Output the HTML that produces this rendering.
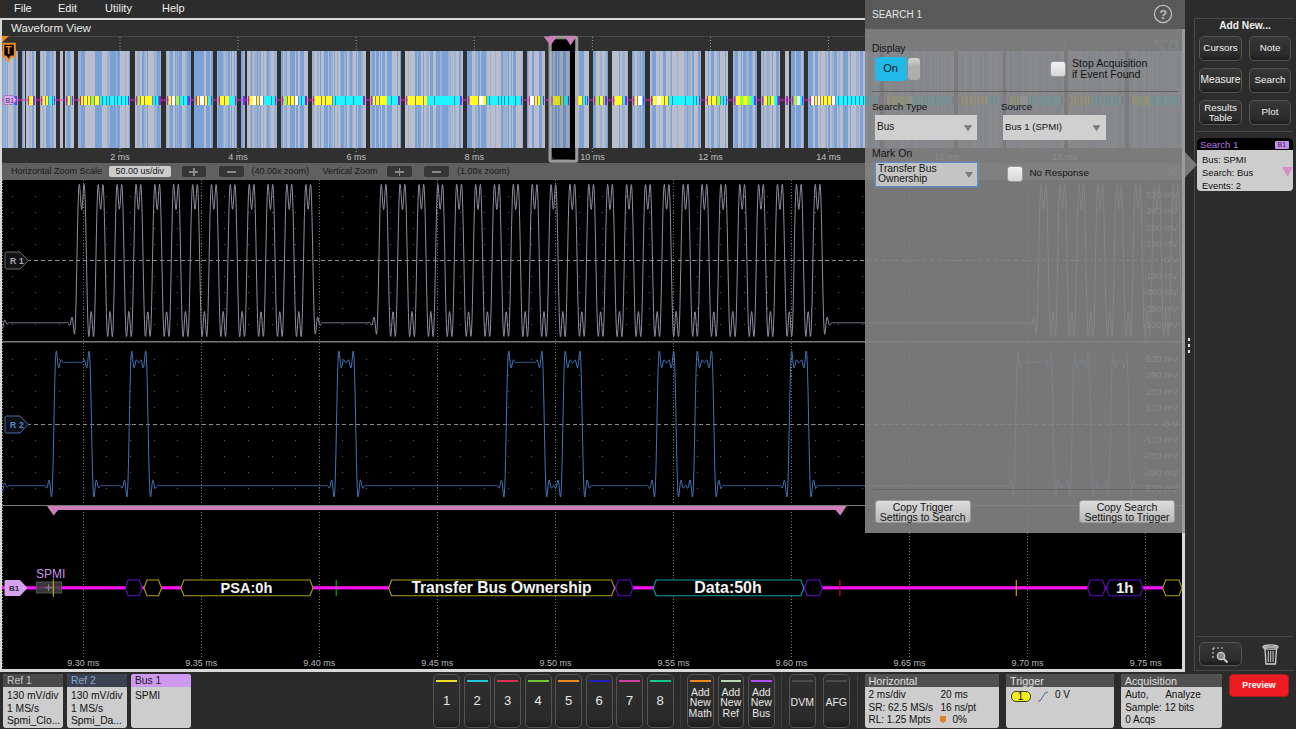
<!DOCTYPE html><html><head><meta charset="utf-8"><style>
*{margin:0;padding:0;box-sizing:border-box}
html,body{width:1296px;height:729px;overflow:hidden;background:#2b2b2b;font-family:"Liberation Sans", sans-serif;}
.a{position:absolute}
.t{position:absolute;white-space:nowrap;line-height:1}
</style></head><body>
<div class="a" style="left:0;top:0;width:1296px;height:18px;background:#2c2c2c"></div>
<div class="t" style="left:14px;top:2.5px;font-size:11px;color:#f0f0f0">File</div>
<div class="t" style="left:58px;top:2.5px;font-size:11px;color:#f0f0f0">Edit</div>
<div class="t" style="left:105px;top:2.5px;font-size:11px;color:#f0f0f0">Utility</div>
<div class="t" style="left:162px;top:2.5px;font-size:11px;color:#f0f0f0">Help</div>
<div class="a" style="left:0;top:18px;width:1184.5px;height:653.5px;background:#d8d8d8"></div>
<div class="a" style="left:2px;top:20px;width:1180px;height:16px;background:#2e2e2e"></div>
<div class="t" style="left:11px;top:23px;font-size:11.5px;color:#e8e8e8">Waveform View</div>
<div class="a" style="left:2px;top:36px;width:1180px;height:1px;background:#4a4a4a"></div>
<div class="a" style="left:2px;top:37px;width:1180px;height:126px;background:#303030"></div>
<div class="a" style="left:2px;top:163px;width:1180px;height:17px;background:#606060"></div>
<div class="a" style="left:2px;top:180px;width:1180px;height:489px;background:#000"></div>
<svg class="a" style="left:0;top:0" width="1296" height="729" viewBox="0 0 1296 729">
<g shape-rendering="crispEdges">
<rect x="2.00" y="51" width="15.80" height="97" fill="#7aa2d6"/>
<rect x="3.00" y="51" width="2.00" height="97" fill="#9cb0d0"/>
<rect x="6.00" y="51" width="1.00" height="97" fill="#b9bdcc"/>
<rect x="8.00" y="51" width="1.00" height="97" fill="#b9bdcc"/>
<rect x="9.00" y="51" width="1.00" height="97" fill="#b9bdcc"/>
<rect x="10.00" y="51" width="1.00" height="97" fill="#b9bdcc"/>
<rect x="11.00" y="51" width="1.00" height="97" fill="#b9bdcc"/>
<rect x="12.00" y="51" width="1.00" height="97" fill="#b9bdcc"/>
<rect x="13.00" y="51" width="1.00" height="97" fill="#9cb0d0"/>
<rect x="16.00" y="51" width="1.80" height="97" fill="#9cb0d0"/>
<rect x="21.80" y="51" width="3.50" height="97" fill="#7aa2d6"/>
<rect x="22.80" y="51" width="1.00" height="97" fill="#9cb0d0"/>
<rect x="23.80" y="51" width="1.00" height="97" fill="#b9bdcc"/>
<rect x="24.80" y="51" width="0.50" height="97" fill="#9cb0d0"/>
<rect x="26.40" y="51" width="9.30" height="97" fill="#7aa2d6"/>
<rect x="26.40" y="51" width="2.00" height="97" fill="#b9bdcc"/>
<rect x="28.40" y="51" width="1.00" height="97" fill="#b9bdcc"/>
<rect x="29.40" y="51" width="2.00" height="97" fill="#9cb0d0"/>
<rect x="31.40" y="51" width="1.00" height="97" fill="#b9bdcc"/>
<rect x="34.40" y="51" width="1.30" height="97" fill="#b9bdcc"/>
<rect x="39.60" y="51" width="16.40" height="97" fill="#7aa2d6"/>
<rect x="39.60" y="51" width="1.00" height="97" fill="#9cb0d0"/>
<rect x="40.60" y="51" width="2.00" height="97" fill="#b9bdcc"/>
<rect x="42.60" y="51" width="1.00" height="97" fill="#9cb0d0"/>
<rect x="43.60" y="51" width="2.00" height="97" fill="#b9bdcc"/>
<rect x="49.60" y="51" width="1.00" height="97" fill="#9cb0d0"/>
<rect x="50.60" y="51" width="1.00" height="97" fill="#9cb0d0"/>
<rect x="52.60" y="51" width="1.00" height="97" fill="#9cb0d0"/>
<rect x="53.60" y="51" width="1.00" height="97" fill="#b9bdcc"/>
<rect x="54.60" y="51" width="1.00" height="97" fill="#b9bdcc"/>
<rect x="55.60" y="51" width="0.40" height="97" fill="#b9bdcc"/>
<rect x="60.00" y="51" width="3.30" height="97" fill="#7aa2d6"/>
<rect x="60.00" y="51" width="2.00" height="97" fill="#b9bdcc"/>
<rect x="62.00" y="51" width="1.00" height="97" fill="#b9bdcc"/>
<rect x="63.00" y="51" width="0.30" height="97" fill="#9cb0d0"/>
<rect x="64.60" y="51" width="9.40" height="97" fill="#7aa2d6"/>
<rect x="64.60" y="51" width="1.00" height="97" fill="#b9bdcc"/>
<rect x="65.60" y="51" width="1.00" height="97" fill="#9cb0d0"/>
<rect x="69.60" y="51" width="1.00" height="97" fill="#9cb0d0"/>
<rect x="70.60" y="51" width="3.00" height="97" fill="#b9bdcc"/>
<rect x="78.00" y="51" width="52.00" height="97" fill="#7aa2d6"/>
<rect x="78.00" y="51" width="3.00" height="97" fill="#9cb0d0"/>
<rect x="85.00" y="51" width="3.00" height="97" fill="#b9bdcc"/>
<rect x="88.00" y="51" width="1.00" height="97" fill="#b9bdcc"/>
<rect x="89.00" y="51" width="1.00" height="97" fill="#b9bdcc"/>
<rect x="90.00" y="51" width="1.00" height="97" fill="#b9bdcc"/>
<rect x="91.00" y="51" width="1.00" height="97" fill="#b9bdcc"/>
<rect x="92.00" y="51" width="1.00" height="97" fill="#b9bdcc"/>
<rect x="93.00" y="51" width="1.00" height="97" fill="#b9bdcc"/>
<rect x="94.00" y="51" width="1.00" height="97" fill="#b9bdcc"/>
<rect x="102.00" y="51" width="1.00" height="97" fill="#b9bdcc"/>
<rect x="103.00" y="51" width="1.00" height="97" fill="#b9bdcc"/>
<rect x="104.00" y="51" width="1.00" height="97" fill="#b9bdcc"/>
<rect x="105.00" y="51" width="1.00" height="97" fill="#b9bdcc"/>
<rect x="106.00" y="51" width="1.00" height="97" fill="#b9bdcc"/>
<rect x="107.00" y="51" width="2.00" height="97" fill="#9cb0d0"/>
<rect x="109.00" y="51" width="1.00" height="97" fill="#9cb0d0"/>
<rect x="116.00" y="51" width="1.00" height="97" fill="#9cb0d0"/>
<rect x="120.00" y="51" width="2.00" height="97" fill="#b9bdcc"/>
<rect x="122.00" y="51" width="1.00" height="97" fill="#b9bdcc"/>
<rect x="123.00" y="51" width="1.00" height="97" fill="#b9bdcc"/>
<rect x="124.00" y="51" width="1.00" height="97" fill="#b9bdcc"/>
<rect x="125.00" y="51" width="1.00" height="97" fill="#9cb0d0"/>
<rect x="126.00" y="51" width="1.00" height="97" fill="#b9bdcc"/>
<rect x="127.00" y="51" width="1.00" height="97" fill="#b9bdcc"/>
<rect x="128.00" y="51" width="1.00" height="97" fill="#b9bdcc"/>
<rect x="134.70" y="51" width="26.70" height="97" fill="#7aa2d6"/>
<rect x="134.70" y="51" width="2.00" height="97" fill="#b9bdcc"/>
<rect x="136.70" y="51" width="1.00" height="97" fill="#9cb0d0"/>
<rect x="137.70" y="51" width="1.00" height="97" fill="#9cb0d0"/>
<rect x="138.70" y="51" width="1.00" height="97" fill="#9cb0d0"/>
<rect x="139.70" y="51" width="2.00" height="97" fill="#b9bdcc"/>
<rect x="143.70" y="51" width="2.00" height="97" fill="#9cb0d0"/>
<rect x="145.70" y="51" width="1.00" height="97" fill="#b9bdcc"/>
<rect x="147.70" y="51" width="3.00" height="97" fill="#b9bdcc"/>
<rect x="150.70" y="51" width="1.00" height="97" fill="#b9bdcc"/>
<rect x="151.70" y="51" width="1.00" height="97" fill="#b9bdcc"/>
<rect x="152.70" y="51" width="1.00" height="97" fill="#b9bdcc"/>
<rect x="153.70" y="51" width="3.00" height="97" fill="#9cb0d0"/>
<rect x="159.70" y="51" width="1.00" height="97" fill="#9cb0d0"/>
<rect x="160.70" y="51" width="0.70" height="97" fill="#b9bdcc"/>
<rect x="165.50" y="51" width="25.00" height="97" fill="#7aa2d6"/>
<rect x="165.50" y="51" width="1.00" height="97" fill="#9cb0d0"/>
<rect x="166.50" y="51" width="2.00" height="97" fill="#b9bdcc"/>
<rect x="168.50" y="51" width="1.00" height="97" fill="#9cb0d0"/>
<rect x="172.50" y="51" width="1.00" height="97" fill="#b9bdcc"/>
<rect x="173.50" y="51" width="1.00" height="97" fill="#b9bdcc"/>
<rect x="175.50" y="51" width="1.00" height="97" fill="#9cb0d0"/>
<rect x="177.50" y="51" width="1.00" height="97" fill="#9cb0d0"/>
<rect x="181.50" y="51" width="1.00" height="97" fill="#b9bdcc"/>
<rect x="182.50" y="51" width="1.00" height="97" fill="#b9bdcc"/>
<rect x="183.50" y="51" width="1.00" height="97" fill="#b9bdcc"/>
<rect x="184.50" y="51" width="2.00" height="97" fill="#9cb0d0"/>
<rect x="194.00" y="51" width="19.00" height="97" fill="#7aa2d6"/>
<rect x="204.00" y="51" width="1.00" height="97" fill="#b9bdcc"/>
<rect x="205.00" y="51" width="1.00" height="97" fill="#b9bdcc"/>
<rect x="210.00" y="51" width="1.00" height="97" fill="#b9bdcc"/>
<rect x="217.40" y="51" width="19.60" height="97" fill="#7aa2d6"/>
<rect x="217.40" y="51" width="1.00" height="97" fill="#9cb0d0"/>
<rect x="223.40" y="51" width="1.00" height="97" fill="#9cb0d0"/>
<rect x="224.40" y="51" width="1.00" height="97" fill="#b9bdcc"/>
<rect x="225.40" y="51" width="3.00" height="97" fill="#9cb0d0"/>
<rect x="230.40" y="51" width="1.00" height="97" fill="#b9bdcc"/>
<rect x="232.40" y="51" width="1.00" height="97" fill="#b9bdcc"/>
<rect x="233.40" y="51" width="1.00" height="97" fill="#b9bdcc"/>
<rect x="235.40" y="51" width="1.00" height="97" fill="#b9bdcc"/>
<rect x="241.00" y="51" width="4.40" height="97" fill="#7aa2d6"/>
<rect x="243.00" y="51" width="2.40" height="97" fill="#9cb0d0"/>
<rect x="246.70" y="51" width="30.30" height="97" fill="#7aa2d6"/>
<rect x="246.70" y="51" width="2.00" height="97" fill="#b9bdcc"/>
<rect x="248.70" y="51" width="1.00" height="97" fill="#b9bdcc"/>
<rect x="249.70" y="51" width="1.00" height="97" fill="#9cb0d0"/>
<rect x="251.70" y="51" width="1.00" height="97" fill="#9cb0d0"/>
<rect x="252.70" y="51" width="1.00" height="97" fill="#b9bdcc"/>
<rect x="253.70" y="51" width="2.00" height="97" fill="#9cb0d0"/>
<rect x="255.70" y="51" width="1.00" height="97" fill="#9cb0d0"/>
<rect x="257.70" y="51" width="2.00" height="97" fill="#9cb0d0"/>
<rect x="260.70" y="51" width="1.00" height="97" fill="#b9bdcc"/>
<rect x="261.70" y="51" width="1.00" height="97" fill="#b9bdcc"/>
<rect x="262.70" y="51" width="1.00" height="97" fill="#9cb0d0"/>
<rect x="263.70" y="51" width="2.00" height="97" fill="#b9bdcc"/>
<rect x="265.70" y="51" width="1.00" height="97" fill="#9cb0d0"/>
<rect x="268.70" y="51" width="2.00" height="97" fill="#9cb0d0"/>
<rect x="270.70" y="51" width="3.00" height="97" fill="#b9bdcc"/>
<rect x="273.70" y="51" width="2.00" height="97" fill="#9cb0d0"/>
<rect x="275.70" y="51" width="1.00" height="97" fill="#9cb0d0"/>
<rect x="280.60" y="51" width="27.30" height="97" fill="#7aa2d6"/>
<rect x="282.60" y="51" width="1.00" height="97" fill="#b9bdcc"/>
<rect x="283.60" y="51" width="2.00" height="97" fill="#9cb0d0"/>
<rect x="286.60" y="51" width="2.00" height="97" fill="#b9bdcc"/>
<rect x="288.60" y="51" width="1.00" height="97" fill="#b9bdcc"/>
<rect x="294.60" y="51" width="1.00" height="97" fill="#b9bdcc"/>
<rect x="297.60" y="51" width="1.00" height="97" fill="#b9bdcc"/>
<rect x="298.60" y="51" width="1.00" height="97" fill="#b9bdcc"/>
<rect x="303.60" y="51" width="2.00" height="97" fill="#b9bdcc"/>
<rect x="305.60" y="51" width="1.00" height="97" fill="#b9bdcc"/>
<rect x="306.60" y="51" width="1.00" height="97" fill="#b9bdcc"/>
<rect x="307.60" y="51" width="0.30" height="97" fill="#b9bdcc"/>
<rect x="311.80" y="51" width="54.00" height="97" fill="#7aa2d6"/>
<rect x="311.80" y="51" width="2.00" height="97" fill="#9cb0d0"/>
<rect x="313.80" y="51" width="3.00" height="97" fill="#b9bdcc"/>
<rect x="316.80" y="51" width="1.00" height="97" fill="#9cb0d0"/>
<rect x="317.80" y="51" width="1.00" height="97" fill="#9cb0d0"/>
<rect x="318.80" y="51" width="1.00" height="97" fill="#b9bdcc"/>
<rect x="320.80" y="51" width="1.00" height="97" fill="#b9bdcc"/>
<rect x="321.80" y="51" width="1.00" height="97" fill="#b9bdcc"/>
<rect x="322.80" y="51" width="1.00" height="97" fill="#b9bdcc"/>
<rect x="327.80" y="51" width="1.00" height="97" fill="#b9bdcc"/>
<rect x="330.80" y="51" width="2.00" height="97" fill="#9cb0d0"/>
<rect x="332.80" y="51" width="1.00" height="97" fill="#b9bdcc"/>
<rect x="334.80" y="51" width="1.00" height="97" fill="#b9bdcc"/>
<rect x="335.80" y="51" width="1.00" height="97" fill="#b9bdcc"/>
<rect x="336.80" y="51" width="1.00" height="97" fill="#9cb0d0"/>
<rect x="337.80" y="51" width="1.00" height="97" fill="#b9bdcc"/>
<rect x="338.80" y="51" width="1.00" height="97" fill="#b9bdcc"/>
<rect x="339.80" y="51" width="1.00" height="97" fill="#9cb0d0"/>
<rect x="343.80" y="51" width="1.00" height="97" fill="#9cb0d0"/>
<rect x="344.80" y="51" width="1.00" height="97" fill="#9cb0d0"/>
<rect x="346.80" y="51" width="1.00" height="97" fill="#b9bdcc"/>
<rect x="347.80" y="51" width="1.00" height="97" fill="#b9bdcc"/>
<rect x="348.80" y="51" width="1.00" height="97" fill="#9cb0d0"/>
<rect x="351.80" y="51" width="1.00" height="97" fill="#9cb0d0"/>
<rect x="352.80" y="51" width="3.00" height="97" fill="#b9bdcc"/>
<rect x="356.80" y="51" width="1.00" height="97" fill="#b9bdcc"/>
<rect x="360.80" y="51" width="2.00" height="97" fill="#9cb0d0"/>
<rect x="362.80" y="51" width="2.00" height="97" fill="#b9bdcc"/>
<rect x="364.80" y="51" width="1.00" height="97" fill="#b9bdcc"/>
<rect x="369.80" y="51" width="30.80" height="97" fill="#7aa2d6"/>
<rect x="369.80" y="51" width="2.00" height="97" fill="#9cb0d0"/>
<rect x="374.80" y="51" width="1.00" height="97" fill="#b9bdcc"/>
<rect x="378.80" y="51" width="1.00" height="97" fill="#b9bdcc"/>
<rect x="380.80" y="51" width="1.00" height="97" fill="#b9bdcc"/>
<rect x="384.80" y="51" width="1.00" height="97" fill="#b9bdcc"/>
<rect x="385.80" y="51" width="1.00" height="97" fill="#b9bdcc"/>
<rect x="391.80" y="51" width="2.00" height="97" fill="#b9bdcc"/>
<rect x="393.80" y="51" width="1.00" height="97" fill="#b9bdcc"/>
<rect x="394.80" y="51" width="1.00" height="97" fill="#b9bdcc"/>
<rect x="395.80" y="51" width="1.00" height="97" fill="#b9bdcc"/>
<rect x="397.80" y="51" width="2.00" height="97" fill="#b9bdcc"/>
<rect x="404.70" y="51" width="58.00" height="97" fill="#7aa2d6"/>
<rect x="404.70" y="51" width="1.00" height="97" fill="#b9bdcc"/>
<rect x="405.70" y="51" width="1.00" height="97" fill="#b9bdcc"/>
<rect x="406.70" y="51" width="1.00" height="97" fill="#b9bdcc"/>
<rect x="407.70" y="51" width="1.00" height="97" fill="#9cb0d0"/>
<rect x="408.70" y="51" width="1.00" height="97" fill="#b9bdcc"/>
<rect x="409.70" y="51" width="1.00" height="97" fill="#b9bdcc"/>
<rect x="410.70" y="51" width="1.00" height="97" fill="#b9bdcc"/>
<rect x="411.70" y="51" width="1.00" height="97" fill="#b9bdcc"/>
<rect x="412.70" y="51" width="1.00" height="97" fill="#b9bdcc"/>
<rect x="413.70" y="51" width="1.00" height="97" fill="#b9bdcc"/>
<rect x="416.70" y="51" width="1.00" height="97" fill="#9cb0d0"/>
<rect x="420.70" y="51" width="2.00" height="97" fill="#b9bdcc"/>
<rect x="423.70" y="51" width="2.00" height="97" fill="#b9bdcc"/>
<rect x="425.70" y="51" width="3.00" height="97" fill="#9cb0d0"/>
<rect x="428.70" y="51" width="1.00" height="97" fill="#b9bdcc"/>
<rect x="432.70" y="51" width="3.00" height="97" fill="#b9bdcc"/>
<rect x="439.70" y="51" width="2.00" height="97" fill="#9cb0d0"/>
<rect x="447.70" y="51" width="3.00" height="97" fill="#9cb0d0"/>
<rect x="450.70" y="51" width="1.00" height="97" fill="#b9bdcc"/>
<rect x="451.70" y="51" width="1.00" height="97" fill="#9cb0d0"/>
<rect x="452.70" y="51" width="1.00" height="97" fill="#b9bdcc"/>
<rect x="453.70" y="51" width="2.00" height="97" fill="#9cb0d0"/>
<rect x="455.70" y="51" width="3.00" height="97" fill="#b9bdcc"/>
<rect x="460.70" y="51" width="2.00" height="97" fill="#b9bdcc"/>
<rect x="466.80" y="51" width="56.20" height="97" fill="#7aa2d6"/>
<rect x="471.80" y="51" width="2.00" height="97" fill="#b9bdcc"/>
<rect x="473.80" y="51" width="1.00" height="97" fill="#b9bdcc"/>
<rect x="474.80" y="51" width="3.00" height="97" fill="#9cb0d0"/>
<rect x="479.80" y="51" width="1.00" height="97" fill="#b9bdcc"/>
<rect x="485.80" y="51" width="1.00" height="97" fill="#9cb0d0"/>
<rect x="486.80" y="51" width="3.00" height="97" fill="#b9bdcc"/>
<rect x="489.80" y="51" width="1.00" height="97" fill="#9cb0d0"/>
<rect x="490.80" y="51" width="3.00" height="97" fill="#b9bdcc"/>
<rect x="493.80" y="51" width="1.00" height="97" fill="#b9bdcc"/>
<rect x="494.80" y="51" width="1.00" height="97" fill="#9cb0d0"/>
<rect x="495.80" y="51" width="3.00" height="97" fill="#b9bdcc"/>
<rect x="498.80" y="51" width="1.00" height="97" fill="#b9bdcc"/>
<rect x="499.80" y="51" width="1.00" height="97" fill="#b9bdcc"/>
<rect x="502.80" y="51" width="3.00" height="97" fill="#9cb0d0"/>
<rect x="505.80" y="51" width="1.00" height="97" fill="#9cb0d0"/>
<rect x="506.80" y="51" width="1.00" height="97" fill="#9cb0d0"/>
<rect x="508.80" y="51" width="2.00" height="97" fill="#b9bdcc"/>
<rect x="511.80" y="51" width="1.00" height="97" fill="#b9bdcc"/>
<rect x="515.80" y="51" width="2.00" height="97" fill="#b9bdcc"/>
<rect x="517.80" y="51" width="1.00" height="97" fill="#b9bdcc"/>
<rect x="518.80" y="51" width="1.00" height="97" fill="#b9bdcc"/>
<rect x="519.80" y="51" width="1.00" height="97" fill="#b9bdcc"/>
<rect x="520.80" y="51" width="1.00" height="97" fill="#b9bdcc"/>
<rect x="521.80" y="51" width="1.20" height="97" fill="#9cb0d0"/>
<rect x="527.00" y="51" width="18.00" height="97" fill="#7aa2d6"/>
<rect x="528.00" y="51" width="1.00" height="97" fill="#9cb0d0"/>
<rect x="529.00" y="51" width="2.00" height="97" fill="#b9bdcc"/>
<rect x="531.00" y="51" width="1.00" height="97" fill="#b9bdcc"/>
<rect x="534.00" y="51" width="2.00" height="97" fill="#b9bdcc"/>
<rect x="536.00" y="51" width="1.00" height="97" fill="#b9bdcc"/>
<rect x="537.00" y="51" width="1.00" height="97" fill="#b9bdcc"/>
<rect x="538.00" y="51" width="1.00" height="97" fill="#b9bdcc"/>
<rect x="542.00" y="51" width="3.00" height="97" fill="#b9bdcc"/>
<rect x="549.70" y="51" width="20.30" height="97" fill="#7aa2d6"/>
<rect x="549.70" y="51" width="1.00" height="97" fill="#b9bdcc"/>
<rect x="552.70" y="51" width="2.00" height="97" fill="#b9bdcc"/>
<rect x="556.70" y="51" width="1.00" height="97" fill="#b9bdcc"/>
<rect x="558.70" y="51" width="1.00" height="97" fill="#9cb0d0"/>
<rect x="559.70" y="51" width="1.00" height="97" fill="#b9bdcc"/>
<rect x="560.70" y="51" width="1.00" height="97" fill="#b9bdcc"/>
<rect x="561.70" y="51" width="1.00" height="97" fill="#b9bdcc"/>
<rect x="565.70" y="51" width="3.00" height="97" fill="#b9bdcc"/>
<rect x="568.70" y="51" width="1.30" height="97" fill="#9cb0d0"/>
<rect x="575.00" y="51" width="14.00" height="97" fill="#7aa2d6"/>
<rect x="575.00" y="51" width="3.00" height="97" fill="#b9bdcc"/>
<rect x="578.00" y="51" width="1.00" height="97" fill="#b9bdcc"/>
<rect x="584.00" y="51" width="2.00" height="97" fill="#b9bdcc"/>
<rect x="586.00" y="51" width="1.00" height="97" fill="#b9bdcc"/>
<rect x="587.00" y="51" width="1.00" height="97" fill="#b9bdcc"/>
<rect x="588.00" y="51" width="1.00" height="97" fill="#b9bdcc"/>
<rect x="592.50" y="51" width="15.20" height="97" fill="#7aa2d6"/>
<rect x="595.50" y="51" width="3.00" height="97" fill="#b9bdcc"/>
<rect x="598.50" y="51" width="1.00" height="97" fill="#b9bdcc"/>
<rect x="599.50" y="51" width="2.00" height="97" fill="#9cb0d0"/>
<rect x="601.50" y="51" width="2.00" height="97" fill="#b9bdcc"/>
<rect x="603.50" y="51" width="1.00" height="97" fill="#b9bdcc"/>
<rect x="604.50" y="51" width="1.00" height="97" fill="#9cb0d0"/>
<rect x="605.50" y="51" width="1.00" height="97" fill="#9cb0d0"/>
<rect x="611.80" y="51" width="16.10" height="97" fill="#7aa2d6"/>
<rect x="611.80" y="51" width="2.00" height="97" fill="#b9bdcc"/>
<rect x="613.80" y="51" width="1.00" height="97" fill="#b9bdcc"/>
<rect x="614.80" y="51" width="1.00" height="97" fill="#b9bdcc"/>
<rect x="615.80" y="51" width="1.00" height="97" fill="#b9bdcc"/>
<rect x="616.80" y="51" width="1.00" height="97" fill="#b9bdcc"/>
<rect x="617.80" y="51" width="1.00" height="97" fill="#b9bdcc"/>
<rect x="619.80" y="51" width="2.00" height="97" fill="#b9bdcc"/>
<rect x="621.80" y="51" width="3.00" height="97" fill="#9cb0d0"/>
<rect x="624.80" y="51" width="2.00" height="97" fill="#b9bdcc"/>
<rect x="626.80" y="51" width="1.00" height="97" fill="#9cb0d0"/>
<rect x="631.80" y="51" width="13.20" height="97" fill="#7aa2d6"/>
<rect x="632.80" y="51" width="2.00" height="97" fill="#9cb0d0"/>
<rect x="634.80" y="51" width="1.00" height="97" fill="#b9bdcc"/>
<rect x="635.80" y="51" width="1.00" height="97" fill="#b9bdcc"/>
<rect x="636.80" y="51" width="3.00" height="97" fill="#9cb0d0"/>
<rect x="640.80" y="51" width="1.00" height="97" fill="#b9bdcc"/>
<rect x="649.80" y="51" width="51.20" height="97" fill="#7aa2d6"/>
<rect x="649.80" y="51" width="2.00" height="97" fill="#b9bdcc"/>
<rect x="655.80" y="51" width="2.00" height="97" fill="#b9bdcc"/>
<rect x="657.80" y="51" width="1.00" height="97" fill="#b9bdcc"/>
<rect x="658.80" y="51" width="1.00" height="97" fill="#9cb0d0"/>
<rect x="659.80" y="51" width="3.00" height="97" fill="#b9bdcc"/>
<rect x="665.80" y="51" width="2.00" height="97" fill="#b9bdcc"/>
<rect x="667.80" y="51" width="1.00" height="97" fill="#b9bdcc"/>
<rect x="668.80" y="51" width="1.00" height="97" fill="#b9bdcc"/>
<rect x="669.80" y="51" width="1.00" height="97" fill="#9cb0d0"/>
<rect x="671.80" y="51" width="3.00" height="97" fill="#b9bdcc"/>
<rect x="674.80" y="51" width="1.00" height="97" fill="#b9bdcc"/>
<rect x="675.80" y="51" width="1.00" height="97" fill="#b9bdcc"/>
<rect x="676.80" y="51" width="1.00" height="97" fill="#9cb0d0"/>
<rect x="677.80" y="51" width="2.00" height="97" fill="#b9bdcc"/>
<rect x="679.80" y="51" width="1.00" height="97" fill="#b9bdcc"/>
<rect x="680.80" y="51" width="1.00" height="97" fill="#b9bdcc"/>
<rect x="681.80" y="51" width="1.00" height="97" fill="#b9bdcc"/>
<rect x="682.80" y="51" width="1.00" height="97" fill="#b9bdcc"/>
<rect x="683.80" y="51" width="1.00" height="97" fill="#9cb0d0"/>
<rect x="684.80" y="51" width="1.00" height="97" fill="#9cb0d0"/>
<rect x="685.80" y="51" width="1.00" height="97" fill="#9cb0d0"/>
<rect x="687.80" y="51" width="3.00" height="97" fill="#9cb0d0"/>
<rect x="690.80" y="51" width="1.00" height="97" fill="#b9bdcc"/>
<rect x="693.80" y="51" width="3.00" height="97" fill="#b9bdcc"/>
<rect x="696.80" y="51" width="1.00" height="97" fill="#b9bdcc"/>
<rect x="699.80" y="51" width="1.00" height="97" fill="#9cb0d0"/>
<rect x="700.80" y="51" width="0.20" height="97" fill="#b9bdcc"/>
<rect x="705.00" y="51" width="23.00" height="97" fill="#7aa2d6"/>
<rect x="705.00" y="51" width="2.00" height="97" fill="#b9bdcc"/>
<rect x="707.00" y="51" width="1.00" height="97" fill="#b9bdcc"/>
<rect x="709.00" y="51" width="2.00" height="97" fill="#b9bdcc"/>
<rect x="714.00" y="51" width="1.00" height="97" fill="#b9bdcc"/>
<rect x="715.00" y="51" width="1.00" height="97" fill="#b9bdcc"/>
<rect x="716.00" y="51" width="1.00" height="97" fill="#b9bdcc"/>
<rect x="717.00" y="51" width="2.00" height="97" fill="#9cb0d0"/>
<rect x="720.00" y="51" width="2.00" height="97" fill="#b9bdcc"/>
<rect x="722.00" y="51" width="1.00" height="97" fill="#b9bdcc"/>
<rect x="723.00" y="51" width="1.00" height="97" fill="#b9bdcc"/>
<rect x="724.00" y="51" width="1.00" height="97" fill="#b9bdcc"/>
<rect x="726.00" y="51" width="1.00" height="97" fill="#b9bdcc"/>
<rect x="727.00" y="51" width="1.00" height="97" fill="#b9bdcc"/>
<rect x="732.70" y="51" width="23.80" height="97" fill="#7aa2d6"/>
<rect x="732.70" y="51" width="2.00" height="97" fill="#9cb0d0"/>
<rect x="737.70" y="51" width="3.00" height="97" fill="#b9bdcc"/>
<rect x="741.70" y="51" width="1.00" height="97" fill="#b9bdcc"/>
<rect x="745.70" y="51" width="3.00" height="97" fill="#9cb0d0"/>
<rect x="751.70" y="51" width="1.00" height="97" fill="#9cb0d0"/>
<rect x="752.70" y="51" width="1.00" height="97" fill="#b9bdcc"/>
<rect x="753.70" y="51" width="1.00" height="97" fill="#b9bdcc"/>
<rect x="760.70" y="51" width="19.70" height="97" fill="#7aa2d6"/>
<rect x="760.70" y="51" width="1.00" height="97" fill="#9cb0d0"/>
<rect x="761.70" y="51" width="1.00" height="97" fill="#b9bdcc"/>
<rect x="763.70" y="51" width="2.00" height="97" fill="#b9bdcc"/>
<rect x="765.70" y="51" width="3.00" height="97" fill="#9cb0d0"/>
<rect x="768.70" y="51" width="1.00" height="97" fill="#9cb0d0"/>
<rect x="769.70" y="51" width="2.00" height="97" fill="#b9bdcc"/>
<rect x="772.70" y="51" width="2.00" height="97" fill="#b9bdcc"/>
<rect x="774.70" y="51" width="1.00" height="97" fill="#b9bdcc"/>
<rect x="778.70" y="51" width="1.00" height="97" fill="#b9bdcc"/>
<rect x="779.70" y="51" width="0.70" height="97" fill="#b9bdcc"/>
<rect x="784.50" y="51" width="4.50" height="97" fill="#7aa2d6"/>
<rect x="784.50" y="51" width="1.00" height="97" fill="#b9bdcc"/>
<rect x="785.50" y="51" width="1.00" height="97" fill="#b9bdcc"/>
<rect x="786.50" y="51" width="1.00" height="97" fill="#b9bdcc"/>
<rect x="787.50" y="51" width="1.00" height="97" fill="#b9bdcc"/>
<rect x="788.50" y="51" width="0.50" height="97" fill="#b9bdcc"/>
<rect x="790.70" y="51" width="13.30" height="97" fill="#7aa2d6"/>
<rect x="794.70" y="51" width="1.00" height="97" fill="#b9bdcc"/>
<rect x="800.70" y="51" width="1.00" height="97" fill="#b9bdcc"/>
<rect x="801.70" y="51" width="1.00" height="97" fill="#b9bdcc"/>
<rect x="808.00" y="51" width="72.40" height="97" fill="#7aa2d6"/>
<rect x="813.00" y="51" width="1.00" height="97" fill="#b9bdcc"/>
<rect x="814.00" y="51" width="1.00" height="97" fill="#b9bdcc"/>
<rect x="818.00" y="51" width="2.00" height="97" fill="#b9bdcc"/>
<rect x="820.00" y="51" width="1.00" height="97" fill="#9cb0d0"/>
<rect x="821.00" y="51" width="2.00" height="97" fill="#b9bdcc"/>
<rect x="823.00" y="51" width="1.00" height="97" fill="#b9bdcc"/>
<rect x="824.00" y="51" width="1.00" height="97" fill="#b9bdcc"/>
<rect x="825.00" y="51" width="1.00" height="97" fill="#9cb0d0"/>
<rect x="826.00" y="51" width="1.00" height="97" fill="#9cb0d0"/>
<rect x="827.00" y="51" width="1.00" height="97" fill="#b9bdcc"/>
<rect x="830.00" y="51" width="1.00" height="97" fill="#b9bdcc"/>
<rect x="831.00" y="51" width="1.00" height="97" fill="#b9bdcc"/>
<rect x="832.00" y="51" width="2.00" height="97" fill="#9cb0d0"/>
<rect x="837.00" y="51" width="1.00" height="97" fill="#b9bdcc"/>
<rect x="838.00" y="51" width="2.00" height="97" fill="#9cb0d0"/>
<rect x="840.00" y="51" width="3.00" height="97" fill="#b9bdcc"/>
<rect x="848.00" y="51" width="1.00" height="97" fill="#b9bdcc"/>
<rect x="849.00" y="51" width="1.00" height="97" fill="#b9bdcc"/>
<rect x="851.00" y="51" width="1.00" height="97" fill="#b9bdcc"/>
<rect x="852.00" y="51" width="1.00" height="97" fill="#b9bdcc"/>
<rect x="853.00" y="51" width="1.00" height="97" fill="#b9bdcc"/>
<rect x="854.00" y="51" width="1.00" height="97" fill="#b9bdcc"/>
<rect x="855.00" y="51" width="1.00" height="97" fill="#b9bdcc"/>
<rect x="856.00" y="51" width="1.00" height="97" fill="#9cb0d0"/>
<rect x="857.00" y="51" width="1.00" height="97" fill="#9cb0d0"/>
<rect x="858.00" y="51" width="1.00" height="97" fill="#9cb0d0"/>
<rect x="859.00" y="51" width="1.00" height="97" fill="#b9bdcc"/>
<rect x="863.00" y="51" width="1.00" height="97" fill="#b9bdcc"/>
<rect x="864.00" y="51" width="1.00" height="97" fill="#b9bdcc"/>
<rect x="865.00" y="51" width="1.00" height="97" fill="#b9bdcc"/>
<rect x="866.00" y="51" width="1.00" height="97" fill="#b9bdcc"/>
<rect x="867.00" y="51" width="1.00" height="97" fill="#b9bdcc"/>
<rect x="868.00" y="51" width="1.00" height="97" fill="#9cb0d0"/>
<rect x="873.00" y="51" width="1.00" height="97" fill="#9cb0d0"/>
<rect x="874.00" y="51" width="1.00" height="97" fill="#9cb0d0"/>
<rect x="875.00" y="51" width="1.00" height="97" fill="#b9bdcc"/>
<rect x="876.00" y="51" width="1.00" height="97" fill="#b9bdcc"/>
<rect x="878.00" y="51" width="1.00" height="97" fill="#9cb0d0"/>
<rect x="884.20" y="51" width="70.00" height="97" fill="#7aa2d6"/>
<rect x="887.20" y="51" width="1.00" height="97" fill="#9cb0d0"/>
<rect x="888.20" y="51" width="1.00" height="97" fill="#b9bdcc"/>
<rect x="889.20" y="51" width="2.00" height="97" fill="#9cb0d0"/>
<rect x="891.20" y="51" width="1.00" height="97" fill="#b9bdcc"/>
<rect x="894.20" y="51" width="1.00" height="97" fill="#9cb0d0"/>
<rect x="895.20" y="51" width="1.00" height="97" fill="#9cb0d0"/>
<rect x="900.20" y="51" width="3.00" height="97" fill="#b9bdcc"/>
<rect x="903.20" y="51" width="1.00" height="97" fill="#b9bdcc"/>
<rect x="906.20" y="51" width="2.00" height="97" fill="#b9bdcc"/>
<rect x="908.20" y="51" width="1.00" height="97" fill="#9cb0d0"/>
<rect x="914.20" y="51" width="2.00" height="97" fill="#b9bdcc"/>
<rect x="916.20" y="51" width="1.00" height="97" fill="#b9bdcc"/>
<rect x="917.20" y="51" width="1.00" height="97" fill="#9cb0d0"/>
<rect x="918.20" y="51" width="1.00" height="97" fill="#b9bdcc"/>
<rect x="919.20" y="51" width="1.00" height="97" fill="#9cb0d0"/>
<rect x="923.20" y="51" width="2.00" height="97" fill="#b9bdcc"/>
<rect x="927.20" y="51" width="3.00" height="97" fill="#9cb0d0"/>
<rect x="930.20" y="51" width="1.00" height="97" fill="#b9bdcc"/>
<rect x="931.20" y="51" width="1.00" height="97" fill="#9cb0d0"/>
<rect x="932.20" y="51" width="1.00" height="97" fill="#b9bdcc"/>
<rect x="935.20" y="51" width="1.00" height="97" fill="#b9bdcc"/>
<rect x="937.20" y="51" width="2.00" height="97" fill="#b9bdcc"/>
<rect x="941.20" y="51" width="2.00" height="97" fill="#b9bdcc"/>
<rect x="943.20" y="51" width="3.00" height="97" fill="#9cb0d0"/>
<rect x="946.20" y="51" width="1.00" height="97" fill="#9cb0d0"/>
<rect x="947.20" y="51" width="1.00" height="97" fill="#9cb0d0"/>
<rect x="950.20" y="51" width="2.00" height="97" fill="#b9bdcc"/>
<rect x="952.20" y="51" width="1.00" height="97" fill="#b9bdcc"/>
<rect x="953.20" y="51" width="1.00" height="97" fill="#b9bdcc"/>
<rect x="958.00" y="51" width="44.60" height="97" fill="#7aa2d6"/>
<rect x="958.00" y="51" width="1.00" height="97" fill="#b9bdcc"/>
<rect x="960.00" y="51" width="1.00" height="97" fill="#b9bdcc"/>
<rect x="963.00" y="51" width="3.00" height="97" fill="#b9bdcc"/>
<rect x="966.00" y="51" width="1.00" height="97" fill="#b9bdcc"/>
<rect x="967.00" y="51" width="2.00" height="97" fill="#9cb0d0"/>
<rect x="972.00" y="51" width="3.00" height="97" fill="#b9bdcc"/>
<rect x="975.00" y="51" width="1.00" height="97" fill="#b9bdcc"/>
<rect x="976.00" y="51" width="2.00" height="97" fill="#9cb0d0"/>
<rect x="978.00" y="51" width="1.00" height="97" fill="#9cb0d0"/>
<rect x="979.00" y="51" width="1.00" height="97" fill="#b9bdcc"/>
<rect x="982.00" y="51" width="2.00" height="97" fill="#b9bdcc"/>
<rect x="988.00" y="51" width="2.00" height="97" fill="#b9bdcc"/>
<rect x="990.00" y="51" width="1.00" height="97" fill="#b9bdcc"/>
<rect x="991.00" y="51" width="1.00" height="97" fill="#b9bdcc"/>
<rect x="992.00" y="51" width="2.00" height="97" fill="#9cb0d0"/>
<rect x="994.00" y="51" width="3.00" height="97" fill="#b9bdcc"/>
<rect x="997.00" y="51" width="1.00" height="97" fill="#b9bdcc"/>
<rect x="998.00" y="51" width="1.00" height="97" fill="#b9bdcc"/>
<rect x="999.00" y="51" width="3.00" height="97" fill="#9cb0d0"/>
<rect x="1006.40" y="51" width="57.30" height="97" fill="#7aa2d6"/>
<rect x="1006.40" y="51" width="2.00" height="97" fill="#9cb0d0"/>
<rect x="1008.40" y="51" width="1.00" height="97" fill="#b9bdcc"/>
<rect x="1013.40" y="51" width="1.00" height="97" fill="#b9bdcc"/>
<rect x="1014.40" y="51" width="1.00" height="97" fill="#b9bdcc"/>
<rect x="1022.40" y="51" width="1.00" height="97" fill="#b9bdcc"/>
<rect x="1023.40" y="51" width="1.00" height="97" fill="#b9bdcc"/>
<rect x="1024.40" y="51" width="1.00" height="97" fill="#b9bdcc"/>
<rect x="1027.40" y="51" width="2.00" height="97" fill="#b9bdcc"/>
<rect x="1029.40" y="51" width="1.00" height="97" fill="#9cb0d0"/>
<rect x="1030.40" y="51" width="1.00" height="97" fill="#b9bdcc"/>
<rect x="1031.40" y="51" width="1.00" height="97" fill="#b9bdcc"/>
<rect x="1032.40" y="51" width="1.00" height="97" fill="#b9bdcc"/>
<rect x="1034.40" y="51" width="2.00" height="97" fill="#b9bdcc"/>
<rect x="1036.40" y="51" width="1.00" height="97" fill="#b9bdcc"/>
<rect x="1037.40" y="51" width="1.00" height="97" fill="#b9bdcc"/>
<rect x="1039.40" y="51" width="2.00" height="97" fill="#9cb0d0"/>
<rect x="1043.40" y="51" width="1.00" height="97" fill="#b9bdcc"/>
<rect x="1044.40" y="51" width="2.00" height="97" fill="#9cb0d0"/>
<rect x="1048.40" y="51" width="1.00" height="97" fill="#b9bdcc"/>
<rect x="1049.40" y="51" width="1.00" height="97" fill="#9cb0d0"/>
<rect x="1050.40" y="51" width="1.00" height="97" fill="#b9bdcc"/>
<rect x="1051.40" y="51" width="1.00" height="97" fill="#9cb0d0"/>
<rect x="1052.40" y="51" width="1.00" height="97" fill="#9cb0d0"/>
<rect x="1053.40" y="51" width="1.00" height="97" fill="#b9bdcc"/>
<rect x="1054.40" y="51" width="1.00" height="97" fill="#b9bdcc"/>
<rect x="1061.40" y="51" width="2.30" height="97" fill="#b9bdcc"/>
<rect x="1067.50" y="51" width="57.30" height="97" fill="#7aa2d6"/>
<rect x="1067.50" y="51" width="1.00" height="97" fill="#b9bdcc"/>
<rect x="1068.50" y="51" width="1.00" height="97" fill="#b9bdcc"/>
<rect x="1069.50" y="51" width="1.00" height="97" fill="#b9bdcc"/>
<rect x="1070.50" y="51" width="1.00" height="97" fill="#b9bdcc"/>
<rect x="1071.50" y="51" width="1.00" height="97" fill="#9cb0d0"/>
<rect x="1072.50" y="51" width="1.00" height="97" fill="#b9bdcc"/>
<rect x="1073.50" y="51" width="1.00" height="97" fill="#9cb0d0"/>
<rect x="1074.50" y="51" width="1.00" height="97" fill="#b9bdcc"/>
<rect x="1075.50" y="51" width="1.00" height="97" fill="#9cb0d0"/>
<rect x="1076.50" y="51" width="1.00" height="97" fill="#9cb0d0"/>
<rect x="1077.50" y="51" width="2.00" height="97" fill="#b9bdcc"/>
<rect x="1079.50" y="51" width="1.00" height="97" fill="#9cb0d0"/>
<rect x="1080.50" y="51" width="2.00" height="97" fill="#b9bdcc"/>
<rect x="1084.50" y="51" width="2.00" height="97" fill="#b9bdcc"/>
<rect x="1086.50" y="51" width="1.00" height="97" fill="#b9bdcc"/>
<rect x="1092.50" y="51" width="1.00" height="97" fill="#b9bdcc"/>
<rect x="1095.50" y="51" width="2.00" height="97" fill="#9cb0d0"/>
<rect x="1097.50" y="51" width="1.00" height="97" fill="#9cb0d0"/>
<rect x="1100.50" y="51" width="1.00" height="97" fill="#b9bdcc"/>
<rect x="1101.50" y="51" width="1.00" height="97" fill="#b9bdcc"/>
<rect x="1102.50" y="51" width="1.00" height="97" fill="#b9bdcc"/>
<rect x="1103.50" y="51" width="1.00" height="97" fill="#b9bdcc"/>
<rect x="1105.50" y="51" width="1.00" height="97" fill="#b9bdcc"/>
<rect x="1106.50" y="51" width="2.00" height="97" fill="#9cb0d0"/>
<rect x="1108.50" y="51" width="1.00" height="97" fill="#b9bdcc"/>
<rect x="1109.50" y="51" width="1.00" height="97" fill="#9cb0d0"/>
<rect x="1110.50" y="51" width="1.00" height="97" fill="#9cb0d0"/>
<rect x="1111.50" y="51" width="3.00" height="97" fill="#b9bdcc"/>
<rect x="1114.50" y="51" width="1.00" height="97" fill="#b9bdcc"/>
<rect x="1115.50" y="51" width="1.00" height="97" fill="#b9bdcc"/>
<rect x="1116.50" y="51" width="1.00" height="97" fill="#b9bdcc"/>
<rect x="1120.50" y="51" width="3.00" height="97" fill="#9cb0d0"/>
<rect x="1129.40" y="51" width="52.60" height="97" fill="#7aa2d6"/>
<rect x="1133.40" y="51" width="2.00" height="97" fill="#b9bdcc"/>
<rect x="1135.40" y="51" width="1.00" height="97" fill="#b9bdcc"/>
<rect x="1136.40" y="51" width="1.00" height="97" fill="#b9bdcc"/>
<rect x="1142.40" y="51" width="1.00" height="97" fill="#9cb0d0"/>
<rect x="1143.40" y="51" width="3.00" height="97" fill="#b9bdcc"/>
<rect x="1148.40" y="51" width="1.00" height="97" fill="#9cb0d0"/>
<rect x="1149.40" y="51" width="1.00" height="97" fill="#b9bdcc"/>
<rect x="1150.40" y="51" width="1.00" height="97" fill="#b9bdcc"/>
<rect x="1152.40" y="51" width="3.00" height="97" fill="#b9bdcc"/>
<rect x="1156.40" y="51" width="1.00" height="97" fill="#b9bdcc"/>
<rect x="1157.40" y="51" width="1.00" height="97" fill="#b9bdcc"/>
<rect x="1158.40" y="51" width="1.00" height="97" fill="#b9bdcc"/>
<rect x="1165.40" y="51" width="2.00" height="97" fill="#9cb0d0"/>
<rect x="1169.40" y="51" width="1.00" height="97" fill="#b9bdcc"/>
<rect x="1170.40" y="51" width="1.00" height="97" fill="#b9bdcc"/>
<rect x="1172.40" y="51" width="2.00" height="97" fill="#9cb0d0"/>
<rect x="1174.40" y="51" width="1.00" height="97" fill="#9cb0d0"/>
<rect x="1175.40" y="51" width="1.00" height="97" fill="#b9bdcc"/>
<rect x="1176.40" y="51" width="1.00" height="97" fill="#b9bdcc"/>
<rect x="1180.40" y="51" width="1.60" height="97" fill="#b9bdcc"/>
</g>
<rect x="2" y="99.6" width="1180" height="1" fill="#e030c8"/>
<g shape-rendering="crispEdges">
<rect x="3.50" y="96" width="1" height="9" fill="#e02080"/>
<rect x="5.00" y="96" width="3.00" height="9" fill="#ffff20"/>
<rect x="7.30" y="96" width="0.8" height="9" fill="#a07090"/>
<rect x="8.00" y="96" width="3.00" height="9" fill="#ffff20"/>
<rect x="10.30" y="96" width="0.8" height="9" fill="#a07090"/>
<rect x="11.00" y="96" width="4.00" height="9" fill="#20f4ff"/>
<rect x="14.30" y="96" width="0.8" height="9" fill="#1090c0"/>
<rect x="15.00" y="96" width="0.80" height="9" fill="#20f4ff"/>
<rect x="15.30" y="96" width="1.8" height="9" fill="#8030f0"/>
<rect x="27.90" y="96" width="1" height="9" fill="#e02080"/>
<rect x="29.40" y="96" width="4.30" height="9" fill="#ffff20"/>
<rect x="33.20" y="96" width="1.8" height="9" fill="#8030f0"/>
<rect x="41.10" y="96" width="1" height="9" fill="#e02080"/>
<rect x="42.60" y="96" width="3.00" height="9" fill="#ffff20"/>
<rect x="44.90" y="96" width="0.8" height="9" fill="#a07090"/>
<rect x="45.60" y="96" width="3.00" height="9" fill="#ffff20"/>
<rect x="47.90" y="96" width="0.8" height="9" fill="#a07090"/>
<rect x="48.60" y="96" width="4.00" height="9" fill="#20f4ff"/>
<rect x="51.90" y="96" width="0.8" height="9" fill="#1090c0"/>
<rect x="52.60" y="96" width="1.40" height="9" fill="#20f4ff"/>
<rect x="53.50" y="96" width="1.8" height="9" fill="#8030f0"/>
<rect x="66.10" y="96" width="1" height="9" fill="#e02080"/>
<rect x="67.60" y="96" width="3.50" height="9" fill="#ffff20"/>
<rect x="70.40" y="96" width="0.8" height="9" fill="#a07090"/>
<rect x="71.10" y="96" width="0.90" height="9" fill="#20f4ff"/>
<rect x="71.50" y="96" width="1.8" height="9" fill="#a020c0"/>
<rect x="79.50" y="96" width="1" height="9" fill="#e02080"/>
<rect x="81.00" y="96" width="3.00" height="9" fill="#ffff20"/>
<rect x="83.30" y="96" width="0.8" height="9" fill="#a07090"/>
<rect x="84.00" y="96" width="4.00" height="9" fill="#ffff20"/>
<rect x="87.30" y="96" width="0.8" height="9" fill="#a07090"/>
<rect x="88.00" y="96" width="3.00" height="9" fill="#ffff20"/>
<rect x="90.30" y="96" width="0.8" height="9" fill="#a07090"/>
<rect x="91.00" y="96" width="4.00" height="9" fill="#90ff40"/>
<rect x="94.30" y="96" width="0.8" height="9" fill="#a07090"/>
<rect x="95.00" y="96" width="4.50" height="9" fill="#ffff20"/>
<rect x="98.80" y="96" width="0.8" height="9" fill="#a07090"/>
<rect x="99.50" y="96" width="3.00" height="9" fill="#20f4ff"/>
<rect x="101.80" y="96" width="0.8" height="9" fill="#1090c0"/>
<rect x="102.50" y="96" width="4.50" height="9" fill="#20f4ff"/>
<rect x="106.30" y="96" width="0.8" height="9" fill="#1090c0"/>
<rect x="107.00" y="96" width="3.00" height="9" fill="#20f4ff"/>
<rect x="109.30" y="96" width="0.8" height="9" fill="#1090c0"/>
<rect x="110.00" y="96" width="4.50" height="9" fill="#20f4ff"/>
<rect x="113.80" y="96" width="0.8" height="9" fill="#1090c0"/>
<rect x="114.50" y="96" width="3.00" height="9" fill="#20f4ff"/>
<rect x="116.80" y="96" width="0.8" height="9" fill="#1090c0"/>
<rect x="117.50" y="96" width="4.00" height="9" fill="#20f4ff"/>
<rect x="120.80" y="96" width="0.8" height="9" fill="#1090c0"/>
<rect x="121.50" y="96" width="4.50" height="9" fill="#20f4ff"/>
<rect x="125.30" y="96" width="0.8" height="9" fill="#1090c0"/>
<rect x="126.00" y="96" width="2.00" height="9" fill="#20f4ff"/>
<rect x="127.50" y="96" width="1.8" height="9" fill="#8030f0"/>
<rect x="136.20" y="96" width="1" height="9" fill="#e02080"/>
<rect x="137.70" y="96" width="3.00" height="9" fill="#90ff40"/>
<rect x="140.00" y="96" width="0.8" height="9" fill="#a07090"/>
<rect x="140.70" y="96" width="4.00" height="9" fill="#ffff20"/>
<rect x="144.00" y="96" width="0.8" height="9" fill="#a07090"/>
<rect x="144.70" y="96" width="4.50" height="9" fill="#ffff20"/>
<rect x="148.50" y="96" width="0.8" height="9" fill="#a07090"/>
<rect x="149.20" y="96" width="3.50" height="9" fill="#ffff20"/>
<rect x="152.00" y="96" width="0.8" height="9" fill="#a07090"/>
<rect x="152.70" y="96" width="3.00" height="9" fill="#20f4ff"/>
<rect x="155.00" y="96" width="0.8" height="9" fill="#1090c0"/>
<rect x="155.70" y="96" width="3.00" height="9" fill="#20f4ff"/>
<rect x="158.00" y="96" width="0.8" height="9" fill="#1090c0"/>
<rect x="158.70" y="96" width="0.70" height="9" fill="#20f4ff"/>
<rect x="158.90" y="96" width="1.8" height="9" fill="#a020c0"/>
<rect x="167.00" y="96" width="1" height="9" fill="#e02080"/>
<rect x="168.50" y="96" width="3.50" height="9" fill="#ffff20"/>
<rect x="171.30" y="96" width="0.8" height="9" fill="#a07090"/>
<rect x="172.00" y="96" width="4.00" height="9" fill="#ffffff"/>
<rect x="175.30" y="96" width="0.8" height="9" fill="#a07090"/>
<rect x="176.00" y="96" width="4.00" height="9" fill="#90ff40"/>
<rect x="179.30" y="96" width="0.8" height="9" fill="#a07090"/>
<rect x="180.00" y="96" width="3.50" height="9" fill="#20f4ff"/>
<rect x="182.80" y="96" width="0.8" height="9" fill="#1090c0"/>
<rect x="183.50" y="96" width="4.00" height="9" fill="#20f4ff"/>
<rect x="186.80" y="96" width="0.8" height="9" fill="#1090c0"/>
<rect x="187.50" y="96" width="1.00" height="9" fill="#20f4ff"/>
<rect x="188.00" y="96" width="1.8" height="9" fill="#8030f0"/>
<rect x="195.50" y="96" width="1" height="9" fill="#e02080"/>
<rect x="197.00" y="96" width="3.00" height="9" fill="#ffff20"/>
<rect x="199.30" y="96" width="0.8" height="9" fill="#a07090"/>
<rect x="200.00" y="96" width="4.50" height="9" fill="#ffffff"/>
<rect x="203.80" y="96" width="0.8" height="9" fill="#a07090"/>
<rect x="204.50" y="96" width="3.00" height="9" fill="#ffff20"/>
<rect x="206.80" y="96" width="0.8" height="9" fill="#a07090"/>
<rect x="207.50" y="96" width="3.50" height="9" fill="#20f4ff"/>
<rect x="210.50" y="96" width="1.8" height="9" fill="#8030f0"/>
<rect x="218.90" y="96" width="1" height="9" fill="#e02080"/>
<rect x="220.40" y="96" width="4.50" height="9" fill="#ffff20"/>
<rect x="224.20" y="96" width="0.8" height="9" fill="#a07090"/>
<rect x="224.90" y="96" width="4.50" height="9" fill="#ffff20"/>
<rect x="228.70" y="96" width="0.8" height="9" fill="#a07090"/>
<rect x="229.40" y="96" width="4.00" height="9" fill="#20f4ff"/>
<rect x="232.70" y="96" width="0.8" height="9" fill="#1090c0"/>
<rect x="233.40" y="96" width="1.60" height="9" fill="#20f4ff"/>
<rect x="234.50" y="96" width="1.8" height="9" fill="#a020c0"/>
<rect x="242.50" y="96" width="1" height="9" fill="#e02080"/>
<rect x="242.90" y="96" width="1.8" height="9" fill="#8030f0"/>
<rect x="248.20" y="96" width="1" height="9" fill="#e02080"/>
<rect x="249.70" y="96" width="3.50" height="9" fill="#ffff20"/>
<rect x="252.50" y="96" width="0.8" height="9" fill="#a07090"/>
<rect x="253.20" y="96" width="3.50" height="9" fill="#ffffff"/>
<rect x="256.00" y="96" width="0.8" height="9" fill="#a07090"/>
<rect x="256.70" y="96" width="3.00" height="9" fill="#ffff20"/>
<rect x="259.00" y="96" width="0.8" height="9" fill="#a07090"/>
<rect x="259.70" y="96" width="4.00" height="9" fill="#ffffff"/>
<rect x="263.00" y="96" width="0.8" height="9" fill="#a07090"/>
<rect x="263.70" y="96" width="3.50" height="9" fill="#20f4ff"/>
<rect x="266.50" y="96" width="0.8" height="9" fill="#1090c0"/>
<rect x="267.20" y="96" width="4.50" height="9" fill="#20f4ff"/>
<rect x="271.00" y="96" width="0.8" height="9" fill="#1090c0"/>
<rect x="271.70" y="96" width="3.30" height="9" fill="#20f4ff"/>
<rect x="274.50" y="96" width="1.8" height="9" fill="#8030f0"/>
<rect x="282.10" y="96" width="1" height="9" fill="#e02080"/>
<rect x="283.60" y="96" width="4.00" height="9" fill="#90ff40"/>
<rect x="286.90" y="96" width="0.8" height="9" fill="#a07090"/>
<rect x="287.60" y="96" width="3.50" height="9" fill="#ffff20"/>
<rect x="290.40" y="96" width="0.8" height="9" fill="#a07090"/>
<rect x="291.10" y="96" width="4.00" height="9" fill="#ffff20"/>
<rect x="294.40" y="96" width="0.8" height="9" fill="#a07090"/>
<rect x="295.10" y="96" width="3.50" height="9" fill="#ffffff"/>
<rect x="297.90" y="96" width="0.8" height="9" fill="#a07090"/>
<rect x="298.60" y="96" width="3.50" height="9" fill="#20f4ff"/>
<rect x="301.40" y="96" width="0.8" height="9" fill="#1090c0"/>
<rect x="302.10" y="96" width="3.80" height="9" fill="#20f4ff"/>
<rect x="305.40" y="96" width="1.8" height="9" fill="#a020c0"/>
<rect x="313.30" y="96" width="1" height="9" fill="#e02080"/>
<rect x="314.80" y="96" width="3.50" height="9" fill="#ffff20"/>
<rect x="317.60" y="96" width="0.8" height="9" fill="#a07090"/>
<rect x="318.30" y="96" width="3.50" height="9" fill="#ffff20"/>
<rect x="321.10" y="96" width="0.8" height="9" fill="#a07090"/>
<rect x="321.80" y="96" width="4.00" height="9" fill="#ffff20"/>
<rect x="325.10" y="96" width="0.8" height="9" fill="#a07090"/>
<rect x="325.80" y="96" width="3.50" height="9" fill="#ffff20"/>
<rect x="328.60" y="96" width="0.8" height="9" fill="#a07090"/>
<rect x="329.30" y="96" width="3.50" height="9" fill="#ffff20"/>
<rect x="332.10" y="96" width="0.8" height="9" fill="#a07090"/>
<rect x="332.80" y="96" width="3.00" height="9" fill="#20f4ff"/>
<rect x="335.10" y="96" width="0.8" height="9" fill="#1090c0"/>
<rect x="335.80" y="96" width="3.50" height="9" fill="#20f4ff"/>
<rect x="338.60" y="96" width="0.8" height="9" fill="#1090c0"/>
<rect x="339.30" y="96" width="3.00" height="9" fill="#20f4ff"/>
<rect x="341.60" y="96" width="0.8" height="9" fill="#1090c0"/>
<rect x="342.30" y="96" width="3.50" height="9" fill="#20f4ff"/>
<rect x="345.10" y="96" width="0.8" height="9" fill="#1090c0"/>
<rect x="345.80" y="96" width="4.50" height="9" fill="#20f4ff"/>
<rect x="349.60" y="96" width="0.8" height="9" fill="#1090c0"/>
<rect x="350.30" y="96" width="3.50" height="9" fill="#20f4ff"/>
<rect x="353.10" y="96" width="0.8" height="9" fill="#1090c0"/>
<rect x="353.80" y="96" width="3.50" height="9" fill="#20f4ff"/>
<rect x="356.60" y="96" width="0.8" height="9" fill="#1090c0"/>
<rect x="357.30" y="96" width="4.00" height="9" fill="#20f4ff"/>
<rect x="360.60" y="96" width="0.8" height="9" fill="#1090c0"/>
<rect x="361.30" y="96" width="2.50" height="9" fill="#20f4ff"/>
<rect x="363.30" y="96" width="1.8" height="9" fill="#a020c0"/>
<rect x="371.30" y="96" width="1" height="9" fill="#e02080"/>
<rect x="372.80" y="96" width="3.00" height="9" fill="#ffff20"/>
<rect x="375.10" y="96" width="0.8" height="9" fill="#a07090"/>
<rect x="375.80" y="96" width="4.00" height="9" fill="#ffff20"/>
<rect x="379.10" y="96" width="0.8" height="9" fill="#a07090"/>
<rect x="379.80" y="96" width="4.50" height="9" fill="#ffff20"/>
<rect x="383.60" y="96" width="0.8" height="9" fill="#a07090"/>
<rect x="384.30" y="96" width="3.00" height="9" fill="#ffff20"/>
<rect x="386.60" y="96" width="0.8" height="9" fill="#a07090"/>
<rect x="387.30" y="96" width="4.50" height="9" fill="#20f4ff"/>
<rect x="391.10" y="96" width="0.8" height="9" fill="#1090c0"/>
<rect x="391.80" y="96" width="4.50" height="9" fill="#20f4ff"/>
<rect x="395.60" y="96" width="0.8" height="9" fill="#1090c0"/>
<rect x="396.30" y="96" width="2.30" height="9" fill="#20f4ff"/>
<rect x="398.10" y="96" width="1.8" height="9" fill="#a020c0"/>
<rect x="406.20" y="96" width="1" height="9" fill="#e02080"/>
<rect x="407.70" y="96" width="3.50" height="9" fill="#ffff20"/>
<rect x="410.50" y="96" width="0.8" height="9" fill="#a07090"/>
<rect x="411.20" y="96" width="4.50" height="9" fill="#ffff20"/>
<rect x="415.00" y="96" width="0.8" height="9" fill="#a07090"/>
<rect x="415.70" y="96" width="3.50" height="9" fill="#ffff20"/>
<rect x="418.50" y="96" width="0.8" height="9" fill="#a07090"/>
<rect x="419.20" y="96" width="4.50" height="9" fill="#ffff20"/>
<rect x="423.00" y="96" width="0.8" height="9" fill="#a07090"/>
<rect x="423.70" y="96" width="3.50" height="9" fill="#ffff20"/>
<rect x="426.50" y="96" width="0.8" height="9" fill="#a07090"/>
<rect x="427.20" y="96" width="3.00" height="9" fill="#20f4ff"/>
<rect x="429.50" y="96" width="0.8" height="9" fill="#1090c0"/>
<rect x="430.20" y="96" width="4.50" height="9" fill="#20f4ff"/>
<rect x="434.00" y="96" width="0.8" height="9" fill="#1090c0"/>
<rect x="434.70" y="96" width="4.50" height="9" fill="#20f4ff"/>
<rect x="438.50" y="96" width="0.8" height="9" fill="#1090c0"/>
<rect x="439.20" y="96" width="4.00" height="9" fill="#20f4ff"/>
<rect x="442.50" y="96" width="0.8" height="9" fill="#1090c0"/>
<rect x="443.20" y="96" width="4.00" height="9" fill="#20f4ff"/>
<rect x="446.50" y="96" width="0.8" height="9" fill="#1090c0"/>
<rect x="447.20" y="96" width="3.00" height="9" fill="#20f4ff"/>
<rect x="449.50" y="96" width="0.8" height="9" fill="#1090c0"/>
<rect x="450.20" y="96" width="4.50" height="9" fill="#20f4ff"/>
<rect x="454.00" y="96" width="0.8" height="9" fill="#1090c0"/>
<rect x="454.70" y="96" width="3.50" height="9" fill="#20f4ff"/>
<rect x="457.50" y="96" width="0.8" height="9" fill="#1090c0"/>
<rect x="458.20" y="96" width="2.50" height="9" fill="#20f4ff"/>
<rect x="460.20" y="96" width="1.8" height="9" fill="#8030f0"/>
<rect x="468.30" y="96" width="1" height="9" fill="#e02080"/>
<rect x="469.80" y="96" width="4.50" height="9" fill="#ffff20"/>
<rect x="473.60" y="96" width="0.8" height="9" fill="#a07090"/>
<rect x="474.30" y="96" width="4.50" height="9" fill="#ffff20"/>
<rect x="478.10" y="96" width="0.8" height="9" fill="#a07090"/>
<rect x="478.80" y="96" width="4.50" height="9" fill="#ffffff"/>
<rect x="482.60" y="96" width="0.8" height="9" fill="#a07090"/>
<rect x="483.30" y="96" width="3.50" height="9" fill="#ffff20"/>
<rect x="486.10" y="96" width="0.8" height="9" fill="#a07090"/>
<rect x="486.80" y="96" width="3.00" height="9" fill="#20f4ff"/>
<rect x="489.10" y="96" width="0.8" height="9" fill="#1090c0"/>
<rect x="489.80" y="96" width="4.50" height="9" fill="#20f4ff"/>
<rect x="493.60" y="96" width="0.8" height="9" fill="#1090c0"/>
<rect x="494.30" y="96" width="4.50" height="9" fill="#20f4ff"/>
<rect x="498.10" y="96" width="0.8" height="9" fill="#1090c0"/>
<rect x="498.80" y="96" width="3.00" height="9" fill="#20f4ff"/>
<rect x="501.10" y="96" width="0.8" height="9" fill="#1090c0"/>
<rect x="501.80" y="96" width="3.00" height="9" fill="#20f4ff"/>
<rect x="504.10" y="96" width="0.8" height="9" fill="#1090c0"/>
<rect x="504.80" y="96" width="4.00" height="9" fill="#20f4ff"/>
<rect x="508.10" y="96" width="0.8" height="9" fill="#1090c0"/>
<rect x="508.80" y="96" width="3.50" height="9" fill="#20f4ff"/>
<rect x="511.60" y="96" width="0.8" height="9" fill="#1090c0"/>
<rect x="512.30" y="96" width="3.50" height="9" fill="#20f4ff"/>
<rect x="515.10" y="96" width="0.8" height="9" fill="#1090c0"/>
<rect x="515.80" y="96" width="3.50" height="9" fill="#20f4ff"/>
<rect x="518.60" y="96" width="0.8" height="9" fill="#1090c0"/>
<rect x="519.30" y="96" width="1.70" height="9" fill="#20f4ff"/>
<rect x="520.50" y="96" width="1.8" height="9" fill="#8030f0"/>
<rect x="528.50" y="96" width="1" height="9" fill="#e02080"/>
<rect x="530.00" y="96" width="4.50" height="9" fill="#ffffff"/>
<rect x="533.80" y="96" width="0.8" height="9" fill="#a07090"/>
<rect x="534.50" y="96" width="3.50" height="9" fill="#ffff20"/>
<rect x="537.30" y="96" width="0.8" height="9" fill="#a07090"/>
<rect x="538.00" y="96" width="3.00" height="9" fill="#ffff20"/>
<rect x="540.30" y="96" width="0.8" height="9" fill="#a07090"/>
<rect x="541.00" y="96" width="2.00" height="9" fill="#20f4ff"/>
<rect x="542.50" y="96" width="1.8" height="9" fill="#a020c0"/>
<rect x="551.20" y="96" width="1" height="9" fill="#e02080"/>
<rect x="552.70" y="96" width="4.50" height="9" fill="#ffff20"/>
<rect x="556.50" y="96" width="0.8" height="9" fill="#a07090"/>
<rect x="557.20" y="96" width="3.50" height="9" fill="#ffff20"/>
<rect x="560.00" y="96" width="0.8" height="9" fill="#a07090"/>
<rect x="560.70" y="96" width="3.00" height="9" fill="#90ff40"/>
<rect x="563.00" y="96" width="0.8" height="9" fill="#a07090"/>
<rect x="563.70" y="96" width="4.00" height="9" fill="#20f4ff"/>
<rect x="567.70" y="96" width="0.30" height="9" fill="#20f4ff"/>
<rect x="567.50" y="96" width="1.8" height="9" fill="#a020c0"/>
<rect x="576.50" y="96" width="1" height="9" fill="#e02080"/>
<rect x="578.00" y="96" width="4.50" height="9" fill="#ffff20"/>
<rect x="581.80" y="96" width="0.8" height="9" fill="#a07090"/>
<rect x="582.50" y="96" width="3.00" height="9" fill="#20f4ff"/>
<rect x="584.80" y="96" width="0.8" height="9" fill="#1090c0"/>
<rect x="585.50" y="96" width="1.50" height="9" fill="#20f4ff"/>
<rect x="586.50" y="96" width="1.8" height="9" fill="#a020c0"/>
<rect x="594.00" y="96" width="1" height="9" fill="#e02080"/>
<rect x="595.50" y="96" width="4.00" height="9" fill="#90ff40"/>
<rect x="598.80" y="96" width="0.8" height="9" fill="#a07090"/>
<rect x="599.50" y="96" width="4.00" height="9" fill="#ffff20"/>
<rect x="602.80" y="96" width="0.8" height="9" fill="#a07090"/>
<rect x="603.50" y="96" width="2.20" height="9" fill="#20f4ff"/>
<rect x="605.20" y="96" width="1.8" height="9" fill="#a020c0"/>
<rect x="613.30" y="96" width="1" height="9" fill="#e02080"/>
<rect x="614.80" y="96" width="3.50" height="9" fill="#ffff20"/>
<rect x="617.60" y="96" width="0.8" height="9" fill="#a07090"/>
<rect x="618.30" y="96" width="4.50" height="9" fill="#ffff20"/>
<rect x="622.10" y="96" width="0.8" height="9" fill="#a07090"/>
<rect x="622.80" y="96" width="3.10" height="9" fill="#20f4ff"/>
<rect x="625.40" y="96" width="1.8" height="9" fill="#8030f0"/>
<rect x="633.30" y="96" width="1" height="9" fill="#e02080"/>
<rect x="634.80" y="96" width="3.00" height="9" fill="#ffff20"/>
<rect x="637.10" y="96" width="0.8" height="9" fill="#a07090"/>
<rect x="637.80" y="96" width="4.50" height="9" fill="#ffffff"/>
<rect x="641.60" y="96" width="0.8" height="9" fill="#a07090"/>
<rect x="642.30" y="96" width="0.70" height="9" fill="#20f4ff"/>
<rect x="642.50" y="96" width="1.8" height="9" fill="#8030f0"/>
<rect x="651.30" y="96" width="1" height="9" fill="#e02080"/>
<rect x="652.80" y="96" width="4.50" height="9" fill="#ffff20"/>
<rect x="656.60" y="96" width="0.8" height="9" fill="#a07090"/>
<rect x="657.30" y="96" width="4.00" height="9" fill="#ffffff"/>
<rect x="660.60" y="96" width="0.8" height="9" fill="#a07090"/>
<rect x="661.30" y="96" width="3.50" height="9" fill="#ffff20"/>
<rect x="664.10" y="96" width="0.8" height="9" fill="#a07090"/>
<rect x="664.80" y="96" width="4.00" height="9" fill="#ffff20"/>
<rect x="668.10" y="96" width="0.8" height="9" fill="#a07090"/>
<rect x="668.80" y="96" width="4.00" height="9" fill="#20f4ff"/>
<rect x="672.10" y="96" width="0.8" height="9" fill="#1090c0"/>
<rect x="672.80" y="96" width="4.50" height="9" fill="#20f4ff"/>
<rect x="676.60" y="96" width="0.8" height="9" fill="#1090c0"/>
<rect x="677.30" y="96" width="4.00" height="9" fill="#20f4ff"/>
<rect x="680.60" y="96" width="0.8" height="9" fill="#1090c0"/>
<rect x="681.30" y="96" width="4.50" height="9" fill="#20f4ff"/>
<rect x="685.10" y="96" width="0.8" height="9" fill="#1090c0"/>
<rect x="685.80" y="96" width="3.50" height="9" fill="#20f4ff"/>
<rect x="688.60" y="96" width="0.8" height="9" fill="#1090c0"/>
<rect x="689.30" y="96" width="4.50" height="9" fill="#20f4ff"/>
<rect x="693.10" y="96" width="0.8" height="9" fill="#1090c0"/>
<rect x="693.80" y="96" width="3.00" height="9" fill="#20f4ff"/>
<rect x="696.10" y="96" width="0.8" height="9" fill="#1090c0"/>
<rect x="696.80" y="96" width="2.20" height="9" fill="#20f4ff"/>
<rect x="698.50" y="96" width="1.8" height="9" fill="#a020c0"/>
<rect x="706.50" y="96" width="1" height="9" fill="#e02080"/>
<rect x="708.00" y="96" width="4.00" height="9" fill="#ffff20"/>
<rect x="711.30" y="96" width="0.8" height="9" fill="#a07090"/>
<rect x="712.00" y="96" width="4.50" height="9" fill="#ffff20"/>
<rect x="715.80" y="96" width="0.8" height="9" fill="#a07090"/>
<rect x="716.50" y="96" width="4.50" height="9" fill="#90ff40"/>
<rect x="720.30" y="96" width="0.8" height="9" fill="#a07090"/>
<rect x="721.00" y="96" width="3.00" height="9" fill="#20f4ff"/>
<rect x="723.30" y="96" width="0.8" height="9" fill="#1090c0"/>
<rect x="724.00" y="96" width="2.00" height="9" fill="#20f4ff"/>
<rect x="725.50" y="96" width="1.8" height="9" fill="#8030f0"/>
<rect x="734.20" y="96" width="1" height="9" fill="#e02080"/>
<rect x="735.70" y="96" width="4.50" height="9" fill="#ffff20"/>
<rect x="739.50" y="96" width="0.8" height="9" fill="#a07090"/>
<rect x="740.20" y="96" width="3.00" height="9" fill="#90ff40"/>
<rect x="742.50" y="96" width="0.8" height="9" fill="#a07090"/>
<rect x="743.20" y="96" width="4.00" height="9" fill="#ffff20"/>
<rect x="746.50" y="96" width="0.8" height="9" fill="#a07090"/>
<rect x="747.20" y="96" width="4.00" height="9" fill="#90ff40"/>
<rect x="750.50" y="96" width="0.8" height="9" fill="#a07090"/>
<rect x="751.20" y="96" width="3.00" height="9" fill="#20f4ff"/>
<rect x="754.20" y="96" width="0.30" height="9" fill="#20f4ff"/>
<rect x="754.00" y="96" width="1.8" height="9" fill="#8030f0"/>
<rect x="762.20" y="96" width="1" height="9" fill="#e02080"/>
<rect x="763.70" y="96" width="4.00" height="9" fill="#ffff20"/>
<rect x="767.00" y="96" width="0.8" height="9" fill="#a07090"/>
<rect x="767.70" y="96" width="3.00" height="9" fill="#90ff40"/>
<rect x="770.00" y="96" width="0.8" height="9" fill="#a07090"/>
<rect x="770.70" y="96" width="3.50" height="9" fill="#ffff20"/>
<rect x="773.50" y="96" width="0.8" height="9" fill="#a07090"/>
<rect x="774.20" y="96" width="3.50" height="9" fill="#20f4ff"/>
<rect x="777.00" y="96" width="0.8" height="9" fill="#1090c0"/>
<rect x="777.70" y="96" width="0.70" height="9" fill="#20f4ff"/>
<rect x="777.90" y="96" width="1.8" height="9" fill="#a020c0"/>
<rect x="786.00" y="96" width="1" height="9" fill="#e02080"/>
<rect x="786.50" y="96" width="1.8" height="9" fill="#8030f0"/>
<rect x="792.20" y="96" width="1" height="9" fill="#e02080"/>
<rect x="793.70" y="96" width="3.50" height="9" fill="#90ff40"/>
<rect x="796.50" y="96" width="0.8" height="9" fill="#a07090"/>
<rect x="797.20" y="96" width="3.00" height="9" fill="#ffffff"/>
<rect x="799.50" y="96" width="0.8" height="9" fill="#a07090"/>
<rect x="800.20" y="96" width="1.80" height="9" fill="#20f4ff"/>
<rect x="801.50" y="96" width="1.8" height="9" fill="#8030f0"/>
<rect x="809.50" y="96" width="1" height="9" fill="#e02080"/>
<rect x="811.00" y="96" width="3.50" height="9" fill="#ffffff"/>
<rect x="813.80" y="96" width="0.8" height="9" fill="#a07090"/>
<rect x="814.50" y="96" width="3.00" height="9" fill="#ffff20"/>
<rect x="816.80" y="96" width="0.8" height="9" fill="#a07090"/>
<rect x="817.50" y="96" width="3.00" height="9" fill="#ffffff"/>
<rect x="819.80" y="96" width="0.8" height="9" fill="#a07090"/>
<rect x="820.50" y="96" width="3.00" height="9" fill="#ffff20"/>
<rect x="822.80" y="96" width="0.8" height="9" fill="#a07090"/>
<rect x="823.50" y="96" width="4.50" height="9" fill="#ffff20"/>
<rect x="827.30" y="96" width="0.8" height="9" fill="#a07090"/>
<rect x="828.00" y="96" width="3.50" height="9" fill="#ffff20"/>
<rect x="830.80" y="96" width="0.8" height="9" fill="#a07090"/>
<rect x="831.50" y="96" width="4.50" height="9" fill="#ffffff"/>
<rect x="835.30" y="96" width="0.8" height="9" fill="#a07090"/>
<rect x="836.00" y="96" width="3.00" height="9" fill="#20f4ff"/>
<rect x="838.30" y="96" width="0.8" height="9" fill="#1090c0"/>
<rect x="839.00" y="96" width="4.50" height="9" fill="#20f4ff"/>
<rect x="842.80" y="96" width="0.8" height="9" fill="#1090c0"/>
<rect x="843.50" y="96" width="4.50" height="9" fill="#20f4ff"/>
<rect x="847.30" y="96" width="0.8" height="9" fill="#1090c0"/>
<rect x="848.00" y="96" width="3.50" height="9" fill="#20f4ff"/>
<rect x="850.80" y="96" width="0.8" height="9" fill="#1090c0"/>
<rect x="851.50" y="96" width="4.50" height="9" fill="#20f4ff"/>
<rect x="855.30" y="96" width="0.8" height="9" fill="#1090c0"/>
<rect x="856.00" y="96" width="3.50" height="9" fill="#20f4ff"/>
<rect x="858.80" y="96" width="0.8" height="9" fill="#1090c0"/>
<rect x="859.50" y="96" width="4.50" height="9" fill="#20f4ff"/>
<rect x="863.30" y="96" width="0.8" height="9" fill="#1090c0"/>
<rect x="864.00" y="96" width="3.50" height="9" fill="#20f4ff"/>
<rect x="866.80" y="96" width="0.8" height="9" fill="#1090c0"/>
<rect x="867.50" y="96" width="3.00" height="9" fill="#20f4ff"/>
<rect x="869.80" y="96" width="0.8" height="9" fill="#1090c0"/>
<rect x="870.50" y="96" width="3.50" height="9" fill="#20f4ff"/>
<rect x="873.30" y="96" width="0.8" height="9" fill="#1090c0"/>
<rect x="874.00" y="96" width="4.00" height="9" fill="#20f4ff"/>
<rect x="878.00" y="96" width="0.40" height="9" fill="#20f4ff"/>
<rect x="877.90" y="96" width="1.8" height="9" fill="#a020c0"/>
<rect x="885.70" y="96" width="1" height="9" fill="#e02080"/>
<rect x="887.20" y="96" width="4.50" height="9" fill="#ffff20"/>
<rect x="891.00" y="96" width="0.8" height="9" fill="#a07090"/>
<rect x="891.70" y="96" width="4.50" height="9" fill="#ffff20"/>
<rect x="895.50" y="96" width="0.8" height="9" fill="#a07090"/>
<rect x="896.20" y="96" width="3.00" height="9" fill="#ffff20"/>
<rect x="898.50" y="96" width="0.8" height="9" fill="#a07090"/>
<rect x="899.20" y="96" width="4.00" height="9" fill="#ffff20"/>
<rect x="902.50" y="96" width="0.8" height="9" fill="#a07090"/>
<rect x="903.20" y="96" width="3.00" height="9" fill="#90ff40"/>
<rect x="905.50" y="96" width="0.8" height="9" fill="#a07090"/>
<rect x="906.20" y="96" width="3.00" height="9" fill="#ffff20"/>
<rect x="908.50" y="96" width="0.8" height="9" fill="#a07090"/>
<rect x="909.20" y="96" width="3.00" height="9" fill="#ffffff"/>
<rect x="911.50" y="96" width="0.8" height="9" fill="#a07090"/>
<rect x="912.20" y="96" width="4.50" height="9" fill="#20f4ff"/>
<rect x="916.00" y="96" width="0.8" height="9" fill="#1090c0"/>
<rect x="916.70" y="96" width="4.50" height="9" fill="#20f4ff"/>
<rect x="920.50" y="96" width="0.8" height="9" fill="#1090c0"/>
<rect x="921.20" y="96" width="3.50" height="9" fill="#20f4ff"/>
<rect x="924.00" y="96" width="0.8" height="9" fill="#1090c0"/>
<rect x="924.70" y="96" width="3.00" height="9" fill="#20f4ff"/>
<rect x="927.00" y="96" width="0.8" height="9" fill="#1090c0"/>
<rect x="927.70" y="96" width="3.50" height="9" fill="#20f4ff"/>
<rect x="930.50" y="96" width="0.8" height="9" fill="#1090c0"/>
<rect x="931.20" y="96" width="4.50" height="9" fill="#20f4ff"/>
<rect x="935.00" y="96" width="0.8" height="9" fill="#1090c0"/>
<rect x="935.70" y="96" width="3.50" height="9" fill="#20f4ff"/>
<rect x="938.50" y="96" width="0.8" height="9" fill="#1090c0"/>
<rect x="939.20" y="96" width="4.00" height="9" fill="#20f4ff"/>
<rect x="942.50" y="96" width="0.8" height="9" fill="#1090c0"/>
<rect x="943.20" y="96" width="3.00" height="9" fill="#20f4ff"/>
<rect x="945.50" y="96" width="0.8" height="9" fill="#1090c0"/>
<rect x="946.20" y="96" width="4.00" height="9" fill="#20f4ff"/>
<rect x="949.50" y="96" width="0.8" height="9" fill="#1090c0"/>
<rect x="950.20" y="96" width="2.00" height="9" fill="#20f4ff"/>
<rect x="951.70" y="96" width="1.8" height="9" fill="#a020c0"/>
<rect x="959.50" y="96" width="1" height="9" fill="#e02080"/>
<rect x="961.00" y="96" width="3.50" height="9" fill="#ffff20"/>
<rect x="963.80" y="96" width="0.8" height="9" fill="#a07090"/>
<rect x="964.50" y="96" width="4.50" height="9" fill="#ffff20"/>
<rect x="968.30" y="96" width="0.8" height="9" fill="#a07090"/>
<rect x="969.00" y="96" width="4.50" height="9" fill="#ffff20"/>
<rect x="972.80" y="96" width="0.8" height="9" fill="#a07090"/>
<rect x="973.50" y="96" width="3.00" height="9" fill="#ffff20"/>
<rect x="975.80" y="96" width="0.8" height="9" fill="#a07090"/>
<rect x="976.50" y="96" width="4.00" height="9" fill="#ffff20"/>
<rect x="979.80" y="96" width="0.8" height="9" fill="#a07090"/>
<rect x="980.50" y="96" width="4.50" height="9" fill="#ffff20"/>
<rect x="984.30" y="96" width="0.8" height="9" fill="#a07090"/>
<rect x="985.00" y="96" width="4.00" height="9" fill="#ffffff"/>
<rect x="988.30" y="96" width="0.8" height="9" fill="#a07090"/>
<rect x="989.00" y="96" width="4.00" height="9" fill="#20f4ff"/>
<rect x="992.30" y="96" width="0.8" height="9" fill="#1090c0"/>
<rect x="993.00" y="96" width="4.00" height="9" fill="#20f4ff"/>
<rect x="996.30" y="96" width="0.8" height="9" fill="#1090c0"/>
<rect x="997.00" y="96" width="3.50" height="9" fill="#20f4ff"/>
<rect x="1000.50" y="96" width="0.10" height="9" fill="#20f4ff"/>
<rect x="1000.10" y="96" width="1.8" height="9" fill="#8030f0"/>
<rect x="1007.90" y="96" width="1" height="9" fill="#e02080"/>
<rect x="1009.40" y="96" width="4.00" height="9" fill="#ffff20"/>
<rect x="1012.70" y="96" width="0.8" height="9" fill="#a07090"/>
<rect x="1013.40" y="96" width="3.50" height="9" fill="#90ff40"/>
<rect x="1016.20" y="96" width="0.8" height="9" fill="#a07090"/>
<rect x="1016.90" y="96" width="3.00" height="9" fill="#ffff20"/>
<rect x="1019.20" y="96" width="0.8" height="9" fill="#a07090"/>
<rect x="1019.90" y="96" width="4.50" height="9" fill="#ffffff"/>
<rect x="1023.70" y="96" width="0.8" height="9" fill="#a07090"/>
<rect x="1024.40" y="96" width="4.50" height="9" fill="#ffffff"/>
<rect x="1028.20" y="96" width="0.8" height="9" fill="#a07090"/>
<rect x="1028.90" y="96" width="3.00" height="9" fill="#20f4ff"/>
<rect x="1031.20" y="96" width="0.8" height="9" fill="#1090c0"/>
<rect x="1031.90" y="96" width="4.50" height="9" fill="#20f4ff"/>
<rect x="1035.70" y="96" width="0.8" height="9" fill="#1090c0"/>
<rect x="1036.40" y="96" width="4.00" height="9" fill="#20f4ff"/>
<rect x="1039.70" y="96" width="0.8" height="9" fill="#1090c0"/>
<rect x="1040.40" y="96" width="3.00" height="9" fill="#20f4ff"/>
<rect x="1042.70" y="96" width="0.8" height="9" fill="#1090c0"/>
<rect x="1043.40" y="96" width="3.00" height="9" fill="#20f4ff"/>
<rect x="1045.70" y="96" width="0.8" height="9" fill="#1090c0"/>
<rect x="1046.40" y="96" width="3.00" height="9" fill="#20f4ff"/>
<rect x="1048.70" y="96" width="0.8" height="9" fill="#1090c0"/>
<rect x="1049.40" y="96" width="3.50" height="9" fill="#20f4ff"/>
<rect x="1052.20" y="96" width="0.8" height="9" fill="#1090c0"/>
<rect x="1052.90" y="96" width="4.50" height="9" fill="#20f4ff"/>
<rect x="1056.70" y="96" width="0.8" height="9" fill="#1090c0"/>
<rect x="1057.40" y="96" width="3.00" height="9" fill="#20f4ff"/>
<rect x="1059.70" y="96" width="0.8" height="9" fill="#1090c0"/>
<rect x="1060.40" y="96" width="1.30" height="9" fill="#20f4ff"/>
<rect x="1061.20" y="96" width="1.8" height="9" fill="#8030f0"/>
<rect x="1069.00" y="96" width="1" height="9" fill="#e02080"/>
<rect x="1070.50" y="96" width="3.00" height="9" fill="#ffff20"/>
<rect x="1072.80" y="96" width="0.8" height="9" fill="#a07090"/>
<rect x="1073.50" y="96" width="3.00" height="9" fill="#ffff20"/>
<rect x="1075.80" y="96" width="0.8" height="9" fill="#a07090"/>
<rect x="1076.50" y="96" width="3.50" height="9" fill="#ffff20"/>
<rect x="1079.30" y="96" width="0.8" height="9" fill="#a07090"/>
<rect x="1080.00" y="96" width="3.50" height="9" fill="#ffff20"/>
<rect x="1082.80" y="96" width="0.8" height="9" fill="#a07090"/>
<rect x="1083.50" y="96" width="4.50" height="9" fill="#ffff20"/>
<rect x="1087.30" y="96" width="0.8" height="9" fill="#a07090"/>
<rect x="1088.00" y="96" width="3.00" height="9" fill="#ffff20"/>
<rect x="1090.30" y="96" width="0.8" height="9" fill="#a07090"/>
<rect x="1091.00" y="96" width="3.50" height="9" fill="#20f4ff"/>
<rect x="1093.80" y="96" width="0.8" height="9" fill="#1090c0"/>
<rect x="1094.50" y="96" width="4.00" height="9" fill="#20f4ff"/>
<rect x="1097.80" y="96" width="0.8" height="9" fill="#1090c0"/>
<rect x="1098.50" y="96" width="4.00" height="9" fill="#20f4ff"/>
<rect x="1101.80" y="96" width="0.8" height="9" fill="#1090c0"/>
<rect x="1102.50" y="96" width="4.00" height="9" fill="#20f4ff"/>
<rect x="1105.80" y="96" width="0.8" height="9" fill="#1090c0"/>
<rect x="1106.50" y="96" width="3.50" height="9" fill="#20f4ff"/>
<rect x="1109.30" y="96" width="0.8" height="9" fill="#1090c0"/>
<rect x="1110.00" y="96" width="4.50" height="9" fill="#20f4ff"/>
<rect x="1113.80" y="96" width="0.8" height="9" fill="#1090c0"/>
<rect x="1114.50" y="96" width="3.00" height="9" fill="#20f4ff"/>
<rect x="1116.80" y="96" width="0.8" height="9" fill="#1090c0"/>
<rect x="1117.50" y="96" width="4.00" height="9" fill="#20f4ff"/>
<rect x="1120.80" y="96" width="0.8" height="9" fill="#1090c0"/>
<rect x="1121.50" y="96" width="1.30" height="9" fill="#20f4ff"/>
<rect x="1122.30" y="96" width="1.8" height="9" fill="#a020c0"/>
<rect x="1130.90" y="96" width="1" height="9" fill="#e02080"/>
<rect x="1132.40" y="96" width="3.00" height="9" fill="#ffff20"/>
<rect x="1134.70" y="96" width="0.8" height="9" fill="#a07090"/>
<rect x="1135.40" y="96" width="3.00" height="9" fill="#ffff20"/>
<rect x="1137.70" y="96" width="0.8" height="9" fill="#a07090"/>
<rect x="1138.40" y="96" width="4.50" height="9" fill="#90ff40"/>
<rect x="1142.20" y="96" width="0.8" height="9" fill="#a07090"/>
<rect x="1142.90" y="96" width="4.50" height="9" fill="#ffff20"/>
<rect x="1146.70" y="96" width="0.8" height="9" fill="#a07090"/>
<rect x="1147.40" y="96" width="3.00" height="9" fill="#ffff20"/>
<rect x="1149.70" y="96" width="0.8" height="9" fill="#a07090"/>
<rect x="1150.40" y="96" width="4.50" height="9" fill="#20f4ff"/>
<rect x="1154.20" y="96" width="0.8" height="9" fill="#1090c0"/>
<rect x="1154.90" y="96" width="3.50" height="9" fill="#20f4ff"/>
<rect x="1157.70" y="96" width="0.8" height="9" fill="#1090c0"/>
<rect x="1158.40" y="96" width="4.50" height="9" fill="#20f4ff"/>
<rect x="1162.20" y="96" width="0.8" height="9" fill="#1090c0"/>
<rect x="1162.90" y="96" width="4.50" height="9" fill="#20f4ff"/>
<rect x="1166.70" y="96" width="0.8" height="9" fill="#1090c0"/>
<rect x="1167.40" y="96" width="3.00" height="9" fill="#20f4ff"/>
<rect x="1169.70" y="96" width="0.8" height="9" fill="#1090c0"/>
<rect x="1170.40" y="96" width="3.00" height="9" fill="#20f4ff"/>
<rect x="1172.70" y="96" width="0.8" height="9" fill="#1090c0"/>
<rect x="1173.40" y="96" width="4.50" height="9" fill="#20f4ff"/>
<rect x="1177.20" y="96" width="0.8" height="9" fill="#1090c0"/>
<rect x="1177.90" y="96" width="2.10" height="9" fill="#20f4ff"/>
<rect x="1179.50" y="96" width="1.8" height="9" fill="#8030f0"/>
</g>
<line x1="120.0" y1="37" x2="120.0" y2="51" stroke="#9a9a9a" stroke-width="1" stroke-dasharray="1 2"/>
<line x1="120.0" y1="148" x2="120.0" y2="152" stroke="#9a9a9a" stroke-width="1" stroke-dasharray="1 2"/>
<line x1="238.1" y1="37" x2="238.1" y2="51" stroke="#9a9a9a" stroke-width="1" stroke-dasharray="1 2"/>
<line x1="238.1" y1="148" x2="238.1" y2="152" stroke="#9a9a9a" stroke-width="1" stroke-dasharray="1 2"/>
<line x1="356.2" y1="37" x2="356.2" y2="51" stroke="#9a9a9a" stroke-width="1" stroke-dasharray="1 2"/>
<line x1="356.2" y1="148" x2="356.2" y2="152" stroke="#9a9a9a" stroke-width="1" stroke-dasharray="1 2"/>
<line x1="474.3" y1="37" x2="474.3" y2="51" stroke="#9a9a9a" stroke-width="1" stroke-dasharray="1 2"/>
<line x1="474.3" y1="148" x2="474.3" y2="152" stroke="#9a9a9a" stroke-width="1" stroke-dasharray="1 2"/>
<line x1="592.4" y1="37" x2="592.4" y2="51" stroke="#9a9a9a" stroke-width="1" stroke-dasharray="1 2"/>
<line x1="592.4" y1="148" x2="592.4" y2="152" stroke="#9a9a9a" stroke-width="1" stroke-dasharray="1 2"/>
<line x1="710.5" y1="37" x2="710.5" y2="51" stroke="#9a9a9a" stroke-width="1" stroke-dasharray="1 2"/>
<line x1="710.5" y1="148" x2="710.5" y2="152" stroke="#9a9a9a" stroke-width="1" stroke-dasharray="1 2"/>
<line x1="828.6" y1="37" x2="828.6" y2="51" stroke="#9a9a9a" stroke-width="1" stroke-dasharray="1 2"/>
<line x1="828.6" y1="148" x2="828.6" y2="152" stroke="#9a9a9a" stroke-width="1" stroke-dasharray="1 2"/>
<line x1="946.7" y1="37" x2="946.7" y2="51" stroke="#9a9a9a" stroke-width="1" stroke-dasharray="1 2"/>
<line x1="946.7" y1="148" x2="946.7" y2="152" stroke="#9a9a9a" stroke-width="1" stroke-dasharray="1 2"/>
<line x1="1064.8" y1="37" x2="1064.8" y2="51" stroke="#9a9a9a" stroke-width="1" stroke-dasharray="1 2"/>
<line x1="1064.8" y1="148" x2="1064.8" y2="152" stroke="#9a9a9a" stroke-width="1" stroke-dasharray="1 2"/>
<line x1="1182.9" y1="37" x2="1182.9" y2="51" stroke="#9a9a9a" stroke-width="1" stroke-dasharray="1 2"/>
<line x1="1182.9" y1="148" x2="1182.9" y2="152" stroke="#9a9a9a" stroke-width="1" stroke-dasharray="1 2"/>
<path d="M12 196.5h1 M35 196.5h1 M59 196.5h1 M83 196.5h1 M106 196.5h1 M130 196.5h1 M154 196.5h1 M177 196.5h1 M201 196.5h1 M224 196.5h1 M248 196.5h1 M272 196.5h1 M295 196.5h1 M319 196.5h1 M342 196.5h1 M366 196.5h1 M390 196.5h1 M413 196.5h1 M437 196.5h1 M460 196.5h1 M484 196.5h1 M508 196.5h1 M531 196.5h1 M555 196.5h1 M579 196.5h1 M602 196.5h1 M626 196.5h1 M649 196.5h1 M673 196.5h1 M697 196.5h1 M720 196.5h1 M744 196.5h1 M767 196.5h1 M791 196.5h1 M815 196.5h1 M838 196.5h1 M862 196.5h1 M885 196.5h1 M909 196.5h1 M933 196.5h1 M956 196.5h1 M980 196.5h1 M1003 196.5h1 M1027 196.5h1 M1051 196.5h1 M1074 196.5h1 M1098 196.5h1 M1122 196.5h1 M1145 196.5h1 M1169 196.5h1 M12 212.5h1 M35 212.5h1 M59 212.5h1 M83 212.5h1 M106 212.5h1 M130 212.5h1 M154 212.5h1 M177 212.5h1 M201 212.5h1 M224 212.5h1 M248 212.5h1 M272 212.5h1 M295 212.5h1 M319 212.5h1 M342 212.5h1 M366 212.5h1 M390 212.5h1 M413 212.5h1 M437 212.5h1 M460 212.5h1 M484 212.5h1 M508 212.5h1 M531 212.5h1 M555 212.5h1 M579 212.5h1 M602 212.5h1 M626 212.5h1 M649 212.5h1 M673 212.5h1 M697 212.5h1 M720 212.5h1 M744 212.5h1 M767 212.5h1 M791 212.5h1 M815 212.5h1 M838 212.5h1 M862 212.5h1 M885 212.5h1 M909 212.5h1 M933 212.5h1 M956 212.5h1 M980 212.5h1 M1003 212.5h1 M1027 212.5h1 M1051 212.5h1 M1074 212.5h1 M1098 212.5h1 M1122 212.5h1 M1145 212.5h1 M1169 212.5h1 M12 228.5h1 M35 228.5h1 M59 228.5h1 M83 228.5h1 M106 228.5h1 M130 228.5h1 M154 228.5h1 M177 228.5h1 M201 228.5h1 M224 228.5h1 M248 228.5h1 M272 228.5h1 M295 228.5h1 M319 228.5h1 M342 228.5h1 M366 228.5h1 M390 228.5h1 M413 228.5h1 M437 228.5h1 M460 228.5h1 M484 228.5h1 M508 228.5h1 M531 228.5h1 M555 228.5h1 M579 228.5h1 M602 228.5h1 M626 228.5h1 M649 228.5h1 M673 228.5h1 M697 228.5h1 M720 228.5h1 M744 228.5h1 M767 228.5h1 M791 228.5h1 M815 228.5h1 M838 228.5h1 M862 228.5h1 M885 228.5h1 M909 228.5h1 M933 228.5h1 M956 228.5h1 M980 228.5h1 M1003 228.5h1 M1027 228.5h1 M1051 228.5h1 M1074 228.5h1 M1098 228.5h1 M1122 228.5h1 M1145 228.5h1 M1169 228.5h1 M12 244.5h1 M35 244.5h1 M59 244.5h1 M83 244.5h1 M106 244.5h1 M130 244.5h1 M154 244.5h1 M177 244.5h1 M201 244.5h1 M224 244.5h1 M248 244.5h1 M272 244.5h1 M295 244.5h1 M319 244.5h1 M342 244.5h1 M366 244.5h1 M390 244.5h1 M413 244.5h1 M437 244.5h1 M460 244.5h1 M484 244.5h1 M508 244.5h1 M531 244.5h1 M555 244.5h1 M579 244.5h1 M602 244.5h1 M626 244.5h1 M649 244.5h1 M673 244.5h1 M697 244.5h1 M720 244.5h1 M744 244.5h1 M767 244.5h1 M791 244.5h1 M815 244.5h1 M838 244.5h1 M862 244.5h1 M885 244.5h1 M909 244.5h1 M933 244.5h1 M956 244.5h1 M980 244.5h1 M1003 244.5h1 M1027 244.5h1 M1051 244.5h1 M1074 244.5h1 M1098 244.5h1 M1122 244.5h1 M1145 244.5h1 M1169 244.5h1 M12 260.5h1 M35 260.5h1 M59 260.5h1 M83 260.5h1 M106 260.5h1 M130 260.5h1 M154 260.5h1 M177 260.5h1 M201 260.5h1 M224 260.5h1 M248 260.5h1 M272 260.5h1 M295 260.5h1 M319 260.5h1 M342 260.5h1 M366 260.5h1 M390 260.5h1 M413 260.5h1 M437 260.5h1 M460 260.5h1 M484 260.5h1 M508 260.5h1 M531 260.5h1 M555 260.5h1 M579 260.5h1 M602 260.5h1 M626 260.5h1 M649 260.5h1 M673 260.5h1 M697 260.5h1 M720 260.5h1 M744 260.5h1 M767 260.5h1 M791 260.5h1 M815 260.5h1 M838 260.5h1 M862 260.5h1 M885 260.5h1 M909 260.5h1 M933 260.5h1 M956 260.5h1 M980 260.5h1 M1003 260.5h1 M1027 260.5h1 M1051 260.5h1 M1074 260.5h1 M1098 260.5h1 M1122 260.5h1 M1145 260.5h1 M1169 260.5h1 M12 276.5h1 M35 276.5h1 M59 276.5h1 M83 276.5h1 M106 276.5h1 M130 276.5h1 M154 276.5h1 M177 276.5h1 M201 276.5h1 M224 276.5h1 M248 276.5h1 M272 276.5h1 M295 276.5h1 M319 276.5h1 M342 276.5h1 M366 276.5h1 M390 276.5h1 M413 276.5h1 M437 276.5h1 M460 276.5h1 M484 276.5h1 M508 276.5h1 M531 276.5h1 M555 276.5h1 M579 276.5h1 M602 276.5h1 M626 276.5h1 M649 276.5h1 M673 276.5h1 M697 276.5h1 M720 276.5h1 M744 276.5h1 M767 276.5h1 M791 276.5h1 M815 276.5h1 M838 276.5h1 M862 276.5h1 M885 276.5h1 M909 276.5h1 M933 276.5h1 M956 276.5h1 M980 276.5h1 M1003 276.5h1 M1027 276.5h1 M1051 276.5h1 M1074 276.5h1 M1098 276.5h1 M1122 276.5h1 M1145 276.5h1 M1169 276.5h1 M12 292.5h1 M35 292.5h1 M59 292.5h1 M83 292.5h1 M106 292.5h1 M130 292.5h1 M154 292.5h1 M177 292.5h1 M201 292.5h1 M224 292.5h1 M248 292.5h1 M272 292.5h1 M295 292.5h1 M319 292.5h1 M342 292.5h1 M366 292.5h1 M390 292.5h1 M413 292.5h1 M437 292.5h1 M460 292.5h1 M484 292.5h1 M508 292.5h1 M531 292.5h1 M555 292.5h1 M579 292.5h1 M602 292.5h1 M626 292.5h1 M649 292.5h1 M673 292.5h1 M697 292.5h1 M720 292.5h1 M744 292.5h1 M767 292.5h1 M791 292.5h1 M815 292.5h1 M838 292.5h1 M862 292.5h1 M885 292.5h1 M909 292.5h1 M933 292.5h1 M956 292.5h1 M980 292.5h1 M1003 292.5h1 M1027 292.5h1 M1051 292.5h1 M1074 292.5h1 M1098 292.5h1 M1122 292.5h1 M1145 292.5h1 M1169 292.5h1 M12 308.5h1 M35 308.5h1 M59 308.5h1 M83 308.5h1 M106 308.5h1 M130 308.5h1 M154 308.5h1 M177 308.5h1 M201 308.5h1 M224 308.5h1 M248 308.5h1 M272 308.5h1 M295 308.5h1 M319 308.5h1 M342 308.5h1 M366 308.5h1 M390 308.5h1 M413 308.5h1 M437 308.5h1 M460 308.5h1 M484 308.5h1 M508 308.5h1 M531 308.5h1 M555 308.5h1 M579 308.5h1 M602 308.5h1 M626 308.5h1 M649 308.5h1 M673 308.5h1 M697 308.5h1 M720 308.5h1 M744 308.5h1 M767 308.5h1 M791 308.5h1 M815 308.5h1 M838 308.5h1 M862 308.5h1 M885 308.5h1 M909 308.5h1 M933 308.5h1 M956 308.5h1 M980 308.5h1 M1003 308.5h1 M1027 308.5h1 M1051 308.5h1 M1074 308.5h1 M1098 308.5h1 M1122 308.5h1 M1145 308.5h1 M1169 308.5h1 M12 324.5h1 M35 324.5h1 M59 324.5h1 M83 324.5h1 M106 324.5h1 M130 324.5h1 M154 324.5h1 M177 324.5h1 M201 324.5h1 M224 324.5h1 M248 324.5h1 M272 324.5h1 M295 324.5h1 M319 324.5h1 M342 324.5h1 M366 324.5h1 M390 324.5h1 M413 324.5h1 M437 324.5h1 M460 324.5h1 M484 324.5h1 M508 324.5h1 M531 324.5h1 M555 324.5h1 M579 324.5h1 M602 324.5h1 M626 324.5h1 M649 324.5h1 M673 324.5h1 M697 324.5h1 M720 324.5h1 M744 324.5h1 M767 324.5h1 M791 324.5h1 M815 324.5h1 M838 324.5h1 M862 324.5h1 M885 324.5h1 M909 324.5h1 M933 324.5h1 M956 324.5h1 M980 324.5h1 M1003 324.5h1 M1027 324.5h1 M1051 324.5h1 M1074 324.5h1 M1098 324.5h1 M1122 324.5h1 M1145 324.5h1 M1169 324.5h1" stroke="#5c5c5c" stroke-width="1"/>
<path d="M12 359.5h1 M35 359.5h1 M59 359.5h1 M83 359.5h1 M106 359.5h1 M130 359.5h1 M154 359.5h1 M177 359.5h1 M201 359.5h1 M224 359.5h1 M248 359.5h1 M272 359.5h1 M295 359.5h1 M319 359.5h1 M342 359.5h1 M366 359.5h1 M390 359.5h1 M413 359.5h1 M437 359.5h1 M460 359.5h1 M484 359.5h1 M508 359.5h1 M531 359.5h1 M555 359.5h1 M579 359.5h1 M602 359.5h1 M626 359.5h1 M649 359.5h1 M673 359.5h1 M697 359.5h1 M720 359.5h1 M744 359.5h1 M767 359.5h1 M791 359.5h1 M815 359.5h1 M838 359.5h1 M862 359.5h1 M885 359.5h1 M909 359.5h1 M933 359.5h1 M956 359.5h1 M980 359.5h1 M1003 359.5h1 M1027 359.5h1 M1051 359.5h1 M1074 359.5h1 M1098 359.5h1 M1122 359.5h1 M1145 359.5h1 M1169 359.5h1 M12 375.5h1 M35 375.5h1 M59 375.5h1 M83 375.5h1 M106 375.5h1 M130 375.5h1 M154 375.5h1 M177 375.5h1 M201 375.5h1 M224 375.5h1 M248 375.5h1 M272 375.5h1 M295 375.5h1 M319 375.5h1 M342 375.5h1 M366 375.5h1 M390 375.5h1 M413 375.5h1 M437 375.5h1 M460 375.5h1 M484 375.5h1 M508 375.5h1 M531 375.5h1 M555 375.5h1 M579 375.5h1 M602 375.5h1 M626 375.5h1 M649 375.5h1 M673 375.5h1 M697 375.5h1 M720 375.5h1 M744 375.5h1 M767 375.5h1 M791 375.5h1 M815 375.5h1 M838 375.5h1 M862 375.5h1 M885 375.5h1 M909 375.5h1 M933 375.5h1 M956 375.5h1 M980 375.5h1 M1003 375.5h1 M1027 375.5h1 M1051 375.5h1 M1074 375.5h1 M1098 375.5h1 M1122 375.5h1 M1145 375.5h1 M1169 375.5h1 M12 391.5h1 M35 391.5h1 M59 391.5h1 M83 391.5h1 M106 391.5h1 M130 391.5h1 M154 391.5h1 M177 391.5h1 M201 391.5h1 M224 391.5h1 M248 391.5h1 M272 391.5h1 M295 391.5h1 M319 391.5h1 M342 391.5h1 M366 391.5h1 M390 391.5h1 M413 391.5h1 M437 391.5h1 M460 391.5h1 M484 391.5h1 M508 391.5h1 M531 391.5h1 M555 391.5h1 M579 391.5h1 M602 391.5h1 M626 391.5h1 M649 391.5h1 M673 391.5h1 M697 391.5h1 M720 391.5h1 M744 391.5h1 M767 391.5h1 M791 391.5h1 M815 391.5h1 M838 391.5h1 M862 391.5h1 M885 391.5h1 M909 391.5h1 M933 391.5h1 M956 391.5h1 M980 391.5h1 M1003 391.5h1 M1027 391.5h1 M1051 391.5h1 M1074 391.5h1 M1098 391.5h1 M1122 391.5h1 M1145 391.5h1 M1169 391.5h1 M12 407.5h1 M35 407.5h1 M59 407.5h1 M83 407.5h1 M106 407.5h1 M130 407.5h1 M154 407.5h1 M177 407.5h1 M201 407.5h1 M224 407.5h1 M248 407.5h1 M272 407.5h1 M295 407.5h1 M319 407.5h1 M342 407.5h1 M366 407.5h1 M390 407.5h1 M413 407.5h1 M437 407.5h1 M460 407.5h1 M484 407.5h1 M508 407.5h1 M531 407.5h1 M555 407.5h1 M579 407.5h1 M602 407.5h1 M626 407.5h1 M649 407.5h1 M673 407.5h1 M697 407.5h1 M720 407.5h1 M744 407.5h1 M767 407.5h1 M791 407.5h1 M815 407.5h1 M838 407.5h1 M862 407.5h1 M885 407.5h1 M909 407.5h1 M933 407.5h1 M956 407.5h1 M980 407.5h1 M1003 407.5h1 M1027 407.5h1 M1051 407.5h1 M1074 407.5h1 M1098 407.5h1 M1122 407.5h1 M1145 407.5h1 M1169 407.5h1 M12 424.5h1 M35 424.5h1 M59 424.5h1 M83 424.5h1 M106 424.5h1 M130 424.5h1 M154 424.5h1 M177 424.5h1 M201 424.5h1 M224 424.5h1 M248 424.5h1 M272 424.5h1 M295 424.5h1 M319 424.5h1 M342 424.5h1 M366 424.5h1 M390 424.5h1 M413 424.5h1 M437 424.5h1 M460 424.5h1 M484 424.5h1 M508 424.5h1 M531 424.5h1 M555 424.5h1 M579 424.5h1 M602 424.5h1 M626 424.5h1 M649 424.5h1 M673 424.5h1 M697 424.5h1 M720 424.5h1 M744 424.5h1 M767 424.5h1 M791 424.5h1 M815 424.5h1 M838 424.5h1 M862 424.5h1 M885 424.5h1 M909 424.5h1 M933 424.5h1 M956 424.5h1 M980 424.5h1 M1003 424.5h1 M1027 424.5h1 M1051 424.5h1 M1074 424.5h1 M1098 424.5h1 M1122 424.5h1 M1145 424.5h1 M1169 424.5h1 M12 440.5h1 M35 440.5h1 M59 440.5h1 M83 440.5h1 M106 440.5h1 M130 440.5h1 M154 440.5h1 M177 440.5h1 M201 440.5h1 M224 440.5h1 M248 440.5h1 M272 440.5h1 M295 440.5h1 M319 440.5h1 M342 440.5h1 M366 440.5h1 M390 440.5h1 M413 440.5h1 M437 440.5h1 M460 440.5h1 M484 440.5h1 M508 440.5h1 M531 440.5h1 M555 440.5h1 M579 440.5h1 M602 440.5h1 M626 440.5h1 M649 440.5h1 M673 440.5h1 M697 440.5h1 M720 440.5h1 M744 440.5h1 M767 440.5h1 M791 440.5h1 M815 440.5h1 M838 440.5h1 M862 440.5h1 M885 440.5h1 M909 440.5h1 M933 440.5h1 M956 440.5h1 M980 440.5h1 M1003 440.5h1 M1027 440.5h1 M1051 440.5h1 M1074 440.5h1 M1098 440.5h1 M1122 440.5h1 M1145 440.5h1 M1169 440.5h1 M12 456.5h1 M35 456.5h1 M59 456.5h1 M83 456.5h1 M106 456.5h1 M130 456.5h1 M154 456.5h1 M177 456.5h1 M201 456.5h1 M224 456.5h1 M248 456.5h1 M272 456.5h1 M295 456.5h1 M319 456.5h1 M342 456.5h1 M366 456.5h1 M390 456.5h1 M413 456.5h1 M437 456.5h1 M460 456.5h1 M484 456.5h1 M508 456.5h1 M531 456.5h1 M555 456.5h1 M579 456.5h1 M602 456.5h1 M626 456.5h1 M649 456.5h1 M673 456.5h1 M697 456.5h1 M720 456.5h1 M744 456.5h1 M767 456.5h1 M791 456.5h1 M815 456.5h1 M838 456.5h1 M862 456.5h1 M885 456.5h1 M909 456.5h1 M933 456.5h1 M956 456.5h1 M980 456.5h1 M1003 456.5h1 M1027 456.5h1 M1051 456.5h1 M1074 456.5h1 M1098 456.5h1 M1122 456.5h1 M1145 456.5h1 M1169 456.5h1 M12 472.5h1 M35 472.5h1 M59 472.5h1 M83 472.5h1 M106 472.5h1 M130 472.5h1 M154 472.5h1 M177 472.5h1 M201 472.5h1 M224 472.5h1 M248 472.5h1 M272 472.5h1 M295 472.5h1 M319 472.5h1 M342 472.5h1 M366 472.5h1 M390 472.5h1 M413 472.5h1 M437 472.5h1 M460 472.5h1 M484 472.5h1 M508 472.5h1 M531 472.5h1 M555 472.5h1 M579 472.5h1 M602 472.5h1 M626 472.5h1 M649 472.5h1 M673 472.5h1 M697 472.5h1 M720 472.5h1 M744 472.5h1 M767 472.5h1 M791 472.5h1 M815 472.5h1 M838 472.5h1 M862 472.5h1 M885 472.5h1 M909 472.5h1 M933 472.5h1 M956 472.5h1 M980 472.5h1 M1003 472.5h1 M1027 472.5h1 M1051 472.5h1 M1074 472.5h1 M1098 472.5h1 M1122 472.5h1 M1145 472.5h1 M1169 472.5h1 M12 488.5h1 M35 488.5h1 M59 488.5h1 M83 488.5h1 M106 488.5h1 M130 488.5h1 M154 488.5h1 M177 488.5h1 M201 488.5h1 M224 488.5h1 M248 488.5h1 M272 488.5h1 M295 488.5h1 M319 488.5h1 M342 488.5h1 M366 488.5h1 M390 488.5h1 M413 488.5h1 M437 488.5h1 M460 488.5h1 M484 488.5h1 M508 488.5h1 M531 488.5h1 M555 488.5h1 M579 488.5h1 M602 488.5h1 M626 488.5h1 M649 488.5h1 M673 488.5h1 M697 488.5h1 M720 488.5h1 M744 488.5h1 M767 488.5h1 M791 488.5h1 M815 488.5h1 M838 488.5h1 M862 488.5h1 M885 488.5h1 M909 488.5h1 M933 488.5h1 M956 488.5h1 M980 488.5h1 M1003 488.5h1 M1027 488.5h1 M1051 488.5h1 M1074 488.5h1 M1098 488.5h1 M1122 488.5h1 M1145 488.5h1 M1169 488.5h1" stroke="#5c5c5c" stroke-width="1"/>
<line x1="83.5" y1="180" x2="83.5" y2="341" stroke="#707070" stroke-width="1" stroke-dasharray="1 2"/>
<line x1="83.5" y1="343" x2="83.5" y2="505" stroke="#707070" stroke-width="1" stroke-dasharray="1 2"/>
<line x1="83.5" y1="506" x2="83.5" y2="658" stroke="#7a7a7a" stroke-width="1" stroke-dasharray="1 2"/>
<line x1="201.5" y1="180" x2="201.5" y2="341" stroke="#707070" stroke-width="1" stroke-dasharray="1 2"/>
<line x1="201.5" y1="343" x2="201.5" y2="505" stroke="#707070" stroke-width="1" stroke-dasharray="1 2"/>
<line x1="201.5" y1="506" x2="201.5" y2="658" stroke="#7a7a7a" stroke-width="1" stroke-dasharray="1 2"/>
<line x1="319.5" y1="180" x2="319.5" y2="341" stroke="#707070" stroke-width="1" stroke-dasharray="1 2"/>
<line x1="319.5" y1="343" x2="319.5" y2="505" stroke="#707070" stroke-width="1" stroke-dasharray="1 2"/>
<line x1="319.5" y1="506" x2="319.5" y2="658" stroke="#7a7a7a" stroke-width="1" stroke-dasharray="1 2"/>
<line x1="437.5" y1="180" x2="437.5" y2="341" stroke="#707070" stroke-width="1" stroke-dasharray="1 2"/>
<line x1="437.5" y1="343" x2="437.5" y2="505" stroke="#707070" stroke-width="1" stroke-dasharray="1 2"/>
<line x1="437.5" y1="506" x2="437.5" y2="658" stroke="#7a7a7a" stroke-width="1" stroke-dasharray="1 2"/>
<line x1="555.5" y1="180" x2="555.5" y2="341" stroke="#707070" stroke-width="1" stroke-dasharray="1 2"/>
<line x1="555.5" y1="343" x2="555.5" y2="505" stroke="#707070" stroke-width="1" stroke-dasharray="1 2"/>
<line x1="555.5" y1="506" x2="555.5" y2="658" stroke="#7a7a7a" stroke-width="1" stroke-dasharray="1 2"/>
<line x1="673.5" y1="180" x2="673.5" y2="341" stroke="#707070" stroke-width="1" stroke-dasharray="1 2"/>
<line x1="673.5" y1="343" x2="673.5" y2="505" stroke="#707070" stroke-width="1" stroke-dasharray="1 2"/>
<line x1="673.5" y1="506" x2="673.5" y2="658" stroke="#7a7a7a" stroke-width="1" stroke-dasharray="1 2"/>
<line x1="791.5" y1="180" x2="791.5" y2="341" stroke="#707070" stroke-width="1" stroke-dasharray="1 2"/>
<line x1="791.5" y1="343" x2="791.5" y2="505" stroke="#707070" stroke-width="1" stroke-dasharray="1 2"/>
<line x1="791.5" y1="506" x2="791.5" y2="658" stroke="#7a7a7a" stroke-width="1" stroke-dasharray="1 2"/>
<line x1="909.5" y1="180" x2="909.5" y2="341" stroke="#707070" stroke-width="1" stroke-dasharray="1 2"/>
<line x1="909.5" y1="343" x2="909.5" y2="505" stroke="#707070" stroke-width="1" stroke-dasharray="1 2"/>
<line x1="909.5" y1="506" x2="909.5" y2="658" stroke="#7a7a7a" stroke-width="1" stroke-dasharray="1 2"/>
<line x1="1027.5" y1="180" x2="1027.5" y2="341" stroke="#707070" stroke-width="1" stroke-dasharray="1 2"/>
<line x1="1027.5" y1="343" x2="1027.5" y2="505" stroke="#707070" stroke-width="1" stroke-dasharray="1 2"/>
<line x1="1027.5" y1="506" x2="1027.5" y2="658" stroke="#7a7a7a" stroke-width="1" stroke-dasharray="1 2"/>
<line x1="1145.5" y1="180" x2="1145.5" y2="341" stroke="#707070" stroke-width="1" stroke-dasharray="1 2"/>
<line x1="1145.5" y1="343" x2="1145.5" y2="505" stroke="#707070" stroke-width="1" stroke-dasharray="1 2"/>
<line x1="1145.5" y1="506" x2="1145.5" y2="658" stroke="#7a7a7a" stroke-width="1" stroke-dasharray="1 2"/>
<line x1="2.5" y1="180" x2="2.5" y2="669" stroke="#888" stroke-width="1" stroke-dasharray="1 2"/>
<rect x="2" y="341" width="1180" height="1.5" fill="#7a7a7a"/>
<rect x="2" y="505" width="1180" height="1" fill="#7a7a7a"/>
<line x1="27" y1="260.5" x2="1182" y2="260.5" stroke="#8a8a8a" stroke-width="1" stroke-dasharray="4 3"/>
<line x1="27" y1="424.5" x2="1182" y2="424.5" stroke="#8a8a8a" stroke-width="1" stroke-dasharray="4 3"/>
<polyline points="2.00,327.97 2.40,328.52 2.80,327.48 3.20,325.52 3.60,323.29 4.00,321.39 4.40,320.23 4.80,319.93 5.20,320.40 5.60,321.36 6.00,322.44 6.40,323.35 6.80,323.90 7.20,324.05 7.60,323.87 8.00,323.52 8.40,323.14 8.80,322.85 9.20,322.69 9.60,322.65 10.00,322.68 10.40,322.73 10.80,322.78 11.20,322.80 11.60,322.80 12.00,322.80 12.40,322.80 12.80,322.80 13.20,322.80 13.60,322.80 14.00,322.80 14.40,322.80 14.80,322.80 15.20,322.80 15.60,322.80 16.00,322.80 16.40,322.80 16.80,322.80 17.20,322.80 17.60,322.80 18.00,322.80 18.40,322.80 18.80,322.80 19.20,322.80 19.60,322.80 20.00,322.80 20.40,322.80 20.80,322.80 21.20,322.80 21.60,322.80 22.00,322.80 22.40,322.80 22.80,322.80 23.20,322.80 23.60,322.80 24.00,322.80 24.40,322.80 24.80,322.80 25.20,322.80 25.60,322.80 26.00,322.80 26.40,322.80 26.80,322.80 27.20,322.80 27.60,322.80 28.00,322.80 28.40,322.80 28.80,322.80 29.20,322.80 29.60,322.80 30.00,322.80 30.40,322.80 30.80,322.80 31.20,322.80 31.60,322.80 32.00,322.80 32.40,322.80 32.80,322.80 33.20,322.80 33.60,322.80 34.00,322.80 34.40,322.80 34.80,322.80 35.20,322.80 35.60,322.80 36.00,322.80 36.40,322.80 36.80,322.80 37.20,322.80 37.60,322.80 38.00,322.80 38.40,322.80 38.80,322.80 39.20,322.80 39.60,322.80 40.00,322.80 40.40,322.80 40.80,322.80 41.20,322.80 41.60,322.80 42.00,322.80 42.40,322.80 42.80,322.80 43.20,322.80 43.60,322.80 44.00,322.80 44.40,322.80 44.80,322.80 45.20,322.80 45.60,322.80 46.00,322.80 46.40,322.80 46.80,322.80 47.20,322.80 47.60,322.80 48.00,322.80 48.40,322.80 48.80,322.80 49.20,322.80 49.60,322.80 50.00,322.80 50.40,322.80 50.80,322.80 51.20,322.80 51.60,322.80 52.00,322.80 52.40,322.80 52.80,322.80 53.20,322.80 53.60,322.80 54.00,322.80 54.40,322.80 54.80,322.80 55.20,322.80 55.60,322.80 56.00,322.80 56.40,322.80 56.80,322.80 57.20,322.80 57.60,322.80 58.00,322.80 58.40,322.80 58.80,322.80 59.20,322.80 59.60,322.80 60.00,322.80 60.40,322.80 60.80,322.80 61.20,322.80 61.60,322.80 62.00,322.80 62.40,322.80 62.80,322.80 63.20,322.80 63.60,322.80 64.00,322.80 64.40,322.80 64.80,322.80 65.20,322.80 65.60,322.79 66.00,322.75 66.40,322.67 66.80,322.56 67.20,322.50 67.60,322.58 68.00,322.90 68.40,323.48 68.80,324.23 69.20,324.94 69.60,325.30 70.00,325.01 70.40,323.91 70.80,322.08 71.20,319.91 71.60,318.01 72.00,317.07 72.40,317.65 72.80,319.99 73.20,323.79 73.60,328.24 74.00,332.17 74.40,334.23 74.80,333.13 75.20,327.89 75.60,318.06 76.00,303.83 76.40,286.03 76.80,265.98 77.20,245.32 77.60,225.79 78.00,208.95 78.40,196.04 78.80,187.79 79.20,184.35 79.60,185.27 80.00,189.54 80.40,195.72 80.80,202.14 81.20,207.18 81.60,209.59 82.00,208.77 82.40,204.93 82.80,199.01 83.20,192.49 83.60,187.07 84.00,184.32 84.40,185.48 84.80,191.28 85.20,201.86 85.60,216.76 86.00,235.03 86.40,255.33 86.80,276.09 87.20,295.66 87.60,312.50 88.00,325.37 88.40,333.46 88.80,336.60 89.20,335.28 89.60,330.62 90.00,324.21 90.40,317.83 90.80,313.18 91.20,311.49 91.60,313.18 92.00,317.83 92.40,324.21 92.80,330.62 93.20,335.28 93.60,336.60 94.00,333.47 94.40,325.39 94.80,312.55 95.20,295.71 95.60,276.11 96.00,255.26 96.40,234.83 96.80,216.44 97.20,201.47 97.60,190.95 98.00,185.36 98.40,184.56 98.80,187.72 99.20,193.48 99.60,200.10 100.00,205.80 100.40,209.08 100.80,209.08 101.20,205.80 101.60,200.10 102.00,193.48 102.40,187.72 102.80,184.56 103.20,185.36 103.60,190.95 104.00,201.47 104.40,216.44 104.80,234.83 105.20,255.26 105.60,276.11 106.00,295.71 106.40,312.55 106.80,325.39 107.20,333.47 107.60,336.60 108.00,335.28 108.40,330.62 108.80,324.21 109.20,317.83 109.60,313.18 110.00,311.49 110.40,313.18 110.80,317.83 111.20,324.21 111.60,330.62 112.00,335.28 112.40,336.60 112.80,333.47 113.20,325.39 113.60,312.55 114.00,295.71 114.40,276.11 114.80,255.26 115.20,234.83 115.60,216.44 116.00,201.47 116.40,190.95 116.80,185.36 117.20,184.56 117.60,187.72 118.00,193.48 118.40,200.10 118.80,205.80 119.20,209.08 119.60,209.08 120.00,205.80 120.40,200.10 120.80,193.48 121.20,187.72 121.60,184.56 122.00,185.37 122.40,190.96 122.80,201.50 123.20,216.49 123.60,234.88 124.00,255.25 124.40,275.98 124.80,295.45 125.20,312.18 125.60,325.01 126.00,333.22 126.40,336.65 126.80,335.73 127.20,331.46 127.60,325.28 128.00,318.86 128.40,313.82 128.80,311.41 129.20,312.23 129.60,316.07 130.00,321.99 130.40,328.51 130.80,333.93 131.20,336.68 131.60,335.52 132.00,329.72 132.40,319.14 132.80,304.24 133.20,285.97 133.60,265.67 134.00,244.91 134.40,225.34 134.80,208.50 135.20,195.63 135.60,187.54 136.00,184.40 136.40,185.72 136.80,190.38 137.20,196.79 137.60,203.17 138.00,207.82 138.40,209.51 138.80,207.82 139.20,203.17 139.60,196.79 140.00,190.38 140.40,185.72 140.80,184.40 141.20,187.53 141.60,195.61 142.00,208.45 142.40,225.29 142.80,244.89 143.20,265.74 143.60,286.17 144.00,304.56 144.40,319.53 144.80,330.05 145.20,335.64 145.60,336.44 146.00,333.28 146.40,327.52 146.80,320.90 147.20,315.20 147.60,311.92 148.00,311.92 148.40,315.20 148.80,320.90 149.20,327.52 149.60,333.28 150.00,336.44 150.40,335.64 150.80,330.05 151.20,319.53 151.60,304.56 152.00,286.17 152.40,265.74 152.80,244.89 153.20,225.29 153.60,208.45 154.00,195.61 154.40,187.53 154.80,184.40 155.20,185.72 155.60,190.38 156.00,196.79 156.40,203.17 156.80,207.82 157.20,209.51 157.60,207.82 158.00,203.17 158.40,196.79 158.80,190.38 159.20,185.72 159.60,184.40 160.00,187.53 160.40,195.61 160.80,208.45 161.20,225.29 161.60,244.89 162.00,265.74 162.40,286.17 162.80,304.56 163.20,319.53 163.60,330.05 164.00,335.64 164.40,336.44 164.80,333.28 165.20,327.52 165.60,320.90 166.00,315.20 166.40,311.92 166.80,311.92 167.20,315.20 167.60,320.90 168.00,327.52 168.40,333.28 168.80,336.44 169.20,335.64 169.60,330.05 170.00,319.53 170.40,304.56 170.80,286.17 171.20,265.74 171.60,244.89 172.00,225.29 172.40,208.45 172.80,195.61 173.20,187.53 173.60,184.40 174.00,185.72 174.40,190.38 174.80,196.79 175.20,203.17 175.60,207.82 176.00,209.51 176.40,207.82 176.80,203.17 177.20,196.79 177.60,190.38 178.00,185.72 178.40,184.40 178.80,187.54 179.20,195.63 179.60,208.50 180.00,225.34 180.40,244.91 180.80,265.67 181.20,285.97 181.60,304.24 182.00,319.14 182.40,329.72 182.80,335.52 183.20,336.68 183.60,333.93 184.00,328.51 184.40,321.99 184.80,316.07 185.20,312.23 185.60,311.41 186.00,313.82 186.40,318.86 186.80,325.28 187.20,331.46 187.60,335.73 188.00,336.65 188.40,333.22 188.80,325.01 189.20,312.18 189.60,295.45 190.00,275.98 190.40,255.25 190.80,234.88 191.20,216.49 191.60,201.50 192.00,190.96 192.40,185.37 192.80,184.56 193.20,187.72 193.60,193.48 194.00,200.10 194.40,205.80 194.80,209.08 195.20,209.08 195.60,205.80 196.00,200.10 196.40,193.48 196.80,187.72 197.20,184.56 197.60,185.36 198.00,190.95 198.40,201.47 198.80,216.44 199.20,234.83 199.60,255.26 200.00,276.11 200.40,295.71 200.80,312.55 201.20,325.39 201.60,333.47 202.00,336.60 202.40,335.28 202.80,330.62 203.20,324.21 203.60,317.83 204.00,313.18 204.40,311.49 204.80,313.18 205.20,317.83 205.60,324.21 206.00,330.62 206.40,335.28 206.80,336.60 207.20,333.47 207.60,325.39 208.00,312.55 208.40,295.71 208.80,276.11 209.20,255.26 209.60,234.83 210.00,216.44 210.40,201.47 210.80,190.95 211.20,185.36 211.60,184.56 212.00,187.72 212.40,193.48 212.80,200.10 213.20,205.80 213.60,209.08 214.00,209.08 214.40,205.80 214.80,200.10 215.20,193.48 215.60,187.72 216.00,184.56 216.40,185.36 216.80,190.95 217.20,201.47 217.60,216.44 218.00,234.83 218.40,255.26 218.80,276.11 219.20,295.71 219.60,312.55 220.00,325.39 220.40,333.47 220.80,336.60 221.20,335.28 221.60,330.62 222.00,324.21 222.40,317.83 222.80,313.18 223.20,311.49 223.60,313.18 224.00,317.83 224.40,324.21 224.80,330.62 225.20,335.28 225.60,336.60 226.00,333.47 226.40,325.39 226.80,312.55 227.20,295.71 227.60,276.11 228.00,255.26 228.40,234.83 228.80,216.44 229.20,201.47 229.60,190.95 230.00,185.36 230.40,184.56 230.80,187.72 231.20,193.48 231.60,200.10 232.00,205.80 232.40,209.08 232.80,209.08 233.20,205.80 233.60,200.10 234.00,193.48 234.40,187.72 234.80,184.56 235.20,185.37 235.60,190.96 236.00,201.50 236.40,216.49 236.80,234.88 237.20,255.25 237.60,275.98 238.00,295.45 238.40,312.18 238.80,325.01 239.20,333.22 239.60,336.65 240.00,335.73 240.40,331.46 240.80,325.28 241.20,318.86 241.60,313.82 242.00,311.41 242.40,312.23 242.80,316.07 243.20,321.99 243.60,328.51 244.00,333.93 244.40,336.68 244.80,335.52 245.20,329.72 245.60,319.14 246.00,304.24 246.40,285.97 246.80,265.67 247.20,244.91 247.60,225.34 248.00,208.50 248.40,195.63 248.80,187.54 249.20,184.40 249.60,185.72 250.00,190.38 250.40,196.79 250.80,203.17 251.20,207.82 251.60,209.51 252.00,207.82 252.40,203.17 252.80,196.79 253.20,190.38 253.60,185.72 254.00,184.40 254.40,187.53 254.80,195.61 255.20,208.45 255.60,225.29 256.00,244.89 256.40,265.74 256.80,286.17 257.20,304.56 257.60,319.53 258.00,330.05 258.40,335.64 258.80,336.44 259.20,333.28 259.60,327.52 260.00,320.90 260.40,315.20 260.80,311.92 261.20,311.92 261.60,315.20 262.00,320.90 262.40,327.52 262.80,333.28 263.20,336.44 263.60,335.64 264.00,330.05 264.40,319.53 264.80,304.56 265.20,286.17 265.60,265.74 266.00,244.89 266.40,225.29 266.80,208.45 267.20,195.61 267.60,187.53 268.00,184.40 268.40,185.72 268.80,190.38 269.20,196.79 269.60,203.17 270.00,207.82 270.40,209.51 270.80,207.82 271.20,203.17 271.60,196.79 272.00,190.38 272.40,185.72 272.80,184.40 273.20,187.53 273.60,195.61 274.00,208.45 274.40,225.29 274.80,244.89 275.20,265.74 275.60,286.17 276.00,304.56 276.40,319.53 276.80,330.05 277.20,335.64 277.60,336.44 278.00,333.28 278.40,327.52 278.80,320.90 279.20,315.20 279.60,311.92 280.00,311.92 280.40,315.20 280.80,320.90 281.20,327.52 281.60,333.28 282.00,336.44 282.40,335.63 282.80,330.04 283.20,319.50 283.60,304.51 284.00,286.12 284.40,265.75 284.80,245.02 285.20,225.55 285.60,208.82 286.00,195.99 286.40,187.78 286.80,184.35 287.20,185.27 287.60,189.54 288.00,195.72 288.40,202.14 288.80,207.18 289.20,209.59 289.60,208.77 290.00,204.93 290.40,199.01 290.80,192.49 291.20,187.07 291.60,184.32 292.00,185.48 292.40,191.28 292.80,201.86 293.20,216.76 293.60,235.03 294.00,255.33 294.40,276.09 294.80,295.66 295.20,312.50 295.60,325.37 296.00,333.46 296.40,336.60 296.80,335.28 297.20,330.62 297.60,324.21 298.00,317.83 298.40,313.18 298.80,311.49 299.20,313.18 299.60,317.83 300.00,324.21 300.40,330.62 300.80,335.28 301.20,336.60 301.60,333.47 302.00,325.39 302.40,312.55 302.80,295.71 303.20,276.11 303.60,255.26 304.00,234.83 304.40,216.44 304.80,201.47 305.20,190.95 305.60,185.36 306.00,184.56 306.40,187.72 306.80,193.48 307.20,200.10 307.60,205.80 308.00,209.08 308.40,209.08 308.80,205.80 309.20,200.10 309.60,193.48 310.00,187.72 310.40,184.56 310.80,185.37 311.20,190.97 311.60,201.55 312.00,216.62 312.40,235.12 312.80,255.55 313.20,276.21 313.60,295.36 314.00,311.51 314.40,323.58 314.80,331.08 315.20,334.15 315.60,333.52 316.00,330.35 316.40,326.00 316.80,321.74 317.20,318.61 317.60,317.14 318.00,317.38 318.40,318.88 318.80,321.01 319.20,323.07 319.60,324.56 320.00,325.25 320.40,325.19 320.80,324.61 321.20,323.85 321.60,323.16 322.00,322.70 322.40,322.51 322.80,322.52 323.20,322.61 323.60,322.71 324.00,322.78 324.40,322.80 324.80,322.80 325.20,322.80 325.60,322.80 326.00,322.80 326.40,322.80 326.80,322.80 327.20,322.80 327.60,322.80 328.00,322.80 328.40,322.80 328.80,322.80 329.20,322.80 329.60,322.80 330.00,322.80 330.40,322.80 330.80,322.80 331.20,322.80 331.60,322.80 332.00,322.80 332.40,322.80 332.80,322.80 333.20,322.80 333.60,322.80 334.00,322.80 334.40,322.80 334.80,322.80 335.20,322.80 335.60,322.80 336.00,322.80 336.40,322.80 336.80,322.80 337.20,322.80 337.60,322.80 338.00,322.80 338.40,322.80 338.80,322.80 339.20,322.80 339.60,322.80 340.00,322.80 340.40,322.80 340.80,322.80 341.20,322.80 341.60,322.80 342.00,322.80 342.40,322.80 342.80,322.80 343.20,322.80 343.60,322.80 344.00,322.80 344.40,322.80 344.80,322.80 345.20,322.80 345.60,322.80 346.00,322.80 346.40,322.80 346.80,322.80 347.20,322.80 347.60,322.80 348.00,322.80 348.40,322.80 348.80,322.80 349.20,322.80 349.60,322.80 350.00,322.80 350.40,322.80 350.80,322.80 351.20,322.80 351.60,322.80 352.00,322.80 352.40,322.80 352.80,322.80 353.20,322.80 353.60,322.80 354.00,322.80 354.40,322.80 354.80,322.80 355.20,322.80 355.60,322.80 356.00,322.80 356.40,322.80 356.80,322.80 357.20,322.80 357.60,322.80 358.00,322.80 358.40,322.80 358.80,322.80 359.20,322.80 359.60,322.80 360.00,322.80 360.40,322.80 360.80,322.80 361.20,322.80 361.60,322.80 362.00,322.80 362.40,322.80 362.80,322.80 363.20,322.80 363.60,322.80 364.00,322.80 364.40,322.80 364.80,322.80 365.20,322.80 365.60,322.80 366.00,322.80 366.40,322.80 366.80,322.80 367.20,322.80 367.60,322.79 368.00,322.75 368.40,322.67 368.80,322.56 369.20,322.50 369.60,322.58 370.00,322.90 370.40,323.48 370.80,324.23 371.20,324.94 371.60,325.30 372.00,325.01 372.40,323.91 372.80,322.08 373.20,319.91 373.60,318.01 374.00,317.07 374.40,317.65 374.80,319.99 375.20,323.79 375.60,328.24 376.00,332.17 376.40,334.23 376.80,333.14 377.20,327.91 377.60,318.10 378.00,303.89 378.40,286.07 378.80,265.96 379.20,245.19 379.60,225.52 380.00,208.58 380.40,195.66 380.80,187.54 381.20,184.40 381.60,185.72 382.00,190.38 382.40,196.79 382.80,203.17 383.20,207.82 383.60,209.51 384.00,207.82 384.40,203.17 384.80,196.79 385.20,190.38 385.60,185.72 386.00,184.40 386.40,187.53 386.80,195.61 387.20,208.45 387.60,225.29 388.00,244.89 388.40,265.74 388.80,286.17 389.20,304.56 389.60,319.53 390.00,330.05 390.40,335.64 390.80,336.44 391.20,333.28 391.60,327.52 392.00,320.90 392.40,315.20 392.80,311.92 393.20,311.92 393.60,315.20 394.00,320.90 394.40,327.52 394.80,333.28 395.20,336.44 395.60,335.63 396.00,330.04 396.40,319.50 396.80,304.51 397.20,286.12 397.60,265.75 398.00,245.02 398.40,225.55 398.80,208.82 399.20,195.99 399.60,187.78 400.00,184.35 400.40,185.27 400.80,189.54 401.20,195.72 401.60,202.14 402.00,207.18 402.40,209.59 402.80,208.77 403.20,204.93 403.60,199.01 404.00,192.49 404.40,187.07 404.80,184.32 405.20,185.48 405.60,191.28 406.00,201.86 406.40,216.76 406.80,235.03 407.20,255.33 407.60,276.09 408.00,295.66 408.40,312.50 408.80,325.37 409.20,333.46 409.60,336.60 410.00,335.28 410.40,330.62 410.80,324.21 411.20,317.83 411.60,313.18 412.00,311.49 412.40,313.18 412.80,317.83 413.20,324.21 413.60,330.62 414.00,335.28 414.40,336.60 414.80,333.47 415.20,325.39 415.60,312.55 416.00,295.71 416.40,276.11 416.80,255.26 417.20,234.83 417.60,216.44 418.00,201.47 418.40,190.95 418.80,185.36 419.20,184.56 419.60,187.72 420.00,193.48 420.40,200.10 420.80,205.80 421.20,209.08 421.60,209.08 422.00,205.80 422.40,200.10 422.80,193.48 423.20,187.72 423.60,184.56 424.00,185.36 424.40,190.95 424.80,201.47 425.20,216.44 425.60,234.83 426.00,255.26 426.40,276.11 426.80,295.71 427.20,312.55 427.60,325.39 428.00,333.47 428.40,336.60 428.80,335.28 429.20,330.62 429.60,324.21 430.00,317.83 430.40,313.18 430.80,311.49 431.20,313.18 431.60,317.83 432.00,324.21 432.40,330.62 432.80,335.28 433.20,336.60 433.60,333.47 434.00,325.39 434.40,312.55 434.80,295.71 435.20,276.11 435.60,255.26 436.00,234.83 436.40,216.44 436.80,201.47 437.20,190.95 437.60,185.36 438.00,184.56 438.40,187.72 438.80,193.48 439.20,200.10 439.60,205.80 440.00,209.08 440.40,209.08 440.80,205.80 441.20,200.10 441.60,193.48 442.00,187.72 442.40,184.56 442.80,185.36 443.20,190.95 443.60,201.47 444.00,216.44 444.40,234.83 444.80,255.26 445.20,276.11 445.60,295.71 446.00,312.55 446.40,325.39 446.80,333.47 447.20,336.60 447.60,335.28 448.00,330.62 448.40,324.21 448.80,317.83 449.20,313.18 449.60,311.49 450.00,313.18 450.40,317.83 450.80,324.21 451.20,330.62 451.60,335.28 452.00,336.60 452.40,333.46 452.80,325.37 453.20,312.50 453.60,295.66 454.00,276.09 454.40,255.33 454.80,235.03 455.20,216.76 455.60,201.86 456.00,191.28 456.40,185.48 456.80,184.32 457.20,187.07 457.60,192.49 458.00,199.01 458.40,204.93 458.80,208.77 459.20,209.59 459.60,207.18 460.00,202.14 460.40,195.72 460.80,189.54 461.20,185.27 461.60,184.35 462.00,187.78 462.40,195.99 462.80,208.82 463.20,225.55 463.60,245.02 464.00,265.75 464.40,286.12 464.80,304.51 465.20,319.50 465.60,330.04 466.00,335.63 466.40,336.44 466.80,333.28 467.20,327.52 467.60,320.90 468.00,315.20 468.40,311.92 468.80,311.92 469.20,315.20 469.60,320.90 470.00,327.52 470.40,333.28 470.80,336.44 471.20,335.64 471.60,330.05 472.00,319.53 472.40,304.56 472.80,286.17 473.20,265.74 473.60,244.89 474.00,225.29 474.40,208.45 474.80,195.61 475.20,187.53 475.60,184.40 476.00,185.72 476.40,190.38 476.80,196.79 477.20,203.17 477.60,207.82 478.00,209.51 478.40,207.82 478.80,203.17 479.20,196.79 479.60,190.38 480.00,185.72 480.40,184.40 480.80,187.53 481.20,195.61 481.60,208.45 482.00,225.29 482.40,244.89 482.80,265.74 483.20,286.17 483.60,304.56 484.00,319.53 484.40,330.05 484.80,335.64 485.20,336.44 485.60,333.28 486.00,327.52 486.40,320.90 486.80,315.20 487.20,311.92 487.60,311.92 488.00,315.20 488.40,320.90 488.80,327.52 489.20,333.28 489.60,336.44 490.00,335.64 490.40,330.05 490.80,319.53 491.20,304.56 491.60,286.17 492.00,265.74 492.40,244.89 492.80,225.29 493.20,208.45 493.60,195.61 494.00,187.53 494.40,184.40 494.80,185.72 495.20,190.38 495.60,196.79 496.00,203.17 496.40,207.82 496.80,209.51 497.20,207.82 497.60,203.17 498.00,196.79 498.40,190.38 498.80,185.72 499.20,184.40 499.60,187.53 500.00,195.61 500.40,208.45 500.80,225.29 501.20,244.89 501.60,265.74 502.00,286.17 502.40,304.56 502.80,319.53 503.20,330.05 503.60,335.64 504.00,336.44 504.40,333.28 504.80,327.52 505.20,320.90 505.60,315.20 506.00,311.92 506.40,311.92 506.80,315.20 507.20,320.90 507.60,327.52 508.00,333.28 508.40,336.44 508.80,335.63 509.20,330.04 509.60,319.50 510.00,304.51 510.40,286.12 510.80,265.75 511.20,245.02 511.60,225.55 512.00,208.82 512.40,195.99 512.80,187.78 513.20,184.35 513.60,185.27 514.00,189.54 514.40,195.72 514.80,202.14 515.20,207.18 515.60,209.59 516.00,208.77 516.40,204.93 516.80,199.01 517.20,192.49 517.60,187.07 518.00,184.32 518.40,185.48 518.80,191.28 519.20,201.86 519.60,216.76 520.00,235.03 520.40,255.33 520.80,276.09 521.20,295.66 521.60,312.50 522.00,325.37 522.40,333.46 522.80,336.60 523.20,335.28 523.60,330.62 524.00,324.21 524.40,317.83 524.80,313.18 525.20,311.49 525.60,313.18 526.00,317.83 526.40,324.21 526.80,330.62 527.20,335.28 527.60,336.60 528.00,333.47 528.40,325.39 528.80,312.55 529.20,295.71 529.60,276.11 530.00,255.26 530.40,234.83 530.80,216.44 531.20,201.47 531.60,190.95 532.00,185.36 532.40,184.56 532.80,187.72 533.20,193.48 533.60,200.10 534.00,205.80 534.40,209.08 534.80,209.08 535.20,205.80 535.60,200.10 536.00,193.48 536.40,187.72 536.80,184.56 537.20,185.36 537.60,190.95 538.00,201.47 538.40,216.44 538.80,234.83 539.20,255.26 539.60,276.11 540.00,295.71 540.40,312.55 540.80,325.39 541.20,333.47 541.60,336.60 542.00,335.28 542.40,330.62 542.80,324.21 543.20,317.83 543.60,313.18 544.00,311.49 544.40,313.18 544.80,317.83 545.20,324.21 545.60,330.62 546.00,335.28 546.40,336.60 546.80,333.47 547.20,325.39 547.60,312.55 548.00,295.71 548.40,276.11 548.80,255.26 549.20,234.83 549.60,216.44 550.00,201.47 550.40,190.95 550.80,185.36 551.20,184.56 551.60,187.72 552.00,193.48 552.40,200.10 552.80,205.80 553.20,209.08 553.60,209.08 554.00,205.80 554.40,200.10 554.80,193.48 555.20,187.72 555.60,184.56 556.00,185.36 556.40,190.95 556.80,201.47 557.20,216.44 557.60,234.83 558.00,255.26 558.40,276.11 558.80,295.71 559.20,312.55 559.60,325.39 560.00,333.47 560.40,336.60 560.80,335.28 561.20,330.62 561.60,324.21 562.00,317.83 562.40,313.18 562.80,311.49 563.20,313.18 563.60,317.83 564.00,324.21 564.40,330.62 564.80,335.28 565.20,336.60 565.60,333.46 566.00,325.37 566.40,312.50 566.80,295.66 567.20,276.09 567.60,255.33 568.00,235.03 568.40,216.76 568.80,201.86 569.20,191.28 569.60,185.48 570.00,184.32 570.40,187.07 570.80,192.49 571.20,199.01 571.60,204.93 572.00,208.77 572.40,209.59 572.80,207.18 573.20,202.14 573.60,195.72 574.00,189.54 574.40,185.27 574.80,184.35 575.20,187.78 575.60,195.99 576.00,208.82 576.40,225.55 576.80,245.02 577.20,265.75 577.60,286.12 578.00,304.51 578.40,319.50 578.80,330.04 579.20,335.63 579.60,336.44 580.00,333.28 580.40,327.52 580.80,320.90 581.20,315.20 581.60,311.92 582.00,311.92 582.40,315.20 582.80,320.90 583.20,327.52 583.60,333.28 584.00,336.44 584.40,335.64 584.80,330.05 585.20,319.53 585.60,304.56 586.00,286.17 586.40,265.74 586.80,244.89 587.20,225.29 587.60,208.45 588.00,195.61 588.40,187.53 588.80,184.40 589.20,185.72 589.60,190.38 590.00,196.79 590.40,203.17 590.80,207.82 591.20,209.51 591.60,207.82 592.00,203.17 592.40,196.79 592.80,190.38 593.20,185.72 593.60,184.40 594.00,187.53 594.40,195.61 594.80,208.45 595.20,225.29 595.60,244.89 596.00,265.74 596.40,286.17 596.80,304.56 597.20,319.53 597.60,330.05 598.00,335.64 598.40,336.44 598.80,333.28 599.20,327.52 599.60,320.90 600.00,315.20 600.40,311.92 600.80,311.92 601.20,315.20 601.60,320.90 602.00,327.52 602.40,333.28 602.80,336.44 603.20,335.64 603.60,330.05 604.00,319.53 604.40,304.56 604.80,286.17 605.20,265.74 605.60,244.89 606.00,225.29 606.40,208.45 606.80,195.61 607.20,187.53 607.60,184.40 608.00,185.72 608.40,190.38 608.80,196.79 609.20,203.17 609.60,207.82 610.00,209.51 610.40,207.82 610.80,203.17 611.20,196.79 611.60,190.38 612.00,185.72 612.40,184.40 612.80,187.54 613.20,195.63 613.60,208.50 614.00,225.34 614.40,244.91 614.80,265.67 615.20,285.97 615.60,304.24 616.00,319.14 616.40,329.72 616.80,335.52 617.20,336.68 617.60,333.93 618.00,328.51 618.40,321.99 618.80,316.07 619.20,312.23 619.60,311.41 620.00,313.82 620.40,318.86 620.80,325.28 621.20,331.46 621.60,335.73 622.00,336.65 622.40,333.22 622.80,325.01 623.20,312.18 623.60,295.45 624.00,275.98 624.40,255.25 624.80,234.88 625.20,216.49 625.60,201.50 626.00,190.96 626.40,185.37 626.80,184.56 627.20,187.72 627.60,193.48 628.00,200.10 628.40,205.80 628.80,209.08 629.20,209.08 629.60,205.80 630.00,200.10 630.40,193.48 630.80,187.72 631.20,184.56 631.60,185.36 632.00,190.95 632.40,201.47 632.80,216.44 633.20,234.83 633.60,255.26 634.00,276.11 634.40,295.71 634.80,312.55 635.20,325.39 635.60,333.47 636.00,336.60 636.40,335.28 636.80,330.62 637.20,324.21 637.60,317.83 638.00,313.18 638.40,311.49 638.80,313.18 639.20,317.83 639.60,324.21 640.00,330.62 640.40,335.28 640.80,336.60 641.20,333.47 641.60,325.39 642.00,312.55 642.40,295.71 642.80,276.11 643.20,255.26 643.60,234.83 644.00,216.44 644.40,201.47 644.80,190.95 645.20,185.36 645.60,184.56 646.00,187.72 646.40,193.48 646.80,200.10 647.20,205.80 647.60,209.08 648.00,209.08 648.40,205.80 648.80,200.10 649.20,193.48 649.60,187.72 650.00,184.56 650.40,185.36 650.80,190.95 651.20,201.47 651.60,216.44 652.00,234.83 652.40,255.26 652.80,276.11 653.20,295.71 653.60,312.55 654.00,325.39 654.40,333.47 654.80,336.60 655.20,335.28 655.60,330.62 656.00,324.21 656.40,317.83 656.80,313.18 657.20,311.49 657.60,313.18 658.00,317.83 658.40,324.21 658.80,330.62 659.20,335.28 659.60,336.60 660.00,333.47 660.40,325.39 660.80,312.55 661.20,295.71 661.60,276.11 662.00,255.26 662.40,234.83 662.80,216.44 663.20,201.47 663.60,190.95 664.00,185.36 664.40,184.56 664.80,187.72 665.20,193.48 665.60,200.10 666.00,205.80 666.40,209.08 666.80,209.08 667.20,205.80 667.60,200.10 668.00,193.48 668.40,187.72 668.80,184.56 669.20,185.37 669.60,190.96 670.00,201.50 670.40,216.49 670.80,234.88 671.20,255.25 671.60,275.98 672.00,295.45 672.40,312.18 672.80,325.01 673.20,333.22 673.60,336.65 674.00,335.73 674.40,331.46 674.80,325.28 675.20,318.86 675.60,313.82 676.00,311.41 676.40,312.23 676.80,316.07 677.20,321.99 677.60,328.51 678.00,333.93 678.40,336.68 678.80,335.52 679.20,329.72 679.60,319.14 680.00,304.24 680.40,285.97 680.80,265.67 681.20,244.91 681.60,225.34 682.00,208.50 682.40,195.63 682.80,187.54 683.20,184.40 683.60,185.72 684.00,190.38 684.40,196.79 684.80,203.17 685.20,207.82 685.60,209.51 686.00,207.82 686.40,203.17 686.80,196.79 687.20,190.38 687.60,185.72 688.00,184.40 688.40,187.53 688.80,195.61 689.20,208.45 689.60,225.29 690.00,244.89 690.40,265.74 690.80,286.17 691.20,304.56 691.60,319.53 692.00,330.05 692.40,335.64 692.80,336.44 693.20,333.28 693.60,327.52 694.00,320.90 694.40,315.20 694.80,311.92 695.20,311.92 695.60,315.20 696.00,320.90 696.40,327.52 696.80,333.28 697.20,336.44 697.60,335.64 698.00,330.05 698.40,319.53 698.80,304.56 699.20,286.17 699.60,265.74 700.00,244.89 700.40,225.29 700.80,208.45 701.20,195.61 701.60,187.53 702.00,184.40 702.40,185.72 702.80,190.38 703.20,196.79 703.60,203.17 704.00,207.82 704.40,209.51 704.80,207.82 705.20,203.17 705.60,196.79 706.00,190.38 706.40,185.72 706.80,184.40 707.20,187.53 707.60,195.61 708.00,208.45 708.40,225.29 708.80,244.89 709.20,265.74 709.60,286.17 710.00,304.56 710.40,319.53 710.80,330.05 711.20,335.64 711.60,336.44 712.00,333.28 712.40,327.52 712.80,320.90 713.20,315.20 713.60,311.92 714.00,311.92 714.40,315.20 714.80,320.90 715.20,327.52 715.60,333.28 716.00,336.44 716.40,335.64 716.80,330.05 717.20,319.53 717.60,304.56 718.00,286.17 718.40,265.74 718.80,244.89 719.20,225.29 719.60,208.45 720.00,195.61 720.40,187.53 720.80,184.40 721.20,185.72 721.60,190.38 722.00,196.79 722.40,203.17 722.80,207.82 723.20,209.51 723.60,207.82 724.00,203.17 724.40,196.79 724.80,190.38 725.20,185.72 725.60,184.40 726.00,187.54 726.40,195.63 726.80,208.50 727.20,225.34 727.60,244.91 728.00,265.67 728.40,285.97 728.80,304.24 729.20,319.14 729.60,329.72 730.00,335.52 730.40,336.68 730.80,333.93 731.20,328.51 731.60,321.99 732.00,316.07 732.40,312.23 732.80,311.41 733.20,313.82 733.60,318.86 734.00,325.28 734.40,331.46 734.80,335.73 735.20,336.65 735.60,333.22 736.00,325.01 736.40,312.18 736.80,295.45 737.20,275.98 737.60,255.25 738.00,234.88 738.40,216.49 738.80,201.50 739.20,190.96 739.60,185.37 740.00,184.56 740.40,187.72 740.80,193.48 741.20,200.10 741.60,205.80 742.00,209.08 742.40,209.08 742.80,205.80 743.20,200.10 743.60,193.48 744.00,187.72 744.40,184.56 744.80,185.36 745.20,190.95 745.60,201.47 746.00,216.44 746.40,234.83 746.80,255.26 747.20,276.11 747.60,295.71 748.00,312.55 748.40,325.39 748.80,333.47 749.20,336.60 749.60,335.28 750.00,330.62 750.40,324.21 750.80,317.83 751.20,313.18 751.60,311.49 752.00,313.18 752.40,317.83 752.80,324.21 753.20,330.62 753.60,335.28 754.00,336.60 754.40,333.47 754.80,325.39 755.20,312.55 755.60,295.71 756.00,276.11 756.40,255.26 756.80,234.83 757.20,216.44 757.60,201.47 758.00,190.95 758.40,185.36 758.80,184.56 759.20,187.72 759.60,193.48 760.00,200.10 760.40,205.80 760.80,209.08 761.20,209.08 761.60,205.80 762.00,200.10 762.40,193.48 762.80,187.72 763.20,184.56 763.60,185.36 764.00,190.95 764.40,201.47 764.80,216.44 765.20,234.83 765.60,255.26 766.00,276.11 766.40,295.71 766.80,312.55 767.20,325.39 767.60,333.47 768.00,336.60 768.40,335.28 768.80,330.62 769.20,324.21 769.60,317.83 770.00,313.18 770.40,311.49 770.80,313.18 771.20,317.83 771.60,324.21 772.00,330.62 772.40,335.28 772.80,336.60 773.20,333.46 773.60,325.37 774.00,312.50 774.40,295.66 774.80,276.09 775.20,255.33 775.60,235.03 776.00,216.76 776.40,201.86 776.80,191.28 777.20,185.48 777.60,184.32 778.00,187.07 778.40,192.49 778.80,199.01 779.20,204.93 779.60,208.77 780.00,209.59 780.40,207.18 780.80,202.14 781.20,195.72 781.60,189.54 782.00,185.27 782.40,184.35 782.80,187.78 783.20,195.99 783.60,208.82 784.00,225.55 784.40,245.02 784.80,265.75 785.20,286.12 785.60,304.51 786.00,319.50 786.40,330.04 786.80,335.63 787.20,336.44 787.60,333.28 788.00,327.52 788.40,320.90 788.80,315.20 789.20,311.92 789.60,311.92 790.00,315.20 790.40,320.90 790.80,327.52 791.20,333.28 791.60,336.44 792.00,335.64 792.40,330.05 792.80,319.53 793.20,304.56 793.60,286.17 794.00,265.74 794.40,244.89 794.80,225.29 795.20,208.45 795.60,195.61 796.00,187.53 796.40,184.40 796.80,185.72 797.20,190.38 797.60,196.79 798.00,203.17 798.40,207.82 798.80,209.51 799.20,207.82 799.60,203.17 800.00,196.79 800.40,190.38 800.80,185.72 801.20,184.40 801.60,187.53 802.00,195.61 802.40,208.45 802.80,225.29 803.20,244.89 803.60,265.74 804.00,286.17 804.40,304.56 804.80,319.53 805.20,330.05 805.60,335.64 806.00,336.44 806.40,333.28 806.80,327.52 807.20,320.90 807.60,315.20 808.00,311.92 808.40,311.92 808.80,315.20 809.20,320.90 809.60,327.52 810.00,333.28 810.40,336.44 810.80,335.64 811.20,330.05 811.60,319.53 812.00,304.56 812.40,286.17 812.80,265.74 813.20,244.89 813.60,225.29 814.00,208.45 814.40,195.61 814.80,187.53 815.20,184.40 815.60,185.72 816.00,190.38 816.40,196.79 816.80,203.17 817.20,207.82 817.60,209.51 818.00,207.82 818.40,203.17 818.80,196.79 819.20,190.38 819.60,185.72 820.00,184.40 820.40,187.54 820.80,195.66 821.20,208.58 821.60,225.52 822.00,245.19 822.40,265.96 822.80,286.07 823.20,303.89 823.60,318.10 824.00,327.91 824.40,333.14 824.80,334.23 825.20,332.17 825.60,328.24 826.00,323.79 826.40,319.99 826.80,317.65 827.20,317.07 827.60,318.01 828.00,319.91 828.40,322.08 828.80,323.91 829.20,325.01 829.60,325.30 830.00,324.94 830.40,324.23 830.80,323.48 831.20,322.90 831.60,322.58 832.00,322.50 832.40,322.56 832.80,322.67 833.20,322.75 833.60,322.79 834.00,322.80 834.40,322.80 834.80,322.80 835.20,322.80 835.60,322.80 836.00,322.80 836.40,322.80 836.80,322.80 837.20,322.80 837.60,322.80 838.00,322.80 838.40,322.80 838.80,322.80 839.20,322.80 839.60,322.80 840.00,322.80 840.40,322.80 840.80,322.80 841.20,322.80 841.60,322.80 842.00,322.80 842.40,322.80 842.80,322.80 843.20,322.80 843.60,322.80 844.00,322.80 844.40,322.80 844.80,322.80 845.20,322.80 845.60,322.80 846.00,322.80 846.40,322.80 846.80,322.80 847.20,322.80 847.60,322.80 848.00,322.80 848.40,322.80 848.80,322.80 849.20,322.80 849.60,322.80 850.00,322.80 850.40,322.80 850.80,322.80 851.20,322.80 851.60,322.80 852.00,322.80 852.40,322.80 852.80,322.80 853.20,322.80 853.60,322.80 854.00,322.80 854.40,322.80 854.80,322.80 855.20,322.80 855.60,322.80 856.00,322.80 856.40,322.80 856.80,322.80 857.20,322.80 857.60,322.80 858.00,322.80 858.40,322.80 858.80,322.80 859.20,322.80 859.60,322.80 860.00,322.80 860.40,322.80 860.80,322.80 861.20,322.80 861.60,322.80 862.00,322.80 862.40,322.80 862.80,322.80 863.20,322.80 863.60,322.80 864.00,322.80 864.40,322.80 864.80,322.80 865.20,322.80 865.60,322.80 866.00,322.80 866.40,322.80 866.80,322.80 867.20,322.80 867.60,322.80 868.00,322.80 868.40,322.80 868.80,322.80 869.20,322.80 869.60,322.80 870.00,322.80 870.40,322.80 870.80,322.80 871.20,322.80 871.60,322.80 872.00,322.80 872.40,322.80 872.80,322.80 873.20,322.80 873.60,322.80 874.00,322.80 874.40,322.80 874.80,322.80 875.20,322.80 875.60,322.80 876.00,322.80 876.40,322.80 876.80,322.80 877.20,322.80 877.60,322.80 878.00,322.80 878.40,322.80 878.80,322.80 879.20,322.80 879.60,322.80 880.00,322.80 880.40,322.80 880.80,322.80 881.20,322.80 881.60,322.80 882.00,322.80 882.40,322.80 882.80,322.80 883.20,322.80 883.60,322.80 884.00,322.80 884.40,322.80 884.80,322.80 885.20,322.80 885.60,322.80 886.00,322.80 886.40,322.80 886.80,322.80 887.20,322.80 887.60,322.80 888.00,322.80 888.40,322.80 888.80,322.80 889.20,322.80 889.60,322.80 890.00,322.80 890.40,322.80 890.80,322.80 891.20,322.80 891.60,322.80 892.00,322.80 892.40,322.80 892.80,322.80 893.20,322.80 893.60,322.80 894.00,322.80 894.40,322.80 894.80,322.80 895.20,322.80 895.60,322.80 896.00,322.80 896.40,322.80 896.80,322.80 897.20,322.80 897.60,322.80 898.00,322.80 898.40,322.80 898.80,322.80 899.20,322.80 899.60,322.80 900.00,322.80 900.40,322.80 900.80,322.80 901.20,322.80 901.60,322.80 902.00,322.80 902.40,322.80 902.80,322.80 903.20,322.80 903.60,322.80 904.00,322.80 904.40,322.80 904.80,322.80 905.20,322.80 905.60,322.80 906.00,322.80 906.40,322.80 906.80,322.80 907.20,322.80 907.60,322.80 908.00,322.80 908.40,322.80 908.80,322.80 909.20,322.80 909.60,322.80 910.00,322.80 910.40,322.80 910.80,322.80 911.20,322.80 911.60,322.80 912.00,322.80 912.40,322.80 912.80,322.80 913.20,322.80 913.60,322.80 914.00,322.80 914.40,322.80 914.80,322.80 915.20,322.80 915.60,322.80 916.00,322.80 916.40,322.80 916.80,322.80 917.20,322.80 917.60,322.80 918.00,322.80 918.40,322.80 918.80,322.80 919.20,322.80 919.60,322.80 920.00,322.80 920.40,322.80 920.80,322.80 921.20,322.80 921.60,322.80 922.00,322.80 922.40,322.80 922.80,322.80 923.20,322.80 923.60,322.80 924.00,322.80 924.40,322.80 924.80,322.80 925.20,322.80 925.60,322.80 926.00,322.80 926.40,322.80 926.80,322.80 927.20,322.80 927.60,322.80 928.00,322.80 928.40,322.80 928.80,322.80 929.20,322.80 929.60,322.80 930.00,322.80 930.40,322.80 930.80,322.80 931.20,322.80 931.60,322.80 932.00,322.80 932.40,322.80 932.80,322.80 933.20,322.80 933.60,322.80 934.00,322.80 934.40,322.80 934.80,322.80 935.20,322.80 935.60,322.80 936.00,322.80 936.40,322.80 936.80,322.80 937.20,322.80 937.60,322.80 938.00,322.80 938.40,322.80 938.80,322.80 939.20,322.80 939.60,322.80 940.00,322.80 940.40,322.80 940.80,322.80 941.20,322.80 941.60,322.80 942.00,322.80 942.40,322.80 942.80,322.80 943.20,322.80 943.60,322.80 944.00,322.80 944.40,322.80 944.80,322.80 945.20,322.80 945.60,322.80 946.00,322.80 946.40,322.80 946.80,322.80 947.20,322.80 947.60,322.80 948.00,322.80 948.40,322.80 948.80,322.80 949.20,322.80 949.60,322.80 950.00,322.80 950.40,322.80 950.80,322.80 951.20,322.80 951.60,322.80 952.00,322.80 952.40,322.80 952.80,322.80 953.20,322.80 953.60,322.80 954.00,322.80 954.40,322.80 954.80,322.80 955.20,322.80 955.60,322.80 956.00,322.80 956.40,322.80 956.80,322.80 957.20,322.80 957.60,322.80 958.00,322.80 958.40,322.80 958.80,322.80 959.20,322.80 959.60,322.80 960.00,322.80 960.40,322.80 960.80,322.80 961.20,322.80 961.60,322.80 962.00,322.80 962.40,322.80 962.80,322.80 963.20,322.80 963.60,322.80 964.00,322.80 964.40,322.80 964.80,322.80 965.20,322.80 965.60,322.80 966.00,322.80 966.40,322.80 966.80,322.80 967.20,322.80 967.60,322.80 968.00,322.80 968.40,322.80 968.80,322.80 969.20,322.80 969.60,322.80 970.00,322.80 970.40,322.80 970.80,322.80 971.20,322.80 971.60,322.80 972.00,322.80 972.40,322.80 972.80,322.80 973.20,322.80 973.60,322.80 974.00,322.80 974.40,322.80 974.80,322.80 975.20,322.80 975.60,322.80 976.00,322.80 976.40,322.80 976.80,322.80 977.20,322.80 977.60,322.80 978.00,322.80 978.40,322.80 978.80,322.80 979.20,322.80 979.60,322.80 980.00,322.80 980.40,322.80 980.80,322.80 981.20,322.80 981.60,322.80 982.00,322.80 982.40,322.80 982.80,322.80 983.20,322.80 983.60,322.80 984.00,322.80 984.40,322.80 984.80,322.80 985.20,322.80 985.60,322.80 986.00,322.80 986.40,322.80 986.80,322.80 987.20,322.80 987.60,322.80 988.00,322.80 988.40,322.80 988.80,322.80 989.20,322.80 989.60,322.80 990.00,322.80 990.40,322.80 990.80,322.80 991.20,322.80 991.60,322.80 992.00,322.80 992.40,322.80 992.80,322.80 993.20,322.80 993.60,322.80 994.00,322.80 994.40,322.80 994.80,322.80 995.20,322.80 995.60,322.80 996.00,322.80 996.40,322.80 996.80,322.80 997.20,322.80 997.60,322.80 998.00,322.80 998.40,322.80 998.80,322.80 999.20,322.80 999.60,322.80 1000.00,322.80 1000.40,322.80 1000.80,322.80 1001.20,322.80 1001.60,322.80 1002.00,322.80 1002.40,322.80 1002.80,322.80 1003.20,322.80 1003.60,322.80 1004.00,322.80 1004.40,322.80 1004.80,322.80 1005.20,322.80 1005.60,322.80 1006.00,322.80 1006.40,322.80 1006.80,322.80 1007.20,322.80 1007.60,322.80 1008.00,322.80 1008.40,322.80 1008.80,322.80 1009.20,322.80 1009.60,322.80 1010.00,322.80 1010.40,322.80 1010.80,322.80 1011.20,322.80 1011.60,322.80 1012.00,322.80 1012.40,322.80 1012.80,322.80 1013.20,322.80 1013.60,322.80 1014.00,322.80 1014.40,322.80 1014.80,322.80 1015.20,322.80 1015.60,322.80 1016.00,322.80 1016.40,322.80 1016.80,322.80 1017.20,322.80 1017.60,322.80 1018.00,322.80 1018.40,322.80 1018.80,322.80 1019.20,322.80 1019.60,322.80 1020.00,322.80 1020.40,322.80 1020.80,322.80 1021.20,322.80 1021.60,322.80 1022.00,322.80 1022.40,322.80 1022.80,322.80 1023.20,322.80 1023.60,322.80 1024.00,322.80 1024.40,322.80 1024.80,322.80 1025.20,322.80 1025.60,322.80 1026.00,322.80 1026.40,322.80 1026.80,322.80 1027.20,322.80 1027.60,322.78 1028.00,322.71 1028.40,322.61 1028.80,322.52 1029.20,322.51 1029.60,322.70 1030.00,323.16 1030.40,323.85 1030.80,324.61 1031.20,325.19 1031.60,325.25 1032.00,324.56 1032.40,323.07 1032.80,321.01 1033.20,318.88 1033.60,317.38 1034.00,317.14 1034.40,318.61 1034.80,321.74 1035.20,326.00 1035.60,330.35 1036.00,333.52 1036.40,334.15 1036.80,331.07 1037.20,323.55 1037.60,311.46 1038.00,295.30 1038.40,276.18 1038.80,255.62 1039.20,235.31 1039.60,216.94 1040.00,201.94 1040.40,191.30 1040.80,185.48 1041.20,184.32 1041.60,187.07 1042.00,192.49 1042.40,199.01 1042.80,204.93 1043.20,208.77 1043.60,209.59 1044.00,207.18 1044.40,202.14 1044.80,195.72 1045.20,189.54 1045.60,185.27 1046.00,184.35 1046.40,187.78 1046.80,195.99 1047.20,208.82 1047.60,225.55 1048.00,245.02 1048.40,265.75 1048.80,286.12 1049.20,304.51 1049.60,319.50 1050.00,330.04 1050.40,335.63 1050.80,336.44 1051.20,333.28 1051.60,327.52 1052.00,320.90 1052.40,315.20 1052.80,311.92 1053.20,311.92 1053.60,315.20 1054.00,320.90 1054.40,327.52 1054.80,333.28 1055.20,336.44 1055.60,335.64 1056.00,330.05 1056.40,319.53 1056.80,304.56 1057.20,286.17 1057.60,265.74 1058.00,244.89 1058.40,225.29 1058.80,208.45 1059.20,195.61 1059.60,187.53 1060.00,184.40 1060.40,185.72 1060.80,190.38 1061.20,196.79 1061.60,203.17 1062.00,207.82 1062.40,209.51 1062.80,207.82 1063.20,203.17 1063.60,196.79 1064.00,190.38 1064.40,185.72 1064.80,184.40 1065.20,187.53 1065.60,195.61 1066.00,208.45 1066.40,225.29 1066.80,244.89 1067.20,265.74 1067.60,286.17 1068.00,304.56 1068.40,319.53 1068.80,330.05 1069.20,335.64 1069.60,336.44 1070.00,333.28 1070.40,327.52 1070.80,320.90 1071.20,315.20 1071.60,311.92 1072.00,311.92 1072.40,315.20 1072.80,320.90 1073.20,327.52 1073.60,333.28 1074.00,336.44 1074.40,335.64 1074.80,330.05 1075.20,319.53 1075.60,304.56 1076.00,286.17 1076.40,265.74 1076.80,244.89 1077.20,225.29 1077.60,208.45 1078.00,195.61 1078.40,187.53 1078.80,184.40 1079.20,185.72 1079.60,190.38 1080.00,196.79 1080.40,203.17 1080.80,207.82 1081.20,209.51 1081.60,207.82 1082.00,203.17 1082.40,196.79 1082.80,190.38 1083.20,185.72 1083.60,184.40 1084.00,187.54 1084.40,195.63 1084.80,208.50 1085.20,225.34 1085.60,244.91 1086.00,265.67 1086.40,285.97 1086.80,304.24 1087.20,319.14 1087.60,329.72 1088.00,335.52 1088.40,336.68 1088.80,333.93 1089.20,328.51 1089.60,321.99 1090.00,316.07 1090.40,312.23 1090.80,311.41 1091.20,313.82 1091.60,318.86 1092.00,325.28 1092.40,331.46 1092.80,335.73 1093.20,336.65 1093.60,333.22 1094.00,325.01 1094.40,312.18 1094.80,295.45 1095.20,275.98 1095.60,255.25 1096.00,234.88 1096.40,216.49 1096.80,201.50 1097.20,190.96 1097.60,185.37 1098.00,184.56 1098.40,187.72 1098.80,193.48 1099.20,200.10 1099.60,205.80 1100.00,209.08 1100.40,209.08 1100.80,205.80 1101.20,200.10 1101.60,193.48 1102.00,187.72 1102.40,184.56 1102.80,185.36 1103.20,190.95 1103.60,201.47 1104.00,216.44 1104.40,234.83 1104.80,255.26 1105.20,276.11 1105.60,295.71 1106.00,312.55 1106.40,325.39 1106.80,333.47 1107.20,336.60 1107.60,335.28 1108.00,330.62 1108.40,324.21 1108.80,317.83 1109.20,313.18 1109.60,311.49 1110.00,313.18 1110.40,317.83 1110.80,324.21 1111.20,330.62 1111.60,335.28 1112.00,336.60 1112.40,333.47 1112.80,325.39 1113.20,312.55 1113.60,295.71 1114.00,276.11 1114.40,255.26 1114.80,234.83 1115.20,216.44 1115.60,201.47 1116.00,190.95 1116.40,185.36 1116.80,184.56 1117.20,187.72 1117.60,193.48 1118.00,200.10 1118.40,205.80 1118.80,209.08 1119.20,209.08 1119.60,205.80 1120.00,200.10 1120.40,193.48 1120.80,187.72 1121.20,184.56 1121.60,185.36 1122.00,190.95 1122.40,201.47 1122.80,216.44 1123.20,234.83 1123.60,255.26 1124.00,276.11 1124.40,295.71 1124.80,312.55 1125.20,325.39 1125.60,333.47 1126.00,336.60 1126.40,335.28 1126.80,330.62 1127.20,324.21 1127.60,317.83 1128.00,313.18 1128.40,311.49 1128.80,313.18 1129.20,317.83 1129.60,324.21 1130.00,330.62 1130.40,335.28 1130.80,336.60 1131.20,333.47 1131.60,325.39 1132.00,312.55 1132.40,295.71 1132.80,276.11 1133.20,255.26 1133.60,234.83 1134.00,216.44 1134.40,201.47 1134.80,190.95 1135.20,185.36 1135.60,184.56 1136.00,187.72 1136.40,193.48 1136.80,200.10 1137.20,205.80 1137.60,209.08 1138.00,209.08 1138.40,205.80 1138.80,200.10 1139.20,193.48 1139.60,187.72 1140.00,184.56 1140.40,185.37 1140.80,190.96 1141.20,201.50 1141.60,216.49 1142.00,234.88 1142.40,255.25 1142.80,275.98 1143.20,295.45 1143.60,312.18 1144.00,325.01 1144.40,333.22 1144.80,336.65 1145.20,335.73 1145.60,331.46 1146.00,325.28 1146.40,318.86 1146.80,313.82 1147.20,311.41 1147.60,312.23 1148.00,316.07 1148.40,321.99 1148.80,328.51 1149.20,333.93 1149.60,336.68 1150.00,335.52 1150.40,329.72 1150.80,319.14 1151.20,304.24 1151.60,285.97 1152.00,265.67 1152.40,244.91 1152.80,225.34 1153.20,208.50 1153.60,195.63 1154.00,187.54 1154.40,184.40 1154.80,185.72 1155.20,190.38 1155.60,196.79 1156.00,203.17 1156.40,207.82 1156.80,209.51 1157.20,207.82 1157.60,203.17 1158.00,196.79 1158.40,190.38 1158.80,185.72 1159.20,184.40 1159.60,187.53 1160.00,195.61 1160.40,208.45 1160.80,225.29 1161.20,244.89 1161.60,265.74 1162.00,286.17 1162.40,304.56 1162.80,319.53 1163.20,330.05 1163.60,335.64 1164.00,336.44 1164.40,333.28 1164.80,327.52 1165.20,320.90 1165.60,315.20 1166.00,311.92 1166.40,311.92 1166.80,315.20 1167.20,320.90 1167.60,327.52 1168.00,333.28 1168.40,336.44 1168.80,335.64 1169.20,330.05 1169.60,319.53 1170.00,304.56 1170.40,286.17 1170.80,265.74 1171.20,244.89 1171.60,225.29 1172.00,208.45 1172.40,195.61 1172.80,187.53 1173.20,184.40 1173.60,185.72 1174.00,190.38 1174.40,196.79 1174.80,203.17 1175.20,207.82 1175.60,209.51 1176.00,207.82 1176.40,203.17 1176.80,196.79 1177.20,190.38 1177.60,185.72 1178.00,184.40 1178.40,187.53 1178.80,195.61 1179.20,208.45 1179.60,225.29 1180.00,244.89 1180.40,265.74 1180.80,286.17 1181.20,304.56 1181.60,319.53 1182.00,330.05" fill="none" stroke="#8e8ea2" stroke-width="1"/>
<polyline points="2.00,490.82 2.40,491.36 2.80,490.34 3.20,488.39 3.60,486.19 4.00,484.31 4.40,483.15 4.80,482.86 5.20,483.33 5.60,484.27 6.00,485.35 6.40,486.25 6.80,486.79 7.20,486.94 7.60,486.76 8.00,486.41 8.40,486.04 8.80,485.75 9.20,485.59 9.60,485.55 10.00,485.58 10.40,485.63 10.80,485.68 11.20,485.70 11.60,485.70 12.00,485.70 12.40,485.70 12.80,485.70 13.20,485.70 13.60,485.70 14.00,485.70 14.40,485.70 14.80,485.70 15.20,485.70 15.60,485.70 16.00,485.70 16.40,485.70 16.80,485.70 17.20,485.70 17.60,485.70 18.00,485.70 18.40,485.70 18.80,485.70 19.20,485.70 19.60,485.70 20.00,485.70 20.40,485.70 20.80,485.70 21.20,485.70 21.60,485.70 22.00,485.70 22.40,485.70 22.80,485.70 23.20,485.70 23.60,485.70 24.00,485.70 24.40,485.70 24.80,485.70 25.20,485.70 25.60,485.70 26.00,485.70 26.40,485.70 26.80,485.70 27.20,485.70 27.60,485.70 28.00,485.70 28.40,485.70 28.80,485.70 29.20,485.70 29.60,485.70 30.00,485.70 30.40,485.70 30.80,485.70 31.20,485.70 31.60,485.70 32.00,485.70 32.40,485.70 32.80,485.70 33.20,485.70 33.60,485.70 34.00,485.70 34.40,485.70 34.80,485.70 35.20,485.70 35.60,485.70 36.00,485.70 36.40,485.70 36.80,485.70 37.20,485.70 37.60,485.70 38.00,485.70 38.40,485.70 38.80,485.70 39.20,485.70 39.60,485.70 40.00,485.70 40.40,485.70 40.80,485.70 41.20,485.70 41.60,485.70 42.00,485.70 42.40,485.70 42.80,485.68 43.20,485.62 43.60,485.52 44.00,485.42 44.40,485.42 44.80,485.60 45.20,486.05 45.60,486.74 46.00,487.50 46.40,488.06 46.80,488.13 47.20,487.44 47.60,485.97 48.00,483.93 48.40,481.82 48.80,480.33 49.20,480.10 49.60,481.55 50.00,484.65 50.40,488.87 50.80,493.18 51.20,496.32 51.60,496.94 52.00,493.89 52.40,486.42 52.80,474.38 53.20,458.28 53.60,439.25 54.00,418.88 54.40,398.96 54.80,381.22 55.20,367.04 55.60,357.27 56.00,352.07 56.40,350.98 56.80,353.02 57.20,356.91 57.60,361.32 58.00,365.08 58.40,367.40 58.80,367.98 59.20,367.05 59.60,365.16 60.00,363.01 60.40,361.20 60.80,360.11 61.20,359.82 61.60,360.18 62.00,360.88 62.40,361.63 62.80,362.20 63.20,362.52 63.60,362.60 64.00,362.54 64.40,362.43 64.80,362.35 65.20,362.31 65.60,362.30 66.00,362.30 66.40,362.30 66.80,362.30 67.20,362.30 67.60,362.30 68.00,362.30 68.40,362.30 68.80,362.30 69.20,362.30 69.60,362.30 70.00,362.30 70.40,362.30 70.80,362.30 71.20,362.30 71.60,362.30 72.00,362.30 72.40,362.30 72.80,362.30 73.20,362.30 73.60,362.30 74.00,362.30 74.40,362.30 74.80,362.30 75.20,362.30 75.60,362.30 76.00,362.30 76.40,362.30 76.80,362.30 77.20,362.30 77.60,362.30 78.00,362.30 78.40,362.30 78.80,362.30 79.20,362.30 79.60,362.30 80.00,362.30 80.40,362.32 80.80,362.38 81.20,362.48 81.60,362.58 82.00,362.58 82.40,362.40 82.80,361.95 83.20,361.26 83.60,360.50 84.00,359.94 84.40,359.87 84.80,360.56 85.20,362.03 85.60,364.07 86.00,366.18 86.40,367.67 86.80,367.90 87.20,366.45 87.60,363.35 88.00,359.13 88.40,354.82 88.80,351.68 89.20,351.06 89.60,354.11 90.00,361.58 90.40,373.62 90.80,389.72 91.20,408.75 91.60,429.12 92.00,449.04 92.40,466.78 92.80,480.96 93.20,490.73 93.60,495.93 94.00,497.02 94.40,494.98 94.80,491.09 95.20,486.68 95.60,482.92 96.00,480.60 96.40,480.02 96.80,480.95 97.20,482.84 97.60,484.99 98.00,486.80 98.40,487.89 98.80,488.18 99.20,487.82 99.60,487.12 100.00,486.37 100.40,485.80 100.80,485.48 101.20,485.40 101.60,485.46 102.00,485.57 102.40,485.65 102.80,485.69 103.20,485.70 103.60,485.70 104.00,485.70 104.40,485.70 104.80,485.70 105.20,485.70 105.60,485.70 106.00,485.70 106.40,485.70 106.80,485.70 107.20,485.70 107.60,485.70 108.00,485.70 108.40,485.70 108.80,485.70 109.20,485.70 109.60,485.70 110.00,485.70 110.40,485.70 110.80,485.70 111.20,485.70 111.60,485.70 112.00,485.70 112.40,485.70 112.80,485.70 113.20,485.70 113.60,485.70 114.00,485.70 114.40,485.70 114.80,485.70 115.20,485.70 115.60,485.70 116.00,485.70 116.40,485.70 116.80,485.70 117.20,485.70 117.60,485.70 118.00,485.69 118.40,485.65 118.80,485.57 119.20,485.46 119.60,485.40 120.00,485.48 120.40,485.80 120.80,486.37 121.20,487.12 121.60,487.82 122.00,488.18 122.40,487.89 122.80,486.80 123.20,484.99 123.60,482.84 124.00,480.95 124.40,480.02 124.80,480.60 125.20,482.92 125.60,486.68 126.00,491.09 126.40,494.98 126.80,497.02 127.20,495.93 127.60,490.73 128.00,480.96 128.40,466.78 128.80,449.04 129.20,429.12 129.60,408.75 130.00,389.72 130.40,373.62 130.80,361.58 131.20,354.11 131.60,351.06 132.00,351.68 132.40,354.82 132.80,359.13 133.20,363.35 133.60,366.45 134.00,367.90 134.40,367.67 134.80,366.18 135.20,364.07 135.60,362.03 136.00,360.56 136.40,359.87 136.80,359.95 137.20,360.55 137.60,361.39 138.00,362.18 138.40,362.70 138.80,362.81 139.20,362.48 139.60,361.81 140.00,360.96 140.40,360.20 140.80,359.83 141.20,360.11 141.60,361.20 142.00,363.01 142.40,365.16 142.80,367.05 143.20,367.98 143.60,367.40 144.00,365.08 144.40,361.32 144.80,356.91 145.20,353.02 145.60,350.98 146.00,352.07 146.40,357.27 146.80,367.04 147.20,381.22 147.60,398.96 148.00,418.88 148.40,439.25 148.80,458.28 149.20,474.38 149.60,486.42 150.00,493.89 150.40,496.94 150.80,496.32 151.20,493.18 151.60,488.87 152.00,484.65 152.40,481.55 152.80,480.10 153.20,480.33 153.60,481.82 154.00,483.93 154.40,485.97 154.80,487.44 155.20,488.13 155.60,488.06 156.00,487.50 156.40,486.74 156.80,486.05 157.20,485.60 157.60,485.42 158.00,485.42 158.40,485.52 158.80,485.62 159.20,485.68 159.60,485.70 160.00,485.70 160.40,485.70 160.80,485.70 161.20,485.70 161.60,485.70 162.00,485.70 162.40,485.70 162.80,485.70 163.20,485.70 163.60,485.70 164.00,485.70 164.40,485.70 164.80,485.70 165.20,485.70 165.60,485.70 166.00,485.70 166.40,485.70 166.80,485.70 167.20,485.70 167.60,485.70 168.00,485.70 168.40,485.70 168.80,485.70 169.20,485.70 169.60,485.70 170.00,485.70 170.40,485.70 170.80,485.70 171.20,485.70 171.60,485.70 172.00,485.70 172.40,485.70 172.80,485.70 173.20,485.70 173.60,485.70 174.00,485.70 174.40,485.70 174.80,485.70 175.20,485.70 175.60,485.70 176.00,485.70 176.40,485.70 176.80,485.70 177.20,485.70 177.60,485.70 178.00,485.70 178.40,485.70 178.80,485.70 179.20,485.70 179.60,485.70 180.00,485.70 180.40,485.70 180.80,485.70 181.20,485.70 181.60,485.70 182.00,485.70 182.40,485.70 182.80,485.70 183.20,485.70 183.60,485.70 184.00,485.70 184.40,485.70 184.80,485.70 185.20,485.70 185.60,485.70 186.00,485.70 186.40,485.70 186.80,485.70 187.20,485.70 187.60,485.70 188.00,485.70 188.40,485.70 188.80,485.70 189.20,485.70 189.60,485.70 190.00,485.70 190.40,485.70 190.80,485.70 191.20,485.70 191.60,485.70 192.00,485.70 192.40,485.70 192.80,485.70 193.20,485.70 193.60,485.70 194.00,485.70 194.40,485.70 194.80,485.70 195.20,485.70 195.60,485.70 196.00,485.70 196.40,485.70 196.80,485.70 197.20,485.70 197.60,485.70 198.00,485.70 198.40,485.70 198.80,485.70 199.20,485.70 199.60,485.70 200.00,485.70 200.40,485.70 200.80,485.70 201.20,485.70 201.60,485.70 202.00,485.70 202.40,485.70 202.80,485.70 203.20,485.70 203.60,485.70 204.00,485.70 204.40,485.70 204.80,485.70 205.20,485.70 205.60,485.70 206.00,485.70 206.40,485.70 206.80,485.70 207.20,485.70 207.60,485.70 208.00,485.70 208.40,485.70 208.80,485.70 209.20,485.70 209.60,485.70 210.00,485.70 210.40,485.70 210.80,485.70 211.20,485.70 211.60,485.70 212.00,485.70 212.40,485.70 212.80,485.70 213.20,485.70 213.60,485.70 214.00,485.70 214.40,485.70 214.80,485.70 215.20,485.70 215.60,485.70 216.00,485.70 216.40,485.70 216.80,485.70 217.20,485.70 217.60,485.70 218.00,485.70 218.40,485.70 218.80,485.70 219.20,485.70 219.60,485.70 220.00,485.70 220.40,485.70 220.80,485.70 221.20,485.70 221.60,485.70 222.00,485.70 222.40,485.70 222.80,485.70 223.20,485.70 223.60,485.70 224.00,485.70 224.40,485.70 224.80,485.70 225.20,485.70 225.60,485.70 226.00,485.70 226.40,485.70 226.80,485.70 227.20,485.70 227.60,485.70 228.00,485.70 228.40,485.70 228.80,485.70 229.20,485.70 229.60,485.70 230.00,485.70 230.40,485.70 230.80,485.70 231.20,485.70 231.60,485.70 232.00,485.70 232.40,485.70 232.80,485.70 233.20,485.70 233.60,485.70 234.00,485.70 234.40,485.70 234.80,485.70 235.20,485.70 235.60,485.70 236.00,485.70 236.40,485.70 236.80,485.70 237.20,485.70 237.60,485.70 238.00,485.70 238.40,485.70 238.80,485.70 239.20,485.70 239.60,485.70 240.00,485.70 240.40,485.70 240.80,485.70 241.20,485.70 241.60,485.70 242.00,485.70 242.40,485.70 242.80,485.70 243.20,485.70 243.60,485.70 244.00,485.70 244.40,485.70 244.80,485.70 245.20,485.70 245.60,485.70 246.00,485.70 246.40,485.70 246.80,485.70 247.20,485.70 247.60,485.70 248.00,485.70 248.40,485.70 248.80,485.70 249.20,485.70 249.60,485.70 250.00,485.70 250.40,485.70 250.80,485.70 251.20,485.70 251.60,485.70 252.00,485.70 252.40,485.70 252.80,485.70 253.20,485.70 253.60,485.70 254.00,485.70 254.40,485.70 254.80,485.70 255.20,485.70 255.60,485.70 256.00,485.70 256.40,485.70 256.80,485.70 257.20,485.70 257.60,485.70 258.00,485.70 258.40,485.70 258.80,485.70 259.20,485.70 259.60,485.70 260.00,485.70 260.40,485.70 260.80,485.70 261.20,485.70 261.60,485.70 262.00,485.70 262.40,485.70 262.80,485.70 263.20,485.70 263.60,485.70 264.00,485.70 264.40,485.70 264.80,485.70 265.20,485.70 265.60,485.70 266.00,485.70 266.40,485.70 266.80,485.70 267.20,485.70 267.60,485.70 268.00,485.70 268.40,485.70 268.80,485.70 269.20,485.70 269.60,485.70 270.00,485.70 270.40,485.70 270.80,485.70 271.20,485.70 271.60,485.70 272.00,485.70 272.40,485.70 272.80,485.70 273.20,485.70 273.60,485.70 274.00,485.70 274.40,485.70 274.80,485.70 275.20,485.70 275.60,485.70 276.00,485.70 276.40,485.70 276.80,485.70 277.20,485.70 277.60,485.70 278.00,485.70 278.40,485.70 278.80,485.70 279.20,485.70 279.60,485.70 280.00,485.70 280.40,485.70 280.80,485.70 281.20,485.70 281.60,485.70 282.00,485.70 282.40,485.70 282.80,485.70 283.20,485.70 283.60,485.70 284.00,485.70 284.40,485.70 284.80,485.70 285.20,485.70 285.60,485.70 286.00,485.70 286.40,485.70 286.80,485.70 287.20,485.70 287.60,485.70 288.00,485.70 288.40,485.70 288.80,485.70 289.20,485.70 289.60,485.70 290.00,485.70 290.40,485.70 290.80,485.70 291.20,485.70 291.60,485.70 292.00,485.70 292.40,485.70 292.80,485.70 293.20,485.70 293.60,485.70 294.00,485.70 294.40,485.70 294.80,485.70 295.20,485.70 295.60,485.70 296.00,485.70 296.40,485.70 296.80,485.70 297.20,485.70 297.60,485.70 298.00,485.70 298.40,485.70 298.80,485.70 299.20,485.70 299.60,485.70 300.00,485.70 300.40,485.70 300.80,485.70 301.20,485.70 301.60,485.70 302.00,485.70 302.40,485.70 302.80,485.70 303.20,485.70 303.60,485.70 304.00,485.70 304.40,485.70 304.80,485.70 305.20,485.70 305.60,485.70 306.00,485.70 306.40,485.70 306.80,485.70 307.20,485.70 307.60,485.70 308.00,485.70 308.40,485.70 308.80,485.70 309.20,485.70 309.60,485.70 310.00,485.70 310.40,485.70 310.80,485.70 311.20,485.70 311.60,485.70 312.00,485.70 312.40,485.70 312.80,485.70 313.20,485.70 313.60,485.70 314.00,485.70 314.40,485.70 314.80,485.70 315.20,485.70 315.60,485.70 316.00,485.70 316.40,485.70 316.80,485.70 317.20,485.70 317.60,485.70 318.00,485.70 318.40,485.70 318.80,485.70 319.20,485.70 319.60,485.70 320.00,485.70 320.40,485.70 320.80,485.70 321.20,485.70 321.60,485.70 322.00,485.70 322.40,485.70 322.80,485.70 323.20,485.70 323.60,485.70 324.00,485.70 324.40,485.70 324.80,485.70 325.20,485.69 325.60,485.65 326.00,485.57 326.40,485.46 326.80,485.40 327.20,485.48 327.60,485.80 328.00,486.37 328.40,487.12 328.80,487.82 329.20,488.18 329.60,487.89 330.00,486.80 330.40,484.99 330.80,482.84 331.20,480.95 331.60,480.02 332.00,480.60 332.40,482.92 332.80,486.68 333.20,491.09 333.60,494.98 334.00,497.02 334.40,495.93 334.80,490.73 335.20,480.96 335.60,466.78 336.00,449.04 336.40,429.12 336.80,408.75 337.20,389.72 337.60,373.62 338.00,361.58 338.40,354.11 338.80,351.06 339.20,351.68 339.60,354.82 340.00,359.13 340.40,363.35 340.80,366.45 341.20,367.90 341.60,367.67 342.00,366.18 342.40,364.07 342.80,362.03 343.20,360.56 343.60,359.87 344.00,359.94 344.40,360.51 344.80,361.31 345.20,362.08 345.60,362.63 346.00,362.89 346.40,362.80 346.80,362.39 347.20,361.71 347.60,360.90 348.00,360.18 348.40,359.82 348.80,360.11 349.20,361.20 349.60,363.01 350.00,365.16 350.40,367.05 350.80,367.98 351.20,367.40 351.60,365.08 352.00,361.32 352.40,356.91 352.80,353.02 353.20,350.98 353.60,352.07 354.00,357.27 354.40,367.04 354.80,381.22 355.20,398.96 355.60,418.88 356.00,439.25 356.40,458.28 356.80,474.38 357.20,486.42 357.60,493.89 358.00,496.94 358.40,496.32 358.80,493.18 359.20,488.87 359.60,484.65 360.00,481.55 360.40,480.10 360.80,480.33 361.20,481.82 361.60,483.93 362.00,485.97 362.40,487.44 362.80,488.13 363.20,488.06 363.60,487.50 364.00,486.74 364.40,486.05 364.80,485.60 365.20,485.42 365.60,485.42 366.00,485.52 366.40,485.62 366.80,485.68 367.20,485.70 367.60,485.70 368.00,485.70 368.40,485.70 368.80,485.70 369.20,485.70 369.60,485.70 370.00,485.70 370.40,485.70 370.80,485.70 371.20,485.70 371.60,485.70 372.00,485.70 372.40,485.70 372.80,485.70 373.20,485.70 373.60,485.70 374.00,485.70 374.40,485.70 374.80,485.70 375.20,485.70 375.60,485.70 376.00,485.70 376.40,485.70 376.80,485.70 377.20,485.70 377.60,485.70 378.00,485.70 378.40,485.70 378.80,485.70 379.20,485.70 379.60,485.70 380.00,485.70 380.40,485.70 380.80,485.70 381.20,485.70 381.60,485.70 382.00,485.70 382.40,485.70 382.80,485.70 383.20,485.70 383.60,485.70 384.00,485.70 384.40,485.70 384.80,485.70 385.20,485.70 385.60,485.70 386.00,485.70 386.40,485.70 386.80,485.70 387.20,485.70 387.60,485.70 388.00,485.70 388.40,485.70 388.80,485.70 389.20,485.70 389.60,485.70 390.00,485.70 390.40,485.70 390.80,485.70 391.20,485.70 391.60,485.70 392.00,485.70 392.40,485.70 392.80,485.70 393.20,485.70 393.60,485.70 394.00,485.70 394.40,485.70 394.80,485.70 395.20,485.70 395.60,485.70 396.00,485.70 396.40,485.70 396.80,485.70 397.20,485.70 397.60,485.70 398.00,485.70 398.40,485.70 398.80,485.70 399.20,485.70 399.60,485.70 400.00,485.70 400.40,485.70 400.80,485.70 401.20,485.70 401.60,485.70 402.00,485.70 402.40,485.70 402.80,485.70 403.20,485.70 403.60,485.70 404.00,485.70 404.40,485.70 404.80,485.70 405.20,485.70 405.60,485.70 406.00,485.70 406.40,485.70 406.80,485.70 407.20,485.70 407.60,485.70 408.00,485.70 408.40,485.70 408.80,485.70 409.20,485.70 409.60,485.70 410.00,485.70 410.40,485.70 410.80,485.70 411.20,485.70 411.60,485.70 412.00,485.70 412.40,485.70 412.80,485.70 413.20,485.70 413.60,485.70 414.00,485.70 414.40,485.70 414.80,485.70 415.20,485.70 415.60,485.70 416.00,485.70 416.40,485.70 416.80,485.70 417.20,485.70 417.60,485.70 418.00,485.70 418.40,485.70 418.80,485.70 419.20,485.70 419.60,485.70 420.00,485.70 420.40,485.70 420.80,485.70 421.20,485.70 421.60,485.70 422.00,485.70 422.40,485.70 422.80,485.70 423.20,485.70 423.60,485.70 424.00,485.70 424.40,485.70 424.80,485.70 425.20,485.70 425.60,485.70 426.00,485.70 426.40,485.70 426.80,485.70 427.20,485.70 427.60,485.70 428.00,485.70 428.40,485.70 428.80,485.70 429.20,485.70 429.60,485.70 430.00,485.70 430.40,485.70 430.80,485.70 431.20,485.70 431.60,485.70 432.00,485.70 432.40,485.70 432.80,485.70 433.20,485.70 433.60,485.70 434.00,485.70 434.40,485.70 434.80,485.70 435.20,485.70 435.60,485.70 436.00,485.70 436.40,485.70 436.80,485.70 437.20,485.70 437.60,485.70 438.00,485.70 438.40,485.70 438.80,485.70 439.20,485.70 439.60,485.70 440.00,485.70 440.40,485.70 440.80,485.70 441.20,485.70 441.60,485.70 442.00,485.70 442.40,485.70 442.80,485.70 443.20,485.70 443.60,485.70 444.00,485.70 444.40,485.70 444.80,485.70 445.20,485.70 445.60,485.70 446.00,485.70 446.40,485.70 446.80,485.70 447.20,485.70 447.60,485.70 448.00,485.70 448.40,485.70 448.80,485.70 449.20,485.70 449.60,485.70 450.00,485.70 450.40,485.70 450.80,485.70 451.20,485.70 451.60,485.70 452.00,485.70 452.40,485.70 452.80,485.70 453.20,485.70 453.60,485.70 454.00,485.70 454.40,485.70 454.80,485.70 455.20,485.70 455.60,485.70 456.00,485.70 456.40,485.70 456.80,485.70 457.20,485.70 457.60,485.70 458.00,485.70 458.40,485.70 458.80,485.70 459.20,485.70 459.60,485.70 460.00,485.70 460.40,485.70 460.80,485.70 461.20,485.70 461.60,485.70 462.00,485.70 462.40,485.70 462.80,485.70 463.20,485.70 463.60,485.70 464.00,485.70 464.40,485.70 464.80,485.70 465.20,485.70 465.60,485.70 466.00,485.70 466.40,485.70 466.80,485.70 467.20,485.70 467.60,485.70 468.00,485.70 468.40,485.70 468.80,485.70 469.20,485.70 469.60,485.70 470.00,485.70 470.40,485.70 470.80,485.70 471.20,485.70 471.60,485.70 472.00,485.70 472.40,485.70 472.80,485.70 473.20,485.70 473.60,485.70 474.00,485.70 474.40,485.70 474.80,485.70 475.20,485.70 475.60,485.70 476.00,485.70 476.40,485.70 476.80,485.70 477.20,485.70 477.60,485.70 478.00,485.70 478.40,485.70 478.80,485.70 479.20,485.70 479.60,485.70 480.00,485.70 480.40,485.70 480.80,485.70 481.20,485.70 481.60,485.70 482.00,485.70 482.40,485.70 482.80,485.70 483.20,485.70 483.60,485.70 484.00,485.70 484.40,485.70 484.80,485.70 485.20,485.70 485.60,485.70 486.00,485.70 486.40,485.70 486.80,485.70 487.20,485.70 487.60,485.70 488.00,485.70 488.40,485.70 488.80,485.70 489.20,485.70 489.60,485.70 490.00,485.70 490.40,485.70 490.80,485.70 491.20,485.70 491.60,485.70 492.00,485.70 492.40,485.70 492.80,485.70 493.20,485.70 493.60,485.70 494.00,485.70 494.40,485.70 494.80,485.70 495.20,485.68 495.60,485.62 496.00,485.52 496.40,485.42 496.80,485.42 497.20,485.60 497.60,486.05 498.00,486.74 498.40,487.50 498.80,488.06 499.20,488.13 499.60,487.44 500.00,485.97 500.40,483.93 500.80,481.82 501.20,480.33 501.60,480.10 502.00,481.55 502.40,484.65 502.80,488.87 503.20,493.18 503.60,496.32 504.00,496.94 504.40,493.89 504.80,486.42 505.20,474.38 505.60,458.28 506.00,439.25 506.40,418.88 506.80,398.96 507.20,381.22 507.60,367.04 508.00,357.27 508.40,352.07 508.80,350.98 509.20,353.02 509.60,356.91 510.00,361.32 510.40,365.08 510.80,367.40 511.20,367.98 511.60,367.05 512.00,365.16 512.40,363.01 512.80,361.20 513.20,360.11 513.60,359.82 514.00,360.18 514.40,360.88 514.80,361.63 515.20,362.20 515.60,362.52 516.00,362.60 516.40,362.54 516.80,362.43 517.20,362.35 517.60,362.31 518.00,362.30 518.40,362.30 518.80,362.30 519.20,362.30 519.60,362.30 520.00,362.30 520.40,362.30 520.80,362.30 521.20,362.30 521.60,362.30 522.00,362.30 522.40,362.30 522.80,362.30 523.20,362.30 523.60,362.30 524.00,362.30 524.40,362.30 524.80,362.30 525.20,362.30 525.60,362.30 526.00,362.30 526.40,362.30 526.80,362.30 527.20,362.30 527.60,362.30 528.00,362.30 528.40,362.30 528.80,362.30 529.20,362.30 529.60,362.30 530.00,362.30 530.40,362.30 530.80,362.30 531.20,362.30 531.60,362.30 532.00,362.30 532.40,362.30 532.80,362.30 533.20,362.32 533.60,362.38 534.00,362.48 534.40,362.58 534.80,362.58 535.20,362.40 535.60,361.95 536.00,361.26 536.40,360.50 536.80,359.94 537.20,359.87 537.60,360.56 538.00,362.03 538.40,364.07 538.80,366.18 539.20,367.67 539.60,367.90 540.00,366.45 540.40,363.35 540.80,359.13 541.20,354.82 541.60,351.68 542.00,351.06 542.40,354.11 542.80,361.58 543.20,373.62 543.60,389.72 544.00,408.75 544.40,429.12 544.80,449.04 545.20,466.78 545.60,480.96 546.00,490.73 546.40,495.93 546.80,497.02 547.20,494.98 547.60,491.09 548.00,486.68 548.40,482.92 548.80,480.60 549.20,480.02 549.60,480.95 550.00,482.84 550.40,484.99 550.80,486.80 551.20,487.89 551.60,488.17 552.00,487.77 552.40,486.99 552.80,486.14 553.20,485.49 553.60,485.26 554.00,485.49 554.40,486.14 554.80,486.99 555.20,487.77 555.60,488.17 556.00,487.89 556.40,486.80 556.80,484.99 557.20,482.84 557.60,480.95 558.00,480.02 558.40,480.60 558.80,482.92 559.20,486.68 559.60,491.09 560.00,494.98 560.40,497.02 560.80,495.93 561.20,490.73 561.60,480.96 562.00,466.78 562.40,449.04 562.80,429.12 563.20,408.75 563.60,389.72 564.00,373.62 564.40,361.58 564.80,354.11 565.20,351.06 565.60,351.68 566.00,354.82 566.40,359.13 566.80,363.35 567.20,366.45 567.60,367.90 568.00,367.67 568.40,366.18 568.80,364.07 569.20,362.03 569.60,360.56 570.00,359.87 570.40,359.94 570.80,360.51 571.20,361.29 571.60,362.03 572.00,362.58 572.40,362.86 572.80,362.86 573.20,362.58 573.60,362.03 574.00,361.29 574.40,360.51 574.80,359.94 575.20,359.87 575.60,360.56 576.00,362.03 576.40,364.07 576.80,366.18 577.20,367.67 577.60,367.90 578.00,366.45 578.40,363.35 578.80,359.13 579.20,354.82 579.60,351.68 580.00,351.06 580.40,354.11 580.80,361.58 581.20,373.62 581.60,389.72 582.00,408.75 582.40,429.12 582.80,449.04 583.20,466.78 583.60,480.96 584.00,490.73 584.40,495.93 584.80,497.02 585.20,494.98 585.60,491.09 586.00,486.68 586.40,482.92 586.80,480.60 587.20,480.02 587.60,480.95 588.00,482.84 588.40,484.99 588.80,486.80 589.20,487.89 589.60,488.18 590.00,487.82 590.40,487.12 590.80,486.37 591.20,485.80 591.60,485.48 592.00,485.40 592.40,485.46 592.80,485.57 593.20,485.65 593.60,485.69 594.00,485.70 594.40,485.70 594.80,485.70 595.20,485.70 595.60,485.70 596.00,485.70 596.40,485.70 596.80,485.70 597.20,485.70 597.60,485.70 598.00,485.70 598.40,485.70 598.80,485.70 599.20,485.70 599.60,485.70 600.00,485.70 600.40,485.70 600.80,485.70 601.20,485.70 601.60,485.70 602.00,485.70 602.40,485.70 602.80,485.70 603.20,485.70 603.60,485.70 604.00,485.70 604.40,485.70 604.80,485.70 605.20,485.70 605.60,485.70 606.00,485.70 606.40,485.70 606.80,485.70 607.20,485.70 607.60,485.70 608.00,485.70 608.40,485.70 608.80,485.70 609.20,485.70 609.60,485.70 610.00,485.70 610.40,485.70 610.80,485.70 611.20,485.70 611.60,485.70 612.00,485.70 612.40,485.70 612.80,485.70 613.20,485.70 613.60,485.70 614.00,485.70 614.40,485.70 614.80,485.70 615.20,485.70 615.60,485.70 616.00,485.70 616.40,485.70 616.80,485.70 617.20,485.70 617.60,485.70 618.00,485.70 618.40,485.70 618.80,485.70 619.20,485.70 619.60,485.70 620.00,485.70 620.40,485.70 620.80,485.70 621.20,485.70 621.60,485.70 622.00,485.70 622.40,485.70 622.80,485.70 623.20,485.70 623.60,485.70 624.00,485.70 624.40,485.70 624.80,485.70 625.20,485.70 625.60,485.70 626.00,485.70 626.40,485.70 626.80,485.70 627.20,485.70 627.60,485.70 628.00,485.70 628.40,485.70 628.80,485.70 629.20,485.70 629.60,485.70 630.00,485.70 630.40,485.70 630.80,485.70 631.20,485.70 631.60,485.70 632.00,485.70 632.40,485.70 632.80,485.70 633.20,485.70 633.60,485.70 634.00,485.70 634.40,485.70 634.80,485.70 635.20,485.70 635.60,485.70 636.00,485.70 636.40,485.70 636.80,485.70 637.20,485.70 637.60,485.70 638.00,485.70 638.40,485.70 638.80,485.70 639.20,485.70 639.60,485.70 640.00,485.70 640.40,485.70 640.80,485.70 641.20,485.70 641.60,485.70 642.00,485.70 642.40,485.70 642.80,485.70 643.20,485.70 643.60,485.70 644.00,485.70 644.40,485.70 644.80,485.70 645.20,485.70 645.60,485.69 646.00,485.65 646.40,485.57 646.80,485.46 647.20,485.40 647.60,485.48 648.00,485.80 648.40,486.37 648.80,487.12 649.20,487.82 649.60,488.18 650.00,487.89 650.40,486.80 650.80,484.99 651.20,482.84 651.60,480.95 652.00,480.02 652.40,480.60 652.80,482.92 653.20,486.68 653.60,491.09 654.00,494.98 654.40,497.02 654.80,495.93 655.20,490.73 655.60,480.96 656.00,466.78 656.40,449.04 656.80,429.12 657.20,408.75 657.60,389.72 658.00,373.62 658.40,361.58 658.80,354.11 659.20,351.06 659.60,351.68 660.00,354.82 660.40,359.13 660.80,363.35 661.20,366.45 661.60,367.90 662.00,367.67 662.40,366.18 662.80,364.07 663.20,362.03 663.60,360.56 664.00,359.87 664.40,359.94 664.80,360.51 665.20,361.31 665.60,362.08 666.00,362.63 666.40,362.89 666.80,362.80 667.20,362.39 667.60,361.71 668.00,360.90 668.40,360.18 668.80,359.82 669.20,360.11 669.60,361.20 670.00,363.01 670.40,365.16 670.80,367.05 671.20,367.98 671.60,367.40 672.00,365.08 672.40,361.32 672.80,356.91 673.20,353.02 673.60,350.98 674.00,352.07 674.40,357.27 674.80,367.04 675.20,381.22 675.60,398.96 676.00,418.88 676.40,439.25 676.80,458.28 677.20,474.38 677.60,486.42 678.00,493.89 678.40,496.94 678.80,496.32 679.20,493.18 679.60,488.87 680.00,484.65 680.40,481.55 680.80,480.10 681.20,480.33 681.60,481.82 682.00,483.93 682.40,485.97 682.80,487.44 683.20,488.13 683.60,488.05 684.00,487.45 684.40,486.61 684.80,485.82 685.20,485.30 685.60,485.19 686.00,485.52 686.40,486.19 686.80,487.04 687.20,487.80 687.60,488.17 688.00,487.89 688.40,486.80 688.80,484.99 689.20,482.84 689.60,480.95 690.00,480.02 690.40,480.60 690.80,482.92 691.20,486.68 691.60,491.09 692.00,494.98 692.40,497.02 692.80,495.93 693.20,490.73 693.60,480.96 694.00,466.78 694.40,449.04 694.80,429.12 695.20,408.75 695.60,389.72 696.00,373.62 696.40,361.58 696.80,354.11 697.20,351.06 697.60,351.68 698.00,354.82 698.40,359.13 698.80,363.35 699.20,366.45 699.60,367.90 700.00,367.67 700.40,366.18 700.80,364.07 701.20,362.03 701.60,360.56 702.00,359.87 702.40,359.94 702.80,360.53 703.20,361.35 703.60,362.13 704.00,362.68 704.40,362.87 704.80,362.68 705.20,362.13 705.60,361.35 706.00,360.53 706.40,359.94 706.80,359.87 707.20,360.56 707.60,362.03 708.00,364.07 708.40,366.18 708.80,367.67 709.20,367.90 709.60,366.45 710.00,363.35 710.40,359.13 710.80,354.82 711.20,351.68 711.60,351.06 712.00,354.11 712.40,361.58 712.80,373.62 713.20,389.72 713.60,408.75 714.00,429.12 714.40,449.04 714.80,466.78 715.20,480.96 715.60,490.73 716.00,495.93 716.40,497.02 716.80,494.98 717.20,491.09 717.60,486.68 718.00,482.92 718.40,480.60 718.80,480.02 719.20,480.95 719.60,482.84 720.00,484.99 720.40,486.80 720.80,487.89 721.20,488.18 721.60,487.82 722.00,487.12 722.40,486.37 722.80,485.80 723.20,485.48 723.60,485.40 724.00,485.46 724.40,485.57 724.80,485.65 725.20,485.69 725.60,485.70 726.00,485.70 726.40,485.70 726.80,485.70 727.20,485.70 727.60,485.70 728.00,485.70 728.40,485.70 728.80,485.70 729.20,485.70 729.60,485.70 730.00,485.70 730.40,485.70 730.80,485.70 731.20,485.70 731.60,485.70 732.00,485.70 732.40,485.70 732.80,485.70 733.20,485.70 733.60,485.70 734.00,485.70 734.40,485.70 734.80,485.70 735.20,485.70 735.60,485.70 736.00,485.70 736.40,485.70 736.80,485.70 737.20,485.70 737.60,485.70 738.00,485.70 738.40,485.70 738.80,485.70 739.20,485.70 739.60,485.70 740.00,485.70 740.40,485.70 740.80,485.70 741.20,485.70 741.60,485.70 742.00,485.70 742.40,485.70 742.80,485.70 743.20,485.70 743.60,485.70 744.00,485.70 744.40,485.70 744.80,485.70 745.20,485.70 745.60,485.70 746.00,485.70 746.40,485.70 746.80,485.70 747.20,485.70 747.60,485.70 748.00,485.70 748.40,485.70 748.80,485.70 749.20,485.70 749.60,485.70 750.00,485.70 750.40,485.70 750.80,485.70 751.20,485.70 751.60,485.70 752.00,485.70 752.40,485.70 752.80,485.70 753.20,485.70 753.60,485.70 754.00,485.70 754.40,485.70 754.80,485.70 755.20,485.70 755.60,485.70 756.00,485.70 756.40,485.70 756.80,485.70 757.20,485.70 757.60,485.70 758.00,485.70 758.40,485.70 758.80,485.70 759.20,485.70 759.60,485.70 760.00,485.70 760.40,485.70 760.80,485.70 761.20,485.70 761.60,485.70 762.00,485.70 762.40,485.70 762.80,485.70 763.20,485.70 763.60,485.70 764.00,485.70 764.40,485.70 764.80,485.70 765.20,485.70 765.60,485.70 766.00,485.70 766.40,485.70 766.80,485.70 767.20,485.70 767.60,485.70 768.00,485.70 768.40,485.70 768.80,485.70 769.20,485.70 769.60,485.70 770.00,485.70 770.40,485.70 770.80,485.70 771.20,485.70 771.60,485.70 772.00,485.70 772.40,485.70 772.80,485.70 773.20,485.70 773.60,485.70 774.00,485.70 774.40,485.70 774.80,485.70 775.20,485.70 775.60,485.70 776.00,485.70 776.40,485.70 776.80,485.70 777.20,485.70 777.60,485.70 778.00,485.69 778.40,485.65 778.80,485.57 779.20,485.46 779.60,485.40 780.00,485.48 780.40,485.80 780.80,486.37 781.20,487.12 781.60,487.82 782.00,488.18 782.40,487.89 782.80,486.80 783.20,484.99 783.60,482.84 784.00,480.95 784.40,480.02 784.80,480.60 785.20,482.92 785.60,486.68 786.00,491.09 786.40,494.98 786.80,497.02 787.20,495.93 787.60,490.73 788.00,480.96 788.40,466.78 788.80,449.04 789.20,429.12 789.60,408.75 790.00,389.72 790.40,373.62 790.80,361.58 791.20,354.11 791.60,351.06 792.00,351.68 792.40,354.82 792.80,359.13 793.20,363.35 793.60,366.45 794.00,367.90 794.40,367.67 794.80,366.18 795.20,364.07 795.60,362.03 796.00,360.56 796.40,359.87 796.80,359.94 797.20,360.51 797.60,361.29 798.00,362.03 798.40,362.58 798.80,362.86 799.20,362.86 799.60,362.58 800.00,362.03 800.40,361.29 800.80,360.51 801.20,359.94 801.60,359.87 802.00,360.56 802.40,362.03 802.80,364.07 803.20,366.18 803.60,367.67 804.00,367.90 804.40,366.45 804.80,363.35 805.20,359.13 805.60,354.82 806.00,351.68 806.40,351.06 806.80,354.11 807.20,361.58 807.60,373.62 808.00,389.72 808.40,408.75 808.80,429.12 809.20,449.04 809.60,466.78 810.00,480.96 810.40,490.73 810.80,495.93 811.20,497.02 811.60,494.98 812.00,491.09 812.40,486.68 812.80,482.92 813.20,480.60 813.60,480.02 814.00,480.95 814.40,482.84 814.80,484.99 815.20,486.80 815.60,487.89 816.00,488.18 816.40,487.82 816.80,487.12 817.20,486.37 817.60,485.80 818.00,485.48 818.40,485.40 818.80,485.46 819.20,485.57 819.60,485.65 820.00,485.69 820.40,485.70 820.80,485.70 821.20,485.70 821.60,485.70 822.00,485.70 822.40,485.70 822.80,485.70 823.20,485.70 823.60,485.70 824.00,485.70 824.40,485.70 824.80,485.70 825.20,485.70 825.60,485.70 826.00,485.70 826.40,485.70 826.80,485.70 827.20,485.70 827.60,485.70 828.00,485.70 828.40,485.70 828.80,485.70 829.20,485.70 829.60,485.70 830.00,485.70 830.40,485.70 830.80,485.70 831.20,485.70 831.60,485.70 832.00,485.70 832.40,485.70 832.80,485.70 833.20,485.70 833.60,485.70 834.00,485.70 834.40,485.70 834.80,485.70 835.20,485.70 835.60,485.70 836.00,485.70 836.40,485.70 836.80,485.70 837.20,485.70 837.60,485.70 838.00,485.70 838.40,485.70 838.80,485.70 839.20,485.70 839.60,485.70 840.00,485.70 840.40,485.70 840.80,485.70 841.20,485.70 841.60,485.70 842.00,485.70 842.40,485.70 842.80,485.70 843.20,485.70 843.60,485.70 844.00,485.70 844.40,485.70 844.80,485.70 845.20,485.70 845.60,485.70 846.00,485.70 846.40,485.70 846.80,485.70 847.20,485.70 847.60,485.70 848.00,485.70 848.40,485.70 848.80,485.70 849.20,485.70 849.60,485.70 850.00,485.70 850.40,485.70 850.80,485.70 851.20,485.70 851.60,485.70 852.00,485.70 852.40,485.70 852.80,485.70 853.20,485.70 853.60,485.70 854.00,485.70 854.40,485.70 854.80,485.70 855.20,485.70 855.60,485.70 856.00,485.70 856.40,485.70 856.80,485.70 857.20,485.70 857.60,485.70 858.00,485.70 858.40,485.70 858.80,485.70 859.20,485.70 859.60,485.70 860.00,485.70 860.40,485.70 860.80,485.70 861.20,485.70 861.60,485.70 862.00,485.70 862.40,485.70 862.80,485.70 863.20,485.70 863.60,485.70 864.00,485.70 864.40,485.70 864.80,485.70 865.20,485.70 865.60,485.70 866.00,485.70 866.40,485.70 866.80,485.70 867.20,485.70 867.60,485.70 868.00,485.70 868.40,485.70 868.80,485.70 869.20,485.70 869.60,485.70 870.00,485.70 870.40,485.70 870.80,485.70 871.20,485.70 871.60,485.70 872.00,485.70 872.40,485.70 872.80,485.70 873.20,485.70 873.60,485.70 874.00,485.70 874.40,485.70 874.80,485.70 875.20,485.70 875.60,485.70 876.00,485.70 876.40,485.70 876.80,485.70 877.20,485.70 877.60,485.70 878.00,485.70 878.40,485.70 878.80,485.70 879.20,485.70 879.60,485.70 880.00,485.70 880.40,485.70 880.80,485.70 881.20,485.70 881.60,485.70 882.00,485.70 882.40,485.70 882.80,485.70 883.20,485.70 883.60,485.70 884.00,485.70 884.40,485.70 884.80,485.70 885.20,485.70 885.60,485.70 886.00,485.70 886.40,485.70 886.80,485.70 887.20,485.70 887.60,485.70 888.00,485.70 888.40,485.70 888.80,485.70 889.20,485.70 889.60,485.70 890.00,485.70 890.40,485.70 890.80,485.70 891.20,485.70 891.60,485.70 892.00,485.70 892.40,485.70 892.80,485.70 893.20,485.70 893.60,485.70 894.00,485.70 894.40,485.70 894.80,485.70 895.20,485.70 895.60,485.70 896.00,485.70 896.40,485.70 896.80,485.70 897.20,485.70 897.60,485.70 898.00,485.70 898.40,485.70 898.80,485.70 899.20,485.70 899.60,485.70 900.00,485.70 900.40,485.70 900.80,485.70 901.20,485.70 901.60,485.70 902.00,485.70 902.40,485.70 902.80,485.70 903.20,485.70 903.60,485.70 904.00,485.70 904.40,485.70 904.80,485.70 905.20,485.70 905.60,485.70 906.00,485.70 906.40,485.70 906.80,485.70 907.20,485.70 907.60,485.70 908.00,485.70 908.40,485.70 908.80,485.70 909.20,485.70 909.60,485.70 910.00,485.70 910.40,485.70 910.80,485.70 911.20,485.70 911.60,485.70 912.00,485.70 912.40,485.70 912.80,485.70 913.20,485.70 913.60,485.70 914.00,485.70 914.40,485.70 914.80,485.70 915.20,485.70 915.60,485.70 916.00,485.70 916.40,485.70 916.80,485.70 917.20,485.70 917.60,485.70 918.00,485.70 918.40,485.70 918.80,485.70 919.20,485.70 919.60,485.70 920.00,485.70 920.40,485.70 920.80,485.70 921.20,485.70 921.60,485.70 922.00,485.70 922.40,485.70 922.80,485.70 923.20,485.70 923.60,485.70 924.00,485.70 924.40,485.70 924.80,485.70 925.20,485.70 925.60,485.70 926.00,485.70 926.40,485.70 926.80,485.70 927.20,485.70 927.60,485.70 928.00,485.70 928.40,485.70 928.80,485.70 929.20,485.70 929.60,485.70 930.00,485.70 930.40,485.70 930.80,485.70 931.20,485.70 931.60,485.70 932.00,485.70 932.40,485.70 932.80,485.70 933.20,485.70 933.60,485.70 934.00,485.70 934.40,485.70 934.80,485.70 935.20,485.70 935.60,485.70 936.00,485.70 936.40,485.70 936.80,485.70 937.20,485.70 937.60,485.70 938.00,485.70 938.40,485.70 938.80,485.70 939.20,485.70 939.60,485.70 940.00,485.70 940.40,485.70 940.80,485.70 941.20,485.70 941.60,485.70 942.00,485.70 942.40,485.70 942.80,485.70 943.20,485.70 943.60,485.70 944.00,485.70 944.40,485.70 944.80,485.70 945.20,485.70 945.60,485.70 946.00,485.70 946.40,485.70 946.80,485.70 947.20,485.70 947.60,485.70 948.00,485.70 948.40,485.70 948.80,485.70 949.20,485.70 949.60,485.70 950.00,485.70 950.40,485.70 950.80,485.70 951.20,485.70 951.60,485.70 952.00,485.70 952.40,485.70 952.80,485.70 953.20,485.70 953.60,485.70 954.00,485.70 954.40,485.70 954.80,485.70 955.20,485.70 955.60,485.70 956.00,485.70 956.40,485.70 956.80,485.70 957.20,485.70 957.60,485.70 958.00,485.70 958.40,485.70 958.80,485.70 959.20,485.70 959.60,485.70 960.00,485.70 960.40,485.70 960.80,485.70 961.20,485.70 961.60,485.70 962.00,485.70 962.40,485.70 962.80,485.70 963.20,485.70 963.60,485.70 964.00,485.70 964.40,485.70 964.80,485.70 965.20,485.70 965.60,485.70 966.00,485.70 966.40,485.70 966.80,485.70 967.20,485.70 967.60,485.70 968.00,485.70 968.40,485.70 968.80,485.70 969.20,485.70 969.60,485.70 970.00,485.70 970.40,485.70 970.80,485.70 971.20,485.70 971.60,485.70 972.00,485.70 972.40,485.70 972.80,485.70 973.20,485.70 973.60,485.70 974.00,485.70 974.40,485.70 974.80,485.70 975.20,485.70 975.60,485.70 976.00,485.70 976.40,485.70 976.80,485.70 977.20,485.70 977.60,485.70 978.00,485.70 978.40,485.70 978.80,485.70 979.20,485.70 979.60,485.70 980.00,485.70 980.40,485.70 980.80,485.70 981.20,485.70 981.60,485.70 982.00,485.70 982.40,485.70 982.80,485.70 983.20,485.70 983.60,485.70 984.00,485.70 984.40,485.70 984.80,485.70 985.20,485.70 985.60,485.70 986.00,485.70 986.40,485.70 986.80,485.70 987.20,485.70 987.60,485.70 988.00,485.70 988.40,485.70 988.80,485.70 989.20,485.70 989.60,485.70 990.00,485.70 990.40,485.70 990.80,485.70 991.20,485.70 991.60,485.70 992.00,485.70 992.40,485.70 992.80,485.70 993.20,485.70 993.60,485.70 994.00,485.70 994.40,485.70 994.80,485.70 995.20,485.70 995.60,485.70 996.00,485.70 996.40,485.70 996.80,485.70 997.20,485.70 997.60,485.70 998.00,485.70 998.40,485.70 998.80,485.70 999.20,485.70 999.60,485.70 1000.00,485.70 1000.40,485.70 1000.80,485.70 1001.20,485.70 1001.60,485.70 1002.00,485.70 1002.40,485.70 1002.80,485.70 1003.20,485.70 1003.60,485.70 1004.00,485.70 1004.40,485.69 1004.80,485.65 1005.20,485.57 1005.60,485.46 1006.00,485.40 1006.40,485.48 1006.80,485.80 1007.20,486.37 1007.60,487.12 1008.00,487.82 1008.40,488.18 1008.80,487.89 1009.20,486.80 1009.60,484.99 1010.00,482.84 1010.40,480.95 1010.80,480.02 1011.20,480.60 1011.60,482.92 1012.00,486.68 1012.40,491.09 1012.80,494.98 1013.20,497.02 1013.60,495.93 1014.00,490.73 1014.40,480.96 1014.80,466.78 1015.20,449.04 1015.60,429.12 1016.00,408.75 1016.40,389.72 1016.80,373.62 1017.20,361.58 1017.60,354.11 1018.00,351.06 1018.40,351.68 1018.80,354.82 1019.20,359.13 1019.60,363.35 1020.00,366.45 1020.40,367.90 1020.80,367.67 1021.20,366.18 1021.60,364.07 1022.00,362.03 1022.40,360.56 1022.80,359.87 1023.20,359.94 1023.60,360.50 1024.00,361.26 1024.40,361.95 1024.80,362.40 1025.20,362.58 1025.60,362.58 1026.00,362.48 1026.40,362.38 1026.80,362.32 1027.20,362.30 1027.60,362.30 1028.00,362.30 1028.40,362.30 1028.80,362.30 1029.20,362.30 1029.60,362.30 1030.00,362.30 1030.40,362.30 1030.80,362.30 1031.20,362.30 1031.60,362.30 1032.00,362.30 1032.40,362.30 1032.80,362.30 1033.20,362.30 1033.60,362.30 1034.00,362.30 1034.40,362.30 1034.80,362.30 1035.20,362.30 1035.60,362.30 1036.00,362.30 1036.40,362.30 1036.80,362.30 1037.20,362.30 1037.60,362.30 1038.00,362.30 1038.40,362.30 1038.80,362.30 1039.20,362.30 1039.60,362.30 1040.00,362.30 1040.40,362.30 1040.80,362.30 1041.20,362.30 1041.60,362.30 1042.00,362.31 1042.40,362.35 1042.80,362.43 1043.20,362.54 1043.60,362.60 1044.00,362.52 1044.40,362.20 1044.80,361.63 1045.20,360.88 1045.60,360.18 1046.00,359.82 1046.40,360.11 1046.80,361.20 1047.20,363.01 1047.60,365.16 1048.00,367.05 1048.40,367.98 1048.80,367.40 1049.20,365.08 1049.60,361.32 1050.00,356.91 1050.40,353.02 1050.80,350.98 1051.20,352.07 1051.60,357.27 1052.00,367.04 1052.40,381.22 1052.80,398.96 1053.20,418.88 1053.60,439.25 1054.00,458.28 1054.40,474.38 1054.80,486.42 1055.20,493.89 1055.60,496.94 1056.00,496.32 1056.40,493.18 1056.80,488.87 1057.20,484.65 1057.60,481.55 1058.00,480.10 1058.40,480.33 1058.80,481.82 1059.20,483.93 1059.60,485.97 1060.00,487.44 1060.40,488.13 1060.80,488.06 1061.20,487.47 1061.60,486.65 1062.00,485.87 1062.40,485.32 1062.80,485.13 1063.20,485.32 1063.60,485.87 1064.00,486.65 1064.40,487.47 1064.80,488.06 1065.20,488.13 1065.60,487.44 1066.00,485.97 1066.40,483.93 1066.80,481.82 1067.20,480.33 1067.60,480.10 1068.00,481.55 1068.40,484.65 1068.80,488.87 1069.20,493.18 1069.60,496.32 1070.00,496.94 1070.40,493.89 1070.80,486.42 1071.20,474.38 1071.60,458.28 1072.00,439.25 1072.40,418.88 1072.80,398.96 1073.20,381.22 1073.60,367.04 1074.00,357.27 1074.40,352.07 1074.80,350.98 1075.20,353.02 1075.60,356.91 1076.00,361.32 1076.40,365.08 1076.80,367.40 1077.20,367.98 1077.60,367.05 1078.00,365.16 1078.40,363.01 1078.80,361.20 1079.20,360.12 1079.60,359.85 1080.00,360.26 1080.40,361.06 1080.80,361.91 1081.20,362.49 1081.60,362.62 1082.00,362.25 1082.40,361.50 1082.80,360.63 1083.20,359.99 1083.60,359.88 1084.00,360.56 1084.40,362.03 1084.80,364.07 1085.20,366.18 1085.60,367.67 1086.00,367.90 1086.40,366.45 1086.80,363.35 1087.20,359.13 1087.60,354.82 1088.00,351.68 1088.40,351.06 1088.80,354.11 1089.20,361.58 1089.60,373.62 1090.00,389.72 1090.40,408.75 1090.80,429.12 1091.20,449.04 1091.60,466.78 1092.00,480.96 1092.40,490.73 1092.80,495.93 1093.20,497.02 1093.60,494.98 1094.00,491.09 1094.40,486.68 1094.80,482.92 1095.20,480.60 1095.60,480.02 1096.00,480.95 1096.40,482.84 1096.80,484.99 1097.20,486.80 1097.60,487.89 1098.00,488.18 1098.40,487.82 1098.80,487.12 1099.20,486.37 1099.60,485.77 1100.00,485.40 1100.40,485.22 1100.80,485.18 1101.20,485.28 1101.60,485.56 1102.00,486.04 1102.40,486.74 1102.80,487.50 1103.20,488.06 1103.60,488.13 1104.00,487.44 1104.40,485.97 1104.80,483.93 1105.20,481.82 1105.60,480.33 1106.00,480.10 1106.40,481.55 1106.80,484.65 1107.20,488.87 1107.60,493.18 1108.00,496.32 1108.40,496.94 1108.80,493.89 1109.20,486.42 1109.60,474.38 1110.00,458.28 1110.40,439.25 1110.80,418.88 1111.20,398.96 1111.60,381.22 1112.00,367.04 1112.40,357.27 1112.80,352.07 1113.20,350.98 1113.60,353.02 1114.00,356.91 1114.40,361.32 1114.80,365.08 1115.20,367.40 1115.60,367.98 1116.00,367.05 1116.40,365.16 1116.80,363.01 1117.20,361.20 1117.60,360.12 1118.00,359.87 1118.40,360.31 1118.80,361.12 1119.20,361.93 1119.60,362.43 1120.00,362.43 1120.40,361.93 1120.80,361.12 1121.20,360.31 1121.60,359.87 1122.00,360.12 1122.40,361.20 1122.80,363.01 1123.20,365.16 1123.60,367.05 1124.00,367.98 1124.40,367.40 1124.80,365.08 1125.20,361.32 1125.60,356.91 1126.00,353.02 1126.40,350.98 1126.80,352.07 1127.20,357.27 1127.60,367.04 1128.00,381.22 1128.40,398.96 1128.80,418.88 1129.20,439.25 1129.60,458.28 1130.00,474.38 1130.40,486.42 1130.80,493.89 1131.20,496.94 1131.60,496.32 1132.00,493.18 1132.40,488.87 1132.80,484.65 1133.20,481.55 1133.60,480.10 1134.00,480.33 1134.40,481.82 1134.80,483.93 1135.20,485.97 1135.60,487.44 1136.00,488.13 1136.40,488.06 1136.80,487.50 1137.20,486.74 1137.60,486.05 1138.00,485.60 1138.40,485.42 1138.80,485.42 1139.20,485.52 1139.60,485.62 1140.00,485.68 1140.40,485.70 1140.80,485.70 1141.20,485.70 1141.60,485.70 1142.00,485.70 1142.40,485.70 1142.80,485.70 1143.20,485.70 1143.60,485.70 1144.00,485.70 1144.40,485.70 1144.80,485.70 1145.20,485.70 1145.60,485.70 1146.00,485.70 1146.40,485.70 1146.80,485.70 1147.20,485.70 1147.60,485.70 1148.00,485.70 1148.40,485.70 1148.80,485.70 1149.20,485.70 1149.60,485.70 1150.00,485.70 1150.40,485.70 1150.80,485.70 1151.20,485.70 1151.60,485.70 1152.00,485.70 1152.40,485.70 1152.80,485.70 1153.20,485.70 1153.60,485.70 1154.00,485.70 1154.40,485.70 1154.80,485.70 1155.20,485.70 1155.60,485.70 1156.00,485.70 1156.40,485.70 1156.80,485.70 1157.20,485.70 1157.60,485.70 1158.00,485.70 1158.40,485.70 1158.80,485.70 1159.20,485.70 1159.60,485.70 1160.00,485.70 1160.40,485.70 1160.80,485.70 1161.20,485.70 1161.60,485.70 1162.00,485.70 1162.40,485.70 1162.80,485.70 1163.20,485.70 1163.60,485.70 1164.00,485.70 1164.40,485.70 1164.80,485.70 1165.20,485.70 1165.60,485.70 1166.00,485.70 1166.40,485.70 1166.80,485.70 1167.20,485.70 1167.60,485.70 1168.00,485.70 1168.40,485.70 1168.80,485.70 1169.20,485.70 1169.60,485.70 1170.00,485.70 1170.40,485.70 1170.80,485.70 1171.20,485.70 1171.60,485.70 1172.00,485.70 1172.40,485.70 1172.80,485.70 1173.20,485.70 1173.60,485.70 1174.00,485.70 1174.40,485.70 1174.80,485.70 1175.20,485.70 1175.60,485.70 1176.00,485.70 1176.40,485.70 1176.80,485.70 1177.20,485.70 1177.60,485.70 1178.00,485.70 1178.40,485.70 1178.80,485.70 1179.20,485.70 1179.60,485.70 1180.00,485.70 1180.40,485.70 1180.80,485.70 1181.20,485.70 1181.60,485.70 1182.00,485.70" fill="none" stroke="#4474b8" stroke-width="1"/>
<path d="M6.5 252.0 q-1.5 0 -1.5 1.5 v14 q0 1.5 1.5 1.5 h13.5 l8.2 -8.5 l-8.2 -8.5 z" fill="#141416" stroke="#6a6a72" stroke-width="1"/>
<text x="10" y="264.0" font-size="8.5" font-weight="bold" fill="#a8acb8" font-family="Liberation Sans" letter-spacing="0.3">R 1</text>
<path d="M6.5 416.0 q-1.5 0 -1.5 1.5 v14 q0 1.5 1.5 1.5 h13.5 l8.2 -8.5 l-8.2 -8.5 z" fill="#0c1018" stroke="#4a6aa0" stroke-width="1"/>
<text x="10" y="428.0" font-size="8.5" font-weight="bold" fill="#5a88c8" font-family="Liberation Sans" letter-spacing="0.3">R 2</text>
<path d="M47 506 H846.7 L840.3 515.5 L835.4 510 H58.2 L53.6 515.6 Z" fill="#cc7fb8"/>
<rect x="2" y="586.1999999999999" width="1180" height="3.2" fill="#ff10ff"/>
<path d="M125.2 587.9 L128.2 580.0 H139.2 L142.2 587.9 L139.2 595.8 H128.2 Z" fill="#000" stroke="#5a10c0" stroke-width="1.1"/>
<path d="M144.0 587.9 L147.0 580.0 H158.5 L161.5 587.9 L158.5 595.8 H147.0 Z" fill="#000" stroke="#b0a010" stroke-width="1.1"/>
<path d="M180.9 587.9 L183.9 580.0 H310.0 L313.0 587.9 L310.0 595.8 H183.9 Z" fill="#000" stroke="#b0a010" stroke-width="1.1"/>
<path d="M388.6 587.9 L391.6 580.0 H611.5 L614.5 587.9 L611.5 595.8 H391.6 Z" fill="#000" stroke="#b0a010" stroke-width="1.1"/>
<path d="M615.5 587.9 L618.5 580.0 H630.0 L633.0 587.9 L630.0 595.8 H618.5 Z" fill="#000" stroke="#5a10c0" stroke-width="1.1"/>
<path d="M653.2 587.9 L656.2 580.0 H800.9 L803.9 587.9 L800.9 595.8 H656.2 Z" fill="#000" stroke="#10a0a8" stroke-width="1.1"/>
<path d="M804.4 587.9 L807.4 580.0 H819.4 L822.4 587.9 L819.4 595.8 H807.4 Z" fill="#000" stroke="#5a10c0" stroke-width="1.1"/>
<path d="M1087.5 587.9 L1090.5 580.0 H1102.4 L1105.4 587.9 L1102.4 595.8 H1090.5 Z" fill="#000" stroke="#5a10c0" stroke-width="1.1"/>
<path d="M1106.4 587.9 L1109.4 580.0 H1140.0 L1143.0 587.9 L1140.0 595.8 H1109.4 Z" fill="#000" stroke="#5a10c0" stroke-width="1.1"/>
<path d="M1162.7 587.9 L1165.7 580.0 H1179.0 L1182.0 587.9 L1179.0 595.8 H1165.7 Z" fill="#000" stroke="#b0a010" stroke-width="1.1"/>
<rect x="335.7" y="580" width="1" height="16" fill="#10c010"/>
<rect x="839.3" y="580" width="1.2" height="16" fill="#c01020"/>
<rect x="1015.7" y="580" width="1.2" height="16" fill="#c0a010"/>
<text x="246.4" y="593.3" text-anchor="middle" font-size="14.6" font-weight="bold" fill="#f4f4f4" font-family="Liberation Sans">PSA:0h</text>
<text x="501.5" y="593.3" text-anchor="middle" font-size="15.6" font-weight="bold" fill="#f4f4f4" font-family="Liberation Sans">Transfer Bus Ownership</text>
<text x="728" y="593.3" text-anchor="middle" font-size="16" font-weight="bold" fill="#f4f4f4" font-family="Liberation Sans">Data:50h</text>
<text x="1124.7" y="593.3" text-anchor="middle" font-size="15" font-weight="bold" fill="#f4f4f4" font-family="Liberation Sans">1h</text>
<path d="M6 580 h14 l7.5 8 l-7.5 8 h-14 q-1.5 0 -1.5 -1.5 v-13 q0 -1.5 1.5 -1.5z" fill="#d8a0f0"/>
<text x="9" y="591" font-size="8" font-weight="bold" fill="#303030" font-family="Liberation Sans">B1</text>
<rect x="36.3" y="582" width="25.4" height="11" fill="#404040" fill-opacity="0.85" stroke="#606060" stroke-width="0.8"/>
<path d="M45 587.8h7 M48.5 584.3v7" stroke="#8a8a8a" stroke-width="1"/>
<rect x="52.8" y="579" width="1" height="18" fill="#d0c010"/>
<text x="36" y="578" font-size="12" fill="#c890e8" font-family="Liberation Sans">SPMI</text>
<text x="83.2" y="665.5" text-anchor="middle" font-size="9" fill="#b8b8b8" font-family="Liberation Sans">9.30 ms</text>
<text x="201.2" y="665.5" text-anchor="middle" font-size="9" fill="#b8b8b8" font-family="Liberation Sans">9.35 ms</text>
<text x="319.3" y="665.5" text-anchor="middle" font-size="9" fill="#b8b8b8" font-family="Liberation Sans">9.40 ms</text>
<text x="437.3" y="665.5" text-anchor="middle" font-size="9" fill="#b8b8b8" font-family="Liberation Sans">9.45 ms</text>
<text x="555.4" y="665.5" text-anchor="middle" font-size="9" fill="#b8b8b8" font-family="Liberation Sans">9.50 ms</text>
<text x="673.5" y="665.5" text-anchor="middle" font-size="9" fill="#b8b8b8" font-family="Liberation Sans">9.55 ms</text>
<text x="791.5" y="665.5" text-anchor="middle" font-size="9" fill="#b8b8b8" font-family="Liberation Sans">9.60 ms</text>
<text x="909.6" y="665.5" text-anchor="middle" font-size="9" fill="#b8b8b8" font-family="Liberation Sans">9.65 ms</text>
<text x="1027.6" y="665.5" text-anchor="middle" font-size="9" fill="#b8b8b8" font-family="Liberation Sans">9.70 ms</text>
<text x="1145.7" y="665.5" text-anchor="middle" font-size="9" fill="#b8b8b8" font-family="Liberation Sans">9.75 ms</text>
<text x="120.0" y="159.5" text-anchor="middle" font-size="9" fill="#c0c0c0" font-family="Liberation Sans">2 ms</text>
<text x="238.1" y="159.5" text-anchor="middle" font-size="9" fill="#c0c0c0" font-family="Liberation Sans">4 ms</text>
<text x="356.2" y="159.5" text-anchor="middle" font-size="9" fill="#c0c0c0" font-family="Liberation Sans">6 ms</text>
<text x="474.3" y="159.5" text-anchor="middle" font-size="9" fill="#c0c0c0" font-family="Liberation Sans">8 ms</text>
<text x="592.4" y="159.5" text-anchor="middle" font-size="9" fill="#c0c0c0" font-family="Liberation Sans">10 ms</text>
<text x="710.5" y="159.5" text-anchor="middle" font-size="9" fill="#c0c0c0" font-family="Liberation Sans">12 ms</text>
<text x="828.6" y="159.5" text-anchor="middle" font-size="9" fill="#c0c0c0" font-family="Liberation Sans">14 ms</text>
<text x="946.7" y="159.5" text-anchor="middle" font-size="9" fill="#c0c0c0" font-family="Liberation Sans">16 ms</text>
<text x="1064.8" y="159.5" text-anchor="middle" font-size="9" fill="#c0c0c0" font-family="Liberation Sans">18 ms</text>
<path d="M552 51 V44 q0 -4 4 -4 H571 q4 0 4 4 V51 Z M552 148 V155 q0 4 4 4 H571 q4 0 4 -4 V148 Z" fill="#000"/>
<rect x="552" y="51" width="18" height="97" fill="#102040" fill-opacity="0.15"/>
<rect x="570" y="40" width="5" height="120" fill="#000"/>
<rect x="550" y="37.3" width="26.8" height="123.9" rx="1.5" fill="none" stroke="#b4b4b4" stroke-opacity="0.8" stroke-width="3"/>
<path d="M543.7 36.5 H557.1 L550.4 45.4 Z M564.8 36.5 H576.3 L570.5 45.4 Z" fill="#cc7fb8"/>
<path d="M2 36 H9 L2 42.5 Z" fill="#f08a20"/>
<path d="M3.4 43.8 h11.4 v12.6 h-3.6 l-2.6 4.2 l-2.6 -4.2 h-2.6 z" fill="#000" stroke="#f08a20" stroke-width="2"/>
<text x="5.4" y="54" font-size="10" font-weight="bold" fill="#f08a20" font-family="Liberation Sans">T</text>
<path d="M4 95.5 h9 l3.5 4.5 l-3.5 4.5 h-9 z" fill="#d8a8f0" stroke="#9060b0" stroke-width="0.6"/>
<text x="5.5" y="102.6" font-size="7" fill="#503070" font-family="Liberation Sans">B1</text>
</svg>
<div class="t" style="left:11px;top:167px;font-size:9px;color:#1a1a1a">Horizontal Zoom Scale</div>
<div class="a" style="left:109px;top:166px;width:61.5px;height:11px;background:#cdcdcd;border-radius:2px"></div>
<div class="t" style="left:109px;width:61.5px;text-align:center;top:167px;font-size:9px;color:#1a1a1a">50.00 us/div</div>
<div class="a" style="left:181.7px;top:166px;width:24.5px;height:11px;background:#363636;border-radius:2px"></div>
<div class="a" style="left:189.2px;top:171px;width:9px;height:1.5px;background:#8a8a8a"></div><div class="a" style="left:193.2px;top:167.5px;width:1.5px;height:8.5px;background:#8a8a8a"></div>
<div class="a" style="left:219px;top:166px;width:24.5px;height:11px;background:#363636;border-radius:2px"></div>
<div class="a" style="left:226.5px;top:171px;width:9px;height:1.5px;background:#8a8a8a"></div>
<div class="t" style="left:251.5px;top:167px;font-size:9px;color:#1a1a1a">(40.00x zoom)</div>
<div class="t" style="left:322.5px;top:167px;font-size:9px;color:#1a1a1a">Vertical Zoom</div>
<div class="a" style="left:387.3px;top:166px;width:24.5px;height:11px;background:#363636;border-radius:2px"></div>
<div class="a" style="left:394.8px;top:171px;width:9px;height:1.5px;background:#8a8a8a"></div><div class="a" style="left:398.8px;top:167.5px;width:1.5px;height:8.5px;background:#8a8a8a"></div>
<div class="a" style="left:424px;top:166px;width:24.5px;height:11px;background:#363636;border-radius:2px"></div>
<div class="a" style="left:431.5px;top:171px;width:9px;height:1.5px;background:#8a8a8a"></div>
<div class="t" style="left:457px;top:167px;font-size:9px;color:#1a1a1a">(1.00x zoom)</div>
<div class="t" style="left:1100px;width:78px;text-align:right;top:191.1px;font-size:9.2px;color:#b8b8b8">520 mV</div>
<div class="t" style="left:1100px;width:78px;text-align:right;top:207.3px;font-size:9.2px;color:#b8b8b8">390 mV</div>
<div class="t" style="left:1100px;width:78px;text-align:right;top:223.5px;font-size:9.2px;color:#b8b8b8">260 mV</div>
<div class="t" style="left:1100px;width:78px;text-align:right;top:239.70000000000002px;font-size:9.2px;color:#b8b8b8">130 mV</div>
<div class="t" style="left:1100px;width:78px;text-align:right;top:255.9px;font-size:9.2px;color:#b8b8b8">0 V</div>
<div class="t" style="left:1100px;width:78px;text-align:right;top:272.09999999999997px;font-size:9.2px;color:#b8b8b8">-130 mV</div>
<div class="t" style="left:1100px;width:78px;text-align:right;top:288.29999999999995px;font-size:9.2px;color:#b8b8b8">-260 mV</div>
<div class="t" style="left:1100px;width:78px;text-align:right;top:304.5px;font-size:9.2px;color:#b8b8b8">-390 mV</div>
<div class="t" style="left:1100px;width:78px;text-align:right;top:320.7px;font-size:9.2px;color:#b8b8b8">-520 mV</div>
<div class="t" style="left:1100px;width:78px;text-align:right;top:355.09999999999997px;font-size:9.2px;color:#b8b8b8">520 mV</div>
<div class="t" style="left:1100px;width:78px;text-align:right;top:371.29999999999995px;font-size:9.2px;color:#b8b8b8">390 mV</div>
<div class="t" style="left:1100px;width:78px;text-align:right;top:387.5px;font-size:9.2px;color:#b8b8b8">260 mV</div>
<div class="t" style="left:1100px;width:78px;text-align:right;top:403.7px;font-size:9.2px;color:#b8b8b8">130 mV</div>
<div class="t" style="left:1100px;width:78px;text-align:right;top:419.9px;font-size:9.2px;color:#b8b8b8">0 V</div>
<div class="t" style="left:1100px;width:78px;text-align:right;top:436.09999999999997px;font-size:9.2px;color:#b8b8b8">-130 mV</div>
<div class="t" style="left:1100px;width:78px;text-align:right;top:452.29999999999995px;font-size:9.2px;color:#b8b8b8">-260 mV</div>
<div class="t" style="left:1100px;width:78px;text-align:right;top:468.5px;font-size:9.2px;color:#b8b8b8">-390 mV</div>
<div class="t" style="left:1100px;width:78px;text-align:right;top:484.7px;font-size:9.2px;color:#b8b8b8">-520 mV</div>
<svg class="a" style="left:1150px;top:36px" width="34" height="34"><path d="M5 5 H28 V29 Z" fill="none" stroke="#5ab8c8" stroke-width="1.2"/><circle cx="23" cy="10" r="3.5" fill="none" stroke="#5ab8c8" stroke-width="1.2"/><path d="M20.5 12.5 L16 17" stroke="#5ab8c8" stroke-width="1.2"/></svg>
<svg class="a" style="left:1166px;top:165px;z-index:0" width="14" height="14"><path d="M2 2 L11 11 M11 2 L2 11" stroke="#b0b0b0" stroke-width="1.4"/></svg>
<div class="a" style="left:865px;top:0;width:320px;height:29px;background:#595959"></div>
<div class="a" style="left:865px;top:29px;width:320px;height:504px;background:rgba(132,132,132,0.9)"></div>
<div class="a" style="left:1182px;top:29px;width:3px;height:504px;background:rgba(170,170,170,0.5)"></div>
<div class="t" style="left:872px;top:9.5px;font-size:10px;color:#e4e4e4">SEARCH 1</div>
<svg class="a" style="left:1153.1px;top:4.4px" width="20" height="20"><circle cx="10" cy="10" r="8.6" fill="none" stroke="#bcbcbc" stroke-width="1.3"/><text x="10.2" y="14.6" text-anchor="middle" font-size="13" font-weight="bold" fill="#bcbcbc" font-family="Liberation Sans">?</text></svg>
<div class="t" style="left:872px;top:43.5px;font-size:10.2px;color:#141414">Display</div>
<div class="a" style="left:874.5px;top:57px;width:32px;height:24px;border-radius:4px;background:#22b8e8"></div>
<div class="a" style="left:906.5px;top:57px;width:14px;height:24.3px;border-radius:4px;background:linear-gradient(#d4d4d4,#b0b0b0 40%,#acacac);border:1px solid #8a8a8a"></div>
<div class="t" style="left:874.5px;width:32px;text-align:center;top:63px;font-size:11px;color:#101828">On</div>
<div class="a" style="left:1049.5px;top:60.8px;width:16.3px;height:16.3px;border-radius:3px;background:linear-gradient(#f2f2f2,#d6d6d6);border:1px solid #9a9a9a"></div>
<div class="t" style="left:1072px;top:58px;font-size:10.6px;line-height:10.5px;color:#141414;white-space:normal">Stop Acquisition<br>if Event Found</div>
<div class="a" style="left:872px;top:91px;width:306px;height:1px;background:#6a5e58"></div>
<div class="t" style="left:872px;top:101.5px;font-size:9.9px;color:#141414">Search Type</div>
<div class="t" style="left:1001px;top:101.5px;font-size:9.9px;color:#141414">Source</div>
<div class="a" style="left:874.5px;top:115px;width:102.5px;height:24.5px;background:#d0d0d0;"></div>
<div class="t" style="left:877px;top:122px;font-size:10px;color:#141414">Bus</div>
<div class="a" style="left:964px;top:125.25px;width:8px;height:6px;background:#7a7a7a;clip-path:polygon(0 0,100% 0,50% 100%)"></div>
<div class="a" style="left:1002.5px;top:115px;width:103.0px;height:24.5px;background:#d0d0d0;"></div>
<div class="t" style="left:1005px;top:122px;font-size:9.6px;color:#141414">Bus 1 (SPMI)</div>
<div class="a" style="left:1092.5px;top:125.25px;width:8px;height:6px;background:#7a7a7a;clip-path:polygon(0 0,100% 0,50% 100%)"></div>
<div class="t" style="left:872px;top:148px;font-size:10.5px;color:#141414">Mark On</div>
<div class="a" style="left:874.5px;top:161.5px;width:103.5px;height:25.0px;border:1.5px solid #5a8ac8;box-shadow:0 0 1.5px #6a9ad0;background:#c4c4c4;"></div>
<div class="t" style="left:878px;top:163.5px;font-size:10.3px;line-height:10px;color:#141414;white-space:normal">Transfer Bus<br>Ownership</div>
<div class="a" style="left:965px;top:172.0px;width:8px;height:6px;background:#7a7a7a;clip-path:polygon(0 0,100% 0,50% 100%)"></div>
<div class="a" style="left:1006.8px;top:165.5px;width:16px;height:16px;border-radius:3px;background:linear-gradient(#f2f2f2,#d6d6d6);border:1px solid #9a9a9a"></div>
<div class="t" style="left:1029.5px;top:168px;font-size:9.8px;color:#141414">No Response</div>
<div class="a" style="left:872.5px;top:489px;width:306px;height:1px;background:#6e6460"></div>
<div class="a" style="left:875px;top:499.5px;width:95.5px;height:23.0px;border-radius:3px;background:linear-gradient(#dcdcdc,#b8b8b8);border:0.5px solid #999"></div>
<div class="t" style="left:875px;width:95.5px;text-align:center;top:501.5px;font-size:10.5px;line-height:10.5px;color:#141414;white-space:normal">Copy Trigger<br>Settings to Search</div>
<div class="a" style="left:1079px;top:499.5px;width:96px;height:23.0px;border-radius:3px;background:linear-gradient(#dcdcdc,#b8b8b8);border:0.5px solid #999"></div>
<div class="t" style="left:1079px;width:96px;text-align:center;top:501.5px;font-size:10.5px;line-height:10.5px;color:#141414;white-space:normal">Copy Search<br>Settings to Trigger</div>
<div class="a" style="left:3px;top:674px;width:60px;height:54px;background:#cdcdcd;border-radius:3px;overflow:hidden"><div class="a" style="left:0;top:0;width:100%;height:13px;background:#4a4a4a"></div><div class="t" style="left:4px;top:1.5px;font-size:10.3px;color:#c8c8c8">Ref 1</div><div class="t" style="left:4px;top:16.5px;font-size:10.3px;color:#101010">130 mV/div</div><div class="t" style="left:4px;top:29.5px;font-size:10.3px;color:#101010">1 MS/s</div><div class="t" style="left:4px;top:42.3px;font-size:10.3px;color:#101010">Spmi_Clo...</div></div>
<div class="a" style="left:67px;top:674px;width:60px;height:54px;background:#cdcdcd;border-radius:3px;overflow:hidden"><div class="a" style="left:0;top:0;width:100%;height:13px;background:#3a4250"></div><div class="t" style="left:4px;top:1.5px;font-size:10.3px;color:#88a8d8">Ref 2</div><div class="t" style="left:4px;top:16.5px;font-size:10.3px;color:#101010">130 mV/div</div><div class="t" style="left:4px;top:29.5px;font-size:10.3px;color:#101010">1 MS/s</div><div class="t" style="left:4px;top:42.3px;font-size:10.3px;color:#101010">Spmi_Da...</div></div>
<div class="a" style="left:131px;top:674px;width:60px;height:54px;background:#cdcdcd;border-radius:3px;overflow:hidden"><div class="a" style="left:0;top:0;width:100%;height:13px;background:#cc99ee"></div><div class="t" style="left:4px;top:1.5px;font-size:10.3px;color:#202020">Bus 1</div><div class="t" style="left:4px;top:16.5px;font-size:10.3px;color:#101010">SPMI</div></div>
<div class="a" style="left:433.0px;top:674px;width:27.0px;height:54px;border:1px solid #5a524c;border-radius:5px;background:linear-gradient(#2e2e2e,#2a2a2a 85%,#1e1e1e)"></div>
<div class="a" style="left:436.0px;top:680px;width:21.0px;height:1.5px;background:#e8e020"></div>
<div class="t" style="left:433.0px;width:27px;text-align:center;top:694px;font-size:13px;color:#e8e8e8">1</div>
<div class="a" style="left:463.5px;top:674px;width:27.0px;height:54px;border:1px solid #5a524c;border-radius:5px;background:linear-gradient(#2e2e2e,#2a2a2a 85%,#1e1e1e)"></div>
<div class="a" style="left:466.5px;top:680px;width:21.0px;height:1.5px;background:#20c8d8"></div>
<div class="t" style="left:463.5px;width:27px;text-align:center;top:694px;font-size:13px;color:#e8e8e8">2</div>
<div class="a" style="left:494.0px;top:674px;width:27.0px;height:54px;border:1px solid #5a524c;border-radius:5px;background:linear-gradient(#2e2e2e,#2a2a2a 85%,#1e1e1e)"></div>
<div class="a" style="left:497.0px;top:680px;width:21.0px;height:1.5px;background:#d83050"></div>
<div class="t" style="left:494.0px;width:27px;text-align:center;top:694px;font-size:13px;color:#e8e8e8">3</div>
<div class="a" style="left:524.5px;top:674px;width:27.0px;height:54px;border:1px solid #5a524c;border-radius:5px;background:linear-gradient(#2e2e2e,#2a2a2a 85%,#1e1e1e)"></div>
<div class="a" style="left:527.5px;top:680px;width:21.0px;height:1.5px;background:#70c830"></div>
<div class="t" style="left:524.5px;width:27px;text-align:center;top:694px;font-size:13px;color:#e8e8e8">4</div>
<div class="a" style="left:555.0px;top:674px;width:27.0px;height:54px;border:1px solid #5a524c;border-radius:5px;background:linear-gradient(#2e2e2e,#2a2a2a 85%,#1e1e1e)"></div>
<div class="a" style="left:558.0px;top:680px;width:21.0px;height:1.5px;background:#f08820"></div>
<div class="t" style="left:555.0px;width:27px;text-align:center;top:694px;font-size:13px;color:#e8e8e8">5</div>
<div class="a" style="left:585.5px;top:674px;width:27.0px;height:54px;border:1px solid #5a524c;border-radius:5px;background:linear-gradient(#2e2e2e,#2a2a2a 85%,#1e1e1e)"></div>
<div class="a" style="left:588.5px;top:680px;width:21.0px;height:1.5px;background:#2020c0"></div>
<div class="t" style="left:585.5px;width:27px;text-align:center;top:694px;font-size:13px;color:#e8e8e8">6</div>
<div class="a" style="left:616.0px;top:674px;width:27.0px;height:54px;border:1px solid #5a524c;border-radius:5px;background:linear-gradient(#2e2e2e,#2a2a2a 85%,#1e1e1e)"></div>
<div class="a" style="left:619.0px;top:680px;width:21.0px;height:1.5px;background:#d040a0"></div>
<div class="t" style="left:616.0px;width:27px;text-align:center;top:694px;font-size:13px;color:#e8e8e8">7</div>
<div class="a" style="left:646.5px;top:674px;width:27.0px;height:54px;border:1px solid #5a524c;border-radius:5px;background:linear-gradient(#2e2e2e,#2a2a2a 85%,#1e1e1e)"></div>
<div class="a" style="left:649.5px;top:680px;width:21.0px;height:1.5px;background:#10c890"></div>
<div class="t" style="left:646.5px;width:27px;text-align:center;top:694px;font-size:13px;color:#e8e8e8">8</div>
<div class="a" style="left:680px;top:674px;width:1px;height:54px;background:#3c3c3c"></div>
<div class="a" style="left:687px;top:674px;width:26.5px;height:54px;border:1px solid #5a524c;border-radius:5px;background:linear-gradient(#2e2e2e,#2a2a2a 85%,#1e1e1e)"></div>
<div class="a" style="left:690px;top:680px;width:20.5px;height:1.5px;background:#f08820"></div>
<div class="t" style="left:687px;width:26.5px;text-align:center;top:686.5px;font-size:10.5px;line-height:10.6px;color:#e8e8e8;white-space:normal">Add<br>New<br>Math</div>
<div class="a" style="left:717.5px;top:674px;width:26.5px;height:54px;border:1px solid #5a524c;border-radius:5px;background:linear-gradient(#2e2e2e,#2a2a2a 85%,#1e1e1e)"></div>
<div class="a" style="left:720.5px;top:680px;width:20.5px;height:1.5px;background:#b8d8b0"></div>
<div class="t" style="left:717.5px;width:26.5px;text-align:center;top:686.5px;font-size:10.5px;line-height:10.6px;color:#e8e8e8;white-space:normal">Add<br>New<br>Ref</div>
<div class="a" style="left:748px;top:674px;width:26.5px;height:54px;border:1px solid #5a524c;border-radius:5px;background:linear-gradient(#2e2e2e,#2a2a2a 85%,#1e1e1e)"></div>
<div class="a" style="left:751px;top:680px;width:20.5px;height:1.5px;background:#b050f0"></div>
<div class="t" style="left:748px;width:26.5px;text-align:center;top:686.5px;font-size:10.5px;line-height:10.6px;color:#e8e8e8;white-space:normal">Add<br>New<br>Bus</div>
<div class="a" style="left:781px;top:674px;width:1px;height:54px;background:#3c3c3c"></div>
<div class="a" style="left:789px;top:674px;width:26.5px;height:54px;border:1px solid #5a524c;border-radius:5px;background:linear-gradient(#2e2e2e,#2a2a2a 85%,#1e1e1e)"></div>
<div class="a" style="left:792px;top:680px;width:20.5px;height:1.5px;background:#4a4a4a"></div>
<div class="t" style="left:789px;width:26.5px;text-align:center;top:697px;font-size:10.5px;color:#e8e8e8">DVM</div>
<div class="a" style="left:823px;top:674px;width:26.5px;height:54px;border:1px solid #5a524c;border-radius:5px;background:linear-gradient(#2e2e2e,#2a2a2a 85%,#1e1e1e)"></div>
<div class="a" style="left:826px;top:680px;width:20.5px;height:1.5px;background:#4a4a4a"></div>
<div class="t" style="left:823px;width:26.5px;text-align:center;top:697px;font-size:10.5px;color:#e8e8e8">AFG</div>
<div class="a" style="left:857px;top:674px;width:1px;height:54px;background:#3c3c3c"></div>
<div class="a" style="left:864.5px;top:674px;width:134.0px;height:54px;background:#cdcdcd;border-radius:3px;overflow:hidden"><div class="a" style="left:0;top:0;width:100%;height:13px;background:#505050"></div><div class="t" style="left:4px;top:1.5px;font-size:10.8px;color:#e0e0e0">Horizontal</div><div class="t" style="left:4px;top:16px;font-size:10px;color:#101010">2 ms/div</div><div class="t" style="left:76px;top:16px;font-size:10px;color:#101010">20 ms</div><div class="t" style="left:4px;top:28.7px;font-size:10px;color:#101010">SR: 62.5 MS/s</div><div class="t" style="left:76px;top:28.7px;font-size:10px;color:#101010">16 ns/pt</div><div class="t" style="left:4px;top:41.4px;font-size:10px;color:#101010">RL: 1.25 Mpts</div><div class="t" style="left:88px;top:41.4px;font-size:10px;color:#101010">0%</div></div>
<div class="a" style="left:940px;top:716px;width:6px;height:7px;background:#e08020;clip-path:polygon(0 0,100% 0,100% 70%,50% 100%,0 70%)"></div>
<div class="a" style="left:1006px;top:674px;width:108px;height:54px;background:#cdcdcd;border-radius:3px;overflow:hidden"><div class="a" style="left:0;top:0;width:100%;height:13px;background:#505050"></div><div class="t" style="left:4px;top:1.5px;font-size:10.8px;color:#e0e0e0">Trigger</div><div class="t" style="left:49px;top:16px;font-size:10px;color:#101010">0 V</div></div>
<div class="a" style="left:1010.5px;top:690.8px;width:20px;height:11px;background:#f0f020;border:1px solid #404020;border-radius:5px"></div>
<div class="t" style="left:1010.5px;width:20px;text-align:center;top:691.5px;font-size:10px;color:#101010">1</div>
<svg class="a" style="left:1037px;top:690px" width="12" height="12"><path d="M1 11 L3 11 L8 3 L11 2" fill="none" stroke="#6060c0" stroke-width="1"/></svg>
<div class="a" style="left:1120.7px;top:674px;width:101.09999999999991px;height:54px;background:#cdcdcd;border-radius:3px;overflow:hidden"><div class="a" style="left:0;top:0;width:100%;height:13px;background:#505050"></div><div class="t" style="left:4px;top:1.5px;font-size:10.8px;color:#e0e0e0">Acquisition</div><div class="t" style="left:4.5px;top:16px;font-size:10px;color:#101010">Auto,</div><div class="t" style="left:44.5px;top:16px;font-size:10px;color:#101010">Analyze</div><div class="t" style="left:4.5px;top:28.7px;font-size:10px;color:#101010">Sample: 12 bits</div><div class="t" style="left:4.5px;top:41.4px;font-size:10px;color:#101010">0 Acqs</div></div>
<div class="a" style="left:1229px;top:674px;width:60px;height:23px;background:#f01c24;border-radius:4px;border:1px solid #a02020"></div>
<div class="t" style="left:1229px;width:60px;text-align:center;top:681px;font-size:8.8px;font-weight:bold;color:#fff">Preview</div>
<div class="a" style="left:1194px;top:18px;width:100px;height:653px;border:1px solid #48484a;border-right:none;background:#2c2c2c"></div>
<div class="t" style="left:1195px;width:100px;text-align:center;top:20.5px;font-size:10.2px;font-weight:bold;color:#f0f0f0">Add New...</div>
<div class="a" style="left:1199px;top:36.3px;width:43px;height:24.8px;border:1px solid #5a524c;border-radius:5px;background:linear-gradient(#363636,#2c2c2c 75%,#1c1c1c)"></div>
<div class="t" style="left:1199px;width:43px;text-align:center;top:43.3px;font-size:9.8px;color:#f0f0f0">Cursors</div>
<div class="a" style="left:1249px;top:36.3px;width:42px;height:24.8px;border:1px solid #5a524c;border-radius:5px;background:linear-gradient(#363636,#2c2c2c 75%,#1c1c1c)"></div>
<div class="t" style="left:1249px;width:42px;text-align:center;top:43.3px;font-size:9.8px;color:#f0f0f0">Note</div>
<div class="a" style="left:1199px;top:68.3px;width:43px;height:24.8px;border:1px solid #5a524c;border-radius:5px;background:linear-gradient(#363636,#2c2c2c 75%,#1c1c1c)"></div>
<div class="t" style="left:1199px;width:43px;text-align:center;top:75.3px;font-size:10.3px;color:#f0f0f0">Measure</div>
<div class="a" style="left:1249px;top:68.3px;width:42px;height:24.8px;border:1px solid #5a524c;border-radius:5px;background:linear-gradient(#363636,#2c2c2c 75%,#1c1c1c)"></div>
<div class="t" style="left:1249px;width:42px;text-align:center;top:75.3px;font-size:9.8px;color:#f0f0f0">Search</div>
<div class="a" style="left:1249px;top:100.3px;width:42px;height:24.8px;border:1px solid #5a524c;border-radius:5px;background:linear-gradient(#363636,#2c2c2c 75%,#1c1c1c)"></div>
<div class="t" style="left:1249px;width:42px;text-align:center;top:107.3px;font-size:9.8px;color:#f0f0f0">Plot</div>
<div class="a" style="left:1199px;top:100.3px;width:43px;height:24.8px;border:1px solid #5a524c;border-radius:5px;background:linear-gradient(#363636,#2c2c2c 75%,#1c1c1c)"></div>
<div class="t" style="left:1199px;width:43px;text-align:center;top:102.5px;font-size:9.8px;line-height:10.5px;color:#f0f0f0;white-space:normal">Results<br>Table</div>
<div class="a" style="left:1197px;top:130.5px;width:96px;height:1px;background:#4a4642"></div>
<div class="a" style="left:1197px;top:138px;width:96px;height:53px;background:#cdcdcd;border-radius:4px;overflow:hidden"><div class="a" style="left:0;top:0;width:96px;height:12px;background:#000"></div></div>
<div class="t" style="left:1200px;top:139.5px;font-size:9.6px;color:#b478e0">Search 1</div>
<div class="a" style="left:1275px;top:140.5px;width:13.5px;height:8px;background:#c890e8;border-radius:1px"></div>
<div class="t" style="left:1275px;width:13.5px;text-align:center;top:141px;font-size:7px;color:#3a2050">B1</div>
<div class="t" style="left:1202px;top:153px;font-size:9.4px;line-height:13px;color:#101010;white-space:normal">Bus: SPMI<br>Search: Bus<br>Events: 2</div>
<div class="a" style="left:1282px;top:167px;width:11px;height:10px;background:#d890c8;clip-path:polygon(0 0,100% 0,50% 100%)"></div>
<div class="a" style="left:1184.5px;top:151.5px;width:12.5px;height:26.5px;background:#7a7a7a;clip-path:polygon(0 0,100% 50%,0 100%)"></div>
<div class="a" style="left:1188px;top:338px;width:2px;height:3px;background:#e0e0e0"></div>
<div class="a" style="left:1188px;top:344px;width:2px;height:3px;background:#e0e0e0"></div>
<div class="a" style="left:1188px;top:350px;width:2px;height:3px;background:#e0e0e0"></div>
<div class="a" style="left:1197px;top:636px;width:96px;height:1px;background:#4a4642"></div>
<div class="a" style="left:1199px;top:642px;width:43px;height:24px;border:1px solid #5a524c;border-radius:5px;background:linear-gradient(#363636,#2c2c2c 75%,#1c1c1c)"></div>
<svg class="a" style="left:1210px;top:645px" width="22" height="20"><path d="M3 3h2M7 3h2M11 3h2M3 3v2M3 7v2M3 11v2" stroke="#c8c8c8" stroke-width="1.2" fill="none"/><circle cx="11" cy="11" r="3.6" fill="#888" stroke="#d0d0d0" stroke-width="1.3"/><path d="M13.6 13.6 L17.5 17.5" stroke="#d0d0d0" stroke-width="2"/></svg>
<svg class="a" style="left:1260px;top:642px" width="22" height="25"><path d="M3.5 5 h14 M5 7 L6 22 h9.5 L16.5 7" fill="none" stroke="#d0d0d0" stroke-width="1.3"/><ellipse cx="10.5" cy="5" rx="7.5" ry="2.2" fill="none" stroke="#d0d0d0" stroke-width="1.3"/><path d="M8.3 9v11 M10.7 9v11 M13.1 9v11" stroke="#d0d0d0" stroke-width="1"/></svg>
<div class="a" style="left:1197px;top:670px;width:96px;height:1px;background:#4a4642"></div>
</body></html>
